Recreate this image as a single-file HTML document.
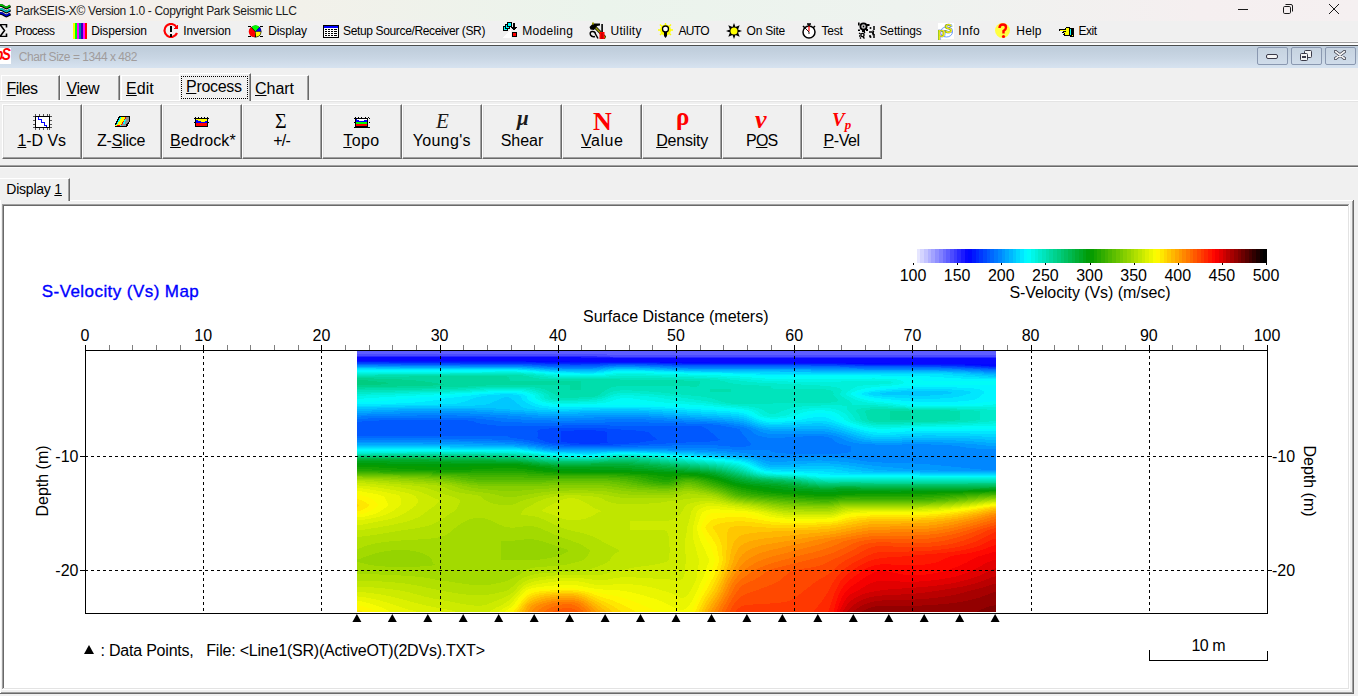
<!DOCTYPE html>
<html><head><meta charset="utf-8"><title>ParkSEIS-X</title>
<style>
html,body{margin:0;padding:0}
body{width:1358px;height:696px;overflow:hidden;position:relative;background:#f0f0f0;font-family:"Liberation Sans",sans-serif;color:#000}
.a{position:absolute;white-space:nowrap}
</style></head>
<body>
<div class="a" style="left:0px;top:0px;width:1358px;height:21px;background:linear-gradient(90deg,#f6efec 0px,#f2f1ea 300px,#ebf4ec 600px,#eef3ef 900px,#f5eff0 1200px,#f5f0f1 1358px);"></div>
<svg class="a" style="left:0;top:0" width="12" height="18" viewBox="0 0 12 18"><path d="M-1 5.5 Q2 5 5 7.5 Q6 8.3 7 7.8 L10.5 6" stroke="#000" stroke-width="2.8" fill="none"/><path d="M-1 5 Q2 4.5 5 7 Q6 7.8 7 7.3 L10 5.5" stroke="#00c000" stroke-width="1.6" fill="none"/><path d="M-1 9.5 Q2 9 5 11.5 Q6 12.3 7 11.8 L10.5 10" stroke="#000" stroke-width="2.8" fill="none"/><path d="M-1 9 Q2 8.5 5 11 Q6 11.8 7 11.3 L10 9.5" stroke="#00c8c8" stroke-width="1.6" fill="none"/><path d="M-1 13.5 Q2 13 5 15.5 Q6 16.3 7 15.8 L10.5 14" stroke="#000" stroke-width="2.8" fill="none"/><path d="M-1 13 Q2 12.5 5 15 Q6 15.8 7 15.3 L10 13.5" stroke="#0000d0" stroke-width="1.6" fill="none"/></svg>
<div class="a" style="left:15.60px;top:5px;font-size:12px;line-height:12px;letter-spacing:-0.307px;color:#1a1a1a;">ParkSEIS-X© Version 1.0 - Copyright Park Seismic LLC</div>
<div class="a" style="left:1238px;top:9px;width:10px;height:1px;background:#1a1a1a;"></div>
<svg class="a" style="left:1282px;top:3px" width="12" height="12" viewBox="0 0 12 12"><rect x="1.5" y="3.5" width="7" height="7" rx="1.2" fill="none" stroke="#1a1a1a" stroke-width="1"/><path d="M3.5 1.5 H9 Q10.5 1.5 10.5 3 V8.5" fill="none" stroke="#1a1a1a" stroke-width="1"/></svg>
<svg class="a" style="left:1328px;top:3px" width="12" height="12" viewBox="0 0 12 12"><path d="M1 1 L11 11 M11 1 L1 11" stroke="#1a1a1a" stroke-width="1"/></svg>
<div class="a" style="left:14.70px;top:25px;font-size:12px;line-height:12px;letter-spacing:-0.508px;">Process</div>
<div class="a" style="left:91.20px;top:25px;font-size:12px;line-height:12px;letter-spacing:-0.099px;">Dispersion</div>
<div class="a" style="left:183.20px;top:25px;font-size:12px;line-height:12px;letter-spacing:-0.111px;">Inversion</div>
<div class="a" style="left:268.20px;top:25px;font-size:12px;line-height:12px;letter-spacing:-0.091px;">Display</div>
<div class="a" style="left:343.10px;top:25px;font-size:12px;line-height:12px;letter-spacing:-0.364px;">Setup Source/Receiver (SR)</div>
<div class="a" style="left:522.20px;top:25px;font-size:12px;line-height:12px;letter-spacing:0.300px;">Modeling</div>
<div class="a" style="left:610.50px;top:25px;font-size:12px;line-height:12px;letter-spacing:0.261px;">Utility</div>
<div class="a" style="left:678.60px;top:25px;font-size:12px;line-height:12px;letter-spacing:-0.739px;">AUTO</div>
<div class="a" style="left:746.60px;top:25px;font-size:12px;line-height:12px;letter-spacing:-0.237px;">On Site</div>
<div class="a" style="left:821.50px;top:25px;font-size:12px;line-height:12px;letter-spacing:-0.203px;">Test</div>
<div class="a" style="left:879.50px;top:25px;font-size:12px;line-height:12px;letter-spacing:-0.151px;">Settings</div>
<div class="a" style="left:958.30px;top:25px;font-size:12px;line-height:12px;letter-spacing:0.495px;">Info</div>
<div class="a" style="left:1016.30px;top:25px;font-size:12px;line-height:12px;letter-spacing:0.173px;">Help</div>
<div class="a" style="left:1078.60px;top:25px;font-size:12px;line-height:12px;letter-spacing:-0.535px;">Exit</div>
<svg class="a" style="left:0px;top:24px" width="9" height="13" viewBox="0 0 9 13" shape-rendering="crispEdges"><path d="M-9 0.5 H6.5 V3.5 M6.5 9.5 V12.5 H-9 M0 0.5 L4.5 6.5 L0 12.5" fill="none" stroke="#000" stroke-width="1.6" shape-rendering="geometricPrecision"/></svg>
<svg class="a" style="left:73px;top:23px" width="14" height="16" viewBox="0 0 14 16" shape-rendering="crispEdges"><rect x="0" y="0" width="2" height="16" fill="#ffff00"/><rect x="2" y="0" width="2" height="16" fill="#00ff00"/><rect x="4" y="0" width="2" height="16" fill="#ff00ff"/><rect x="6" y="0" width="2" height="16" fill="#0080a0"/><rect x="8" y="0" width="2" height="16" fill="#3000c0"/><rect x="10" y="0" width="2" height="16" fill="#ff00ff"/><rect x="12" y="0" width="2" height="16" fill="#ff0000"/></svg>
<svg class="a" style="left:163px;top:23px" width="16" height="15" viewBox="0 0 16 15" shape-rendering="crispEdges"><path d="M13.5 4 A6.5 6.5 0 1 0 14 10" fill="none" stroke="#f00" stroke-width="2.2" shape-rendering="geometricPrecision"/><path d="M10 6 L15 1 L15 6 Z" fill="#f00"/><rect x="6.5" y="3" width="2.5" height="6" fill="#000"/><rect x="6.5" y="11" width="2.5" height="2.5" fill="#000"/></svg>
<svg class="a" style="left:248px;top:25px" width="16" height="13" viewBox="0 0 16 13" shape-rendering="crispEdges"><g shape-rendering="geometricPrecision"><circle cx="7.5" cy="6.5" r="6" fill="#000"/><path d="M7.5 6.5 L3.5 2 A5.3 5.3 0 0 1 11.5 2 Z" fill="#00ff00"/><path d="M7.5 6.5 L11.8 2.3 A5.3 5.3 0 0 1 12.8 6.5 Z" fill="#0000ff"/><path d="M7.5 6.7 H12.8 A5.3 5.3 0 0 1 8 11.8 Z" fill="#ffff00"/><path d="M7 6.7 V11.8 A5.3 5.3 0 0 1 3 2.3 Z" fill="#ff0000"/></g><rect x="0" y="1" width="3" height="1" fill="#000"/><rect x="12" y="1" width="3" height="1" fill="#000"/><rect x="0" y="11" width="3" height="1" fill="#000"/><rect x="12" y="11" width="3" height="1" fill="#000"/></svg>
<svg class="a" style="left:323px;top:25px" width="16" height="13" viewBox="0 0 16 13" shape-rendering="crispEdges"><rect x="0" y="0" width="16" height="13" fill="#000"/><rect x="1" y="1" width="14" height="11" fill="#fff"/><rect x="1" y="1" width="14" height="2" fill="#0000ff"/><rect x="2" y="4" width="2" height="1" fill="#000"/><rect x="5" y="4" width="2" height="1" fill="#000"/><rect x="8" y="4" width="2" height="1" fill="#000"/><rect x="11" y="4" width="3" height="1" fill="#000"/><rect x="2" y="6" width="2" height="1" fill="#000"/><rect x="5" y="6" width="2" height="1" fill="#000"/><rect x="8" y="6" width="2" height="1" fill="#000"/><rect x="11" y="6" width="3" height="1" fill="#000"/><rect x="2" y="8" width="2" height="1" fill="#000"/><rect x="5" y="8" width="2" height="1" fill="#000"/><rect x="8" y="8" width="2" height="1" fill="#000"/><rect x="11" y="8" width="3" height="1" fill="#000"/><rect x="2" y="10" width="2" height="1" fill="#000"/><rect x="5" y="10" width="2" height="1" fill="#000"/><rect x="8" y="10" width="2" height="1" fill="#000"/><rect x="11" y="10" width="3" height="1" fill="#000"/></svg>
<svg class="a" style="left:502px;top:22px" width="16" height="16" viewBox="0 0 16 16" shape-rendering="crispEdges"><rect x="1" y="4" width="5" height="5" fill="#000"/><rect x="2" y="5" width="3" height="3" fill="#0ff"/><rect x="3" y="2" width="5" height="5" fill="#000"/><rect x="4" y="3" width="3" height="3" fill="#0ff"/><rect x="5" y="0" width="5" height="5" fill="#000"/><rect x="6" y="1" width="3" height="3" fill="#0ff"/><path d="M11 1 H13 V5 H15 L12 9 L9 5 H11 Z" fill="#000"/><rect x="10" y="10" width="5" height="5" fill="#000"/><rect x="11" y="11" width="3" height="3" fill="#f00"/><path d="M0 16 L9 7 V16 Z" fill="#fff"/></svg>
<svg class="a" style="left:589px;top:22px" width="17" height="17" viewBox="0 0 17 17" shape-rendering="crispEdges"><g shape-rendering="geometricPrecision"><path d="M6 5 L16.5 16" stroke="#000" stroke-width="3"/><path d="M6 5 L16.5 16" stroke="#9a9a00" stroke-width="1.6"/><path d="M0.5 5 L4 1.5 H11 V3.5 L8 4 L5 8 L1.5 7.5 Z" fill="#000"/><rect x="3" y="0.5" width="2" height="2" fill="#9a9a00"/><rect x="12.3" y="2" width="1.6" height="8" fill="#000"/><rect x="10.5" y="10" width="5" height="7" fill="#f00"/><rect x="12.5" y="11" width="1" height="6" fill="#900"/><path d="M1.5 13 Q0.5 10 3 9.5 Q6 9 6.5 12 L9 16.5 M1.5 13 Q3 15.5 6 14.5" fill="none" stroke="#000" stroke-width="1.5"/></g></svg>
<svg class="a" style="left:658px;top:23px" width="15" height="16" viewBox="0 0 15 16" shape-rendering="crispEdges"><g shape-rendering="geometricPrecision"><circle cx="7.5" cy="7" r="5.5" fill="#ffff00"/><path d="M7.5 0 V3 M0 7 H3 M12 7 H15 M2 1.5 L4 3.5 M13 1.5 L11 3.5 M2 12 L4 10 M13 12 L11 10" stroke="#ff0" stroke-width="1.4"/><circle cx="7.5" cy="6" r="3" fill="#fff" stroke="#000" stroke-width="1.3"/><rect x="6" y="9" width="3" height="4" fill="#000"/><path d="M6 13 L7.5 15 L9 13Z" fill="#000"/></g></svg>
<svg class="a" style="left:726px;top:23px" width="16" height="16" viewBox="0 0 16 16" shape-rendering="crispEdges"><g shape-rendering="geometricPrecision"><path d="M8 0 L9.5 4 L13.7 2.3 L12 6.5 L16 8 L12 9.5 L13.7 13.7 L9.5 12 L8 16 L6.5 12 L2.3 13.7 L4 9.5 L0 8 L4 6.5 L2.3 2.3 L6.5 4 Z" fill="#000"/><circle cx="8" cy="8" r="3.5" fill="#ffff00"/></g></svg>
<svg class="a" style="left:801px;top:23px" width="16" height="16" viewBox="0 0 16 16" shape-rendering="crispEdges"><g shape-rendering="geometricPrecision"><circle cx="8" cy="9" r="6" fill="#fff" stroke="#000" stroke-width="1.5"/><path d="M6 1 H10 M8 1 V3 M2 3 L4 5 M14 3 L12 5" stroke="#000" stroke-width="1.5"/><path d="M8 3 V8.5" stroke="#f00" stroke-width="1.2"/><path d="M8 9 V11 M4 5 L8 9" stroke="#000" stroke-width="0.9"/></g></svg>
<svg class="a" style="left:858px;top:22px" width="17" height="17" viewBox="0 0 17 17" shape-rendering="crispEdges"><g shape-rendering="geometricPrecision"><circle cx="5.5" cy="4.5" r="3" fill="none" stroke="#000" stroke-width="2"/><circle cx="5.5" cy="4.5" r="2" fill="none" stroke="#999" stroke-width="0.7"/><circle cx="5.5" cy="4.5" r="0.9" fill="#000"/><rect x="0" y="0.5" width="1.6" height="3" fill="#000"/><rect x="9" y="2" width="2.5" height="2" fill="#000"/><rect x="4" y="8" width="3" height="2" fill="#000"/><rect x="0" y="7.5" width="2" height="1.5" fill="#000"/><rect x="8" y="7" width="2" height="2" fill="#000"/><path d="M16 4 V8 M16 12 V16" stroke="#000" stroke-width="1.5"/><path d="M15.5 8.5 A4 4.5 0 0 0 15.5 13" fill="none" stroke="#000" stroke-width="1.8"/><path d="M11 10 H14 M11 14 H13" stroke="#000" stroke-width="1.6"/><circle cx="12.5" cy="6" r="1" fill="#000"/><circle cx="12.5" cy="15" r="1" fill="#000"/><circle cx="4.5" cy="13" r="1.6" fill="none" stroke="#000" stroke-width="1.4"/><path d="M1 11 L2.5 12 M1 14 H2.5 M6 11 L7 10 M5 15 L6.5 16.5 M3 15.5 L2 16.5" stroke="#000" stroke-width="1.4"/></g></svg>
<svg class="a" style="left:938px;top:22px" width="16" height="18" viewBox="0 0 16 18" shape-rendering="crispEdges"><rect x="0" y="1" width="16" height="16" fill="#fff"/><g shape-rendering="geometricPrecision"><ellipse cx="8.5" cy="10" rx="6" ry="5" fill="none" stroke="#3c78ff" stroke-width="0.9" opacity="0.8"/><text x="-0.5" y="14.5" font-family="Liberation Sans" font-weight="bold" font-size="13" fill="#e6e600" stroke="#2050b0" stroke-width="0.7" paint-order="stroke">p</text><text x="6.5" y="10.5" font-family="Liberation Sans" font-weight="bold" font-size="12" fill="#e6e600" stroke="#2050b0" stroke-width="0.7" paint-order="stroke">S</text></g></svg>
<svg class="a" style="left:995px;top:22px" width="16" height="17" viewBox="0 0 16 17" shape-rendering="crispEdges"><defs><pattern id="chk" width="2" height="2" patternUnits="userSpaceOnUse"><rect width="2" height="2" fill="#fff"/><rect width="1" height="1" fill="#ff0"/><rect x="1" y="1" width="1" height="1" fill="#ff0"/></pattern></defs><g shape-rendering="geometricPrecision"><circle cx="7.5" cy="8.5" r="7.5" fill="#ffff40"/><path d="M4.5 6 Q4.5 2.5 8 2.5 Q11 2.5 11 5.5 Q11 7.5 8.5 9 V11.5" fill="none" stroke="#f00" stroke-width="2.4"/><circle cx="8.5" cy="14.5" r="1.6" fill="#f00"/></g></svg>
<svg class="a" style="left:1058px;top:26px" width="16" height="12" viewBox="0 0 16 12" shape-rendering="crispEdges"><path d="M0 4 L2 3 H7 L8 1 H11 L12 2 H16 V11 H12 L11 10 H7 L5 9 L6 7.5 L4 7 L5 5.5 L2 5 Z" fill="#000"/><rect x="2" y="4" width="6" height="0.9" fill="#ff0"/><path d="M8 2 H11 V9 H7 L6.5 8 L8 7 L6 6.5 L8 5.5 Z" fill="#ff0"/><rect x="12" y="3" width="1" height="6" fill="#0ff"/><rect x="14" y="9" width="1.2" height="1.2" fill="#ff0"/></svg>
<div class="a" style="left:0px;top:41px;width:1358px;height:1px;background:#f5f5f5;"></div>
<div class="a" style="left:0px;top:42px;width:1358px;height:1px;background:#a0a0a0;"></div>
<div class="a" style="left:0px;top:43px;width:1358px;height:2px;background:#fdfdfd;"></div>
<div class="a" style="left:0px;top:45px;width:1358px;height:1px;background:#4a4d4d;"></div>
<div class="a" style="left:0px;top:46px;width:1358px;height:22px;background:linear-gradient(180deg,#c5d3e2 0px,#bfcddb 2px,#c9d6e4 12px,#d7e3f0 22px);"></div>
<div class="a" style="left:0px;top:48px;width:11px;height:16px;background:#fff;"></div>
<div class="a" style="left:-5px;top:46px;font:bold italic 17px/17px 'Liberation Sans',sans-serif;color:#f00;letter-spacing:-2px;transform:scaleX(0.8);transform-origin:0 0">pS</div>
<div class="a" style="left:18.80px;top:51px;font-size:12px;line-height:12px;letter-spacing:-0.476px;color:#a09c9c;">Chart Size = 1344 x 482</div>
<div class="a" style="left:1257px;top:47px;width:29px;height:16px;border:1px solid #8a98b0;border-radius:2px;background:linear-gradient(180deg,#c6d3e0,#d0dcea)"></div>
<svg class="a" style="left:1266px;top:54px" width="12" height="5"><rect x="0.5" y="0.5" width="11" height="4" rx="1.5" fill="#f4f4f4" stroke="#3a3a48" stroke-width="1"/></svg>
<div class="a" style="left:1291px;top:47px;width:29px;height:16px;border:1px solid #8a98b0;border-radius:2px;background:linear-gradient(180deg,#c6d3e0,#d0dcea)"></div>
<svg class="a" style="left:1300px;top:50px" width="13" height="12"><rect x="4.5" y="0.5" width="7" height="7" rx="1" fill="#f4f4f4" stroke="#3a3a48"/><rect x="0.5" y="3.5" width="7" height="7" rx="1" fill="#f4f4f4" stroke="#3a3a48"/><rect x="2" y="6" width="4" height="2" fill="#3a3a48"/></svg>
<div class="a" style="left:1325px;top:47px;width:29px;height:16px;border:1px solid #8a98b0;border-radius:2px;background:linear-gradient(180deg,#c6d3e0,#d0dcea)"></div>
<svg class="a" style="left:1334px;top:50px" width="12" height="10"><path d="M1.5 1.5 L10.5 8.5 M10.5 1.5 L1.5 8.5" stroke="#3a3a48" stroke-width="3.2" stroke-linecap="round"/><path d="M1.5 1.5 L10.5 8.5 M10.5 1.5 L1.5 8.5" stroke="#f4f4f4" stroke-width="1.6" stroke-linecap="round"/></svg>
<div class="a" style="left:0px;top:100px;width:1358px;height:1px;background:#fff;"></div>
<div class="a" style="left:0px;top:101px;width:1358px;height:1px;background:#e4e4e4;"></div>
<div class="a" style="left:1px;top:75px;width:59px;height:25px;background:#f0f0f0;box-sizing:border-box;border-top:1px solid #fff;border-left:1px solid #fff;border-right:1px solid #696969;box-shadow:inset -1px 0 0 #a0a0a0;"></div>
<div class="a" style="left:6.50px;top:81px;font-size:16px;line-height:16px;letter-spacing:-0.570px;"><span style="text-decoration:underline;text-underline-offset:1px">F</span>iles</div>
<div class="a" style="left:60px;top:75px;width:60px;height:25px;background:#f0f0f0;box-sizing:border-box;border-top:1px solid #fff;border-left:1px solid #fff;border-right:1px solid #696969;box-shadow:inset -1px 0 0 #a0a0a0;"></div>
<div class="a" style="left:66.50px;top:81px;font-size:16px;line-height:16px;letter-spacing:-0.464px;"><span style="text-decoration:underline;text-underline-offset:1px">V</span>iew</div>
<div class="a" style="left:121px;top:75px;width:59px;height:25px;background:#f0f0f0;box-sizing:border-box;border-top:1px solid #fff;border-left:1px solid #fff;"></div>
<div class="a" style="left:126.00px;top:81px;font-size:16px;line-height:16px;letter-spacing:0.077px;"><span style="text-decoration:underline;text-underline-offset:1px">E</span>dit</div>
<div class="a" style="left:179px;top:73px;width:72px;height:28px;background:#f0f0f0;box-sizing:border-box;border-top:1px solid #fff;border-left:1px solid #fff;border-right:1px solid #696969;box-shadow:inset -1px 0 0 #a0a0a0;"></div>
<div class="a" style="left:186.00px;top:79px;font-size:16px;line-height:16px;letter-spacing:-0.300px;"><span style="text-decoration:underline;text-underline-offset:1px">P</span>rocess</div>
<div class="a" style="left:251px;top:75px;width:58px;height:25px;background:#f0f0f0;box-sizing:border-box;border-top:1px solid #fff;border-right:1px solid #696969;box-shadow:inset -1px 0 0 #a0a0a0;"></div>
<div class="a" style="left:255.00px;top:81px;font-size:16px;line-height:16px;letter-spacing:-0.031px;"><span style="text-decoration:underline;text-underline-offset:1px">C</span>hart</div>
<div class="a" style="left:181px;top:76px;width:67px;height:23px;box-sizing:border-box;border:1px dotted #000"></div>
<div class="a" style="left:2px;top:104px;width:80px;height:55px;box-sizing:border-box;background:#f0f0f0;border-top:1px solid #fff;border-left:1px solid #fff;border-right:1px solid #696969;border-bottom:1px solid #696969;box-shadow:inset -1px -1px 0 #a0a0a0,inset 1px 1px 0 #e3e3e3"></div>
<div class="a" style="left:17.50px;top:133px;font-size:16px;line-height:16px;letter-spacing:-0.080px;"><span style="text-decoration:underline;text-underline-offset:1px">1</span>-D Vs</div>
<div class="a" style="left:82px;top:104px;width:80px;height:55px;box-sizing:border-box;background:#f0f0f0;border-top:1px solid #fff;border-left:1px solid #fff;border-right:1px solid #696969;border-bottom:1px solid #696969;box-shadow:inset -1px -1px 0 #a0a0a0,inset 1px 1px 0 #e3e3e3"></div>
<div class="a" style="left:97.00px;top:133px;font-size:16px;line-height:16px;letter-spacing:-0.214px;">Z-<span style="text-decoration:underline;text-underline-offset:1px">S</span>lice</div>
<div class="a" style="left:162px;top:104px;width:80px;height:55px;box-sizing:border-box;background:#f0f0f0;border-top:1px solid #fff;border-left:1px solid #fff;border-right:1px solid #696969;border-bottom:1px solid #696969;box-shadow:inset -1px -1px 0 #a0a0a0,inset 1px 1px 0 #e3e3e3"></div>
<div class="a" style="left:170.10px;top:133px;font-size:16px;line-height:16px;letter-spacing:0.083px;"><span style="text-decoration:underline;text-underline-offset:1px">B</span>edrock*</div>
<div class="a" style="left:242px;top:104px;width:80px;height:55px;box-sizing:border-box;background:#f0f0f0;border-top:1px solid #fff;border-left:1px solid #fff;border-right:1px solid #696969;border-bottom:1px solid #696969;box-shadow:inset -1px -1px 0 #a0a0a0,inset 1px 1px 0 #e3e3e3"></div>
<div class="a" style="left:273.30px;top:133px;font-size:16px;line-height:16px;letter-spacing:-0.809px;">+/-</div>
<div class="a" style="left:322px;top:104px;width:80px;height:55px;box-sizing:border-box;background:#f0f0f0;border-top:1px solid #fff;border-left:1px solid #fff;border-right:1px solid #696969;border-bottom:1px solid #696969;box-shadow:inset -1px -1px 0 #a0a0a0,inset 1px 1px 0 #e3e3e3"></div>
<div class="a" style="left:343.30px;top:133px;font-size:16px;line-height:16px;letter-spacing:0.368px;"><span style="text-decoration:underline;text-underline-offset:1px">T</span>opo</div>
<div class="a" style="left:402px;top:104px;width:80px;height:55px;box-sizing:border-box;background:#f0f0f0;border-top:1px solid #fff;border-left:1px solid #fff;border-right:1px solid #696969;border-bottom:1px solid #696969;box-shadow:inset -1px -1px 0 #a0a0a0,inset 1px 1px 0 #e3e3e3"></div>
<div class="a" style="left:412.80px;top:133px;font-size:16px;line-height:16px;letter-spacing:0.325px;">Young's</div>
<div class="a" style="left:482px;top:104px;width:80px;height:55px;box-sizing:border-box;background:#f0f0f0;border-top:1px solid #fff;border-left:1px solid #fff;border-right:1px solid #696969;border-bottom:1px solid #696969;box-shadow:inset -1px -1px 0 #a0a0a0,inset 1px 1px 0 #e3e3e3"></div>
<div class="a" style="left:500.70px;top:133px;font-size:16px;line-height:16px;letter-spacing:-0.024px;">Shear</div>
<div class="a" style="left:562px;top:104px;width:80px;height:55px;box-sizing:border-box;background:#f0f0f0;border-top:1px solid #fff;border-left:1px solid #fff;border-right:1px solid #696969;border-bottom:1px solid #696969;box-shadow:inset -1px -1px 0 #a0a0a0,inset 1px 1px 0 #e3e3e3"></div>
<div class="a" style="left:581.10px;top:133px;font-size:16px;line-height:16px;letter-spacing:0.516px;"><span style="text-decoration:underline;text-underline-offset:1px">V</span>alue</div>
<div class="a" style="left:642px;top:104px;width:80px;height:55px;box-sizing:border-box;background:#f0f0f0;border-top:1px solid #fff;border-left:1px solid #fff;border-right:1px solid #696969;border-bottom:1px solid #696969;box-shadow:inset -1px -1px 0 #a0a0a0,inset 1px 1px 0 #e3e3e3"></div>
<div class="a" style="left:656.20px;top:133px;font-size:16px;line-height:16px;letter-spacing:-0.209px;"><span style="text-decoration:underline;text-underline-offset:1px">D</span>ensity</div>
<div class="a" style="left:722px;top:104px;width:80px;height:55px;box-sizing:border-box;background:#f0f0f0;border-top:1px solid #fff;border-left:1px solid #fff;border-right:1px solid #696969;border-bottom:1px solid #696969;box-shadow:inset -1px -1px 0 #a0a0a0,inset 1px 1px 0 #e3e3e3"></div>
<div class="a" style="left:746.10px;top:133px;font-size:16px;line-height:16px;letter-spacing:-0.895px;">P<span style="text-decoration:underline;text-underline-offset:1px">O</span>S</div>
<div class="a" style="left:802px;top:104px;width:80px;height:55px;box-sizing:border-box;background:#f0f0f0;border-top:1px solid #fff;border-left:1px solid #fff;border-right:1px solid #696969;border-bottom:1px solid #696969;box-shadow:inset -1px -1px 0 #a0a0a0,inset 1px 1px 0 #e3e3e3"></div>
<div class="a" style="left:823.50px;top:133px;font-size:16px;line-height:16px;letter-spacing:-0.436px;"><span style="text-decoration:underline;text-underline-offset:1px">P</span>-Vel</div>
<svg class="a" style="left:33px;top:114px" width="19" height="16" viewBox="0 0 19 16" shape-rendering="crispEdges"><rect x="2" y="2" width="15" height="12" fill="#000"/><rect x="3" y="3" width="13" height="10" fill="#fff"/><path d="M5 3 V5 H8 V8 H11 V11 H13 V13" fill="none" stroke="#00f" stroke-width="1"/><rect x="2" y="0" width="1" height="2" fill="#555"/><rect x="2" y="14" width="1" height="2" fill="#555"/><rect x="6" y="0" width="1" height="2" fill="#555"/><rect x="6" y="14" width="1" height="2" fill="#555"/><rect x="10" y="0" width="1" height="2" fill="#555"/><rect x="10" y="14" width="1" height="2" fill="#555"/><rect x="14" y="0" width="1" height="2" fill="#555"/><rect x="14" y="14" width="1" height="2" fill="#555"/><rect x="16" y="0" width="1" height="2" fill="#555"/><rect x="16" y="14" width="1" height="2" fill="#555"/><rect x="0" y="2" width="2" height="1" fill="#555"/><rect x="17" y="2" width="2" height="1" fill="#555"/><rect x="0" y="6" width="2" height="1" fill="#555"/><rect x="17" y="6" width="2" height="1" fill="#555"/><rect x="0" y="10" width="2" height="1" fill="#555"/><rect x="17" y="10" width="2" height="1" fill="#555"/><rect x="0" y="13" width="2" height="1" fill="#555"/><rect x="17" y="13" width="2" height="1" fill="#555"/></svg>
<svg class="a" style="left:114px;top:115px" width="16" height="12" viewBox="0 0 16 12" shape-rendering="crispEdges"><path d="M5 0.5 H15.5 V7 L13 11.5 H0.5 V10 Z" fill="#000"/><path d="M6 1.5 H14.5 V6.5 L12.5 9.5 H2 Z" fill="#909090"/><path d="M6 1.5 H12 L7 9.5 H2 Z" fill="#ffff00"/><path d="M6 1.5 H8 L3 9.5 H2 Z" fill="#00ffff"/><path d="M12 1.5 H13 L8 9.5 H7 Z" fill="#ff0000"/><path d="M10 6 L12 3 L11 9 H9Z" fill="#00ffff"/><rect x="1" y="10" width="2" height="1" fill="#ff0"/><rect x="3" y="10" width="3" height="1" fill="#f00"/><rect x="6" y="10" width="1" height="1" fill="#0ff"/><rect x="7" y="10" width="5" height="1" fill="#999"/></svg>
<svg class="a" style="left:194px;top:117px" width="15" height="11" viewBox="0 0 15 11" shape-rendering="crispEdges"><rect x="1" y="1" width="13" height="9" fill="#000"/><rect x="2" y="2" width="11" height="7" fill="#f00"/><rect x="2" y="2" width="11" height="4" fill="#00f"/><path d="M2 2 H13 V4 H11 L10 5 H7 L6 4 H4 L3 3 H2Z" fill="#ff0"/><rect x="1" y="0" width="1" height="1" fill="#000"/><rect x="4" y="0" width="1" height="1" fill="#000"/><rect x="7" y="0" width="1" height="1" fill="#000"/><rect x="10" y="0" width="1" height="1" fill="#000"/><rect x="13" y="0" width="1" height="1" fill="#000"/><rect x="0" y="1" width="1" height="1" fill="#000"/><rect x="14" y="1" width="1" height="1" fill="#000"/><rect x="0" y="5" width="1" height="1" fill="#000"/><rect x="14" y="5" width="1" height="1" fill="#000"/></svg>
<div class="a" style="left:275px;top:111px;font:20px/20px 'Liberation Serif',serif">Σ</div>
<svg class="a" style="left:354px;top:117px" width="16" height="11" viewBox="0 0 16 11" shape-rendering="crispEdges"><rect x="1" y="1" width="13" height="9" fill="#000"/><rect x="2" y="2" width="11" height="7" fill="#f00"/><rect x="2" y="2" width="11" height="5" fill="#0f0"/><rect x="2" y="2" width="11" height="3" fill="#00f"/><path d="M3 2 H13 V3 H10 L9 4 H5 L4 3 H3Z" fill="#fff"/><rect x="1" y="0" width="1" height="1" fill="#000"/><rect x="4" y="0" width="1" height="1" fill="#000"/><rect x="7" y="0" width="1" height="1" fill="#000"/><rect x="11" y="0" width="1" height="1" fill="#000"/><rect x="14" y="0" width="1" height="1" fill="#000"/><rect x="0" y="1" width="1" height="1" fill="#000"/><rect x="15" y="1" width="1" height="1" fill="#000"/><rect x="0" y="5" width="1" height="1" fill="#000"/><rect x="15" y="5" width="1" height="1" fill="#000"/><rect x="0" y="10" width="16" height="1" fill="#000"/></svg>
<div class="a" style="left:436px;top:111px;font:italic 21px/21px 'Liberation Serif',serif;color:#1a1a1a">E</div>
<div class="a" style="left:517px;top:108px;font:bold italic 21px/21px 'Liberation Serif',serif;color:#1a1a1a">μ</div>
<div class="a" style="left:593px;top:109px;font:bold 26px/26px 'Liberation Serif',serif;color:#f00">N</div>
<div class="a" style="left:676px;top:104px;font:bold 25px/25px 'Liberation Serif',serif;color:#f00">ρ</div>
<div class="a" style="left:755px;top:107px;font:bold italic 26px/26px 'Liberation Serif',serif;color:#f00">ν</div>
<div class="a" style="left:832px;top:110px;font:bold italic 19px/19px 'Liberation Serif',serif;color:#f00">V<span style="font-size:13px;position:relative;top:3px">p</span></div>
<div class="a" style="left:0px;top:165px;width:1358px;height:1px;background:#a0a0a0;"></div>
<div class="a" style="left:0px;top:166px;width:1358px;height:1px;background:#696969;"></div>
<div class="a" style="left:0px;top:167px;width:1358px;height:1px;background:#fbfbfb;"></div>
<div class="a" style="left:0px;top:200px;width:1354px;height:1px;background:#fff;"></div>
<div class="a" style="left:0px;top:178px;width:70px;height:23px;background:#f0f0f0;box-sizing:border-box;border-top:1px solid #fff;border-right:1px solid #696969;box-shadow:inset -1px 0 0 #a0a0a0"></div>
<div class="a" style="left:6.30px;top:182px;font-size:14px;line-height:14px;letter-spacing:-0.222px;">Display <span style="text-decoration:underline;text-underline-offset:1px">1</span></div>
<div class="a" style="left:0px;top:200px;width:1px;height:493px;background:#fff;"></div>
<div class="a" style="left:1353px;top:200px;width:1px;height:494px;background:#696969;"></div>
<div class="a" style="left:1352px;top:201px;width:1px;height:492px;background:#a0a0a0;"></div>
<div class="a" style="left:0px;top:693px;width:1354px;height:1px;background:#696969;"></div>
<div class="a" style="left:1px;top:692px;width:1352px;height:1px;background:#a0a0a0;"></div>
<div class="a" style="left:2px;top:204px;width:1348px;height:1px;background:#a0a0a0;"></div>
<div class="a" style="left:2px;top:204px;width:1px;height:486px;background:#a0a0a0;"></div>
<div class="a" style="left:3px;top:205px;width:1346px;height:1px;background:#696969;"></div>
<div class="a" style="left:3px;top:205px;width:1px;height:484px;background:#696969;"></div>
<div class="a" style="left:2px;top:689px;width:1348px;height:1px;background:#fff;"></div>
<div class="a" style="left:1349px;top:204px;width:1px;height:486px;background:#fff;"></div>
<div class="a" style="left:3px;top:688px;width:1346px;height:1px;background:#e3e3e3;"></div>
<div class="a" style="left:1348px;top:205px;width:1px;height:484px;background:#e3e3e3;"></div>
<div class="a" style="left:4px;top:206px;width:1344px;height:482px;background:#fff;"></div>
<svg class="a" style="left:0;top:0" width="1358" height="696" viewBox="0 0 1358 696"><path fill="#5e5eff" d="M357 351h639v3h-639zM607 354h389v1h-389z"/><path fill="#4c4cff" d="M357 354h250v1h-250zM357 355h639v1h-639zM610 356h386v1h-386z"/><path fill="#3c3cff" d="M597 356h13v1h-13z"/><path fill="#2a2aff" d="M357 356h240v1h-240zM613 357h383v1h-383z"/><path fill="#1a1aff" d="M581 357h32v1h-32z"/><path fill="#0808ff" d="M357 357h224v1h-224zM357 358h639v3h-639zM570 361h426v1h-426zM710 362h286v1h-286zM890 363h106v1h-106z"/><path fill="#0008ff" d="M526 361h44v1h-44zM660 362h50v1h-50zM846 363h44v1h-44zM965 364h31v1h-31zM981 365h15v1h-15z"/><path fill="#0018ff" d="M357 361h169v1h-169zM536 362h124v1h-124zM682 363h164v1h-164zM864 364h101v1h-101zM965 365h16v1h-16zM989 366h7v1h-7z"/><path fill="#0028ff" d="M389 362h147v1h-147zM545 363h55v1h-55zM657 363h25v1h-25zM837 364h27v1h-27zM941 365h24v1h-24zM975 366h14v1h-14z"/><path fill="#0038ff" d="M357 362h32v1h-32zM460 363h85v1h-85zM600 363h57v1h-57zM570 364h11v1h-11zM672 364h165v1h-165zM855 365h86v1h-86zM957 366h18v1h-18zM981 367h15v1h-15zM574 430h22v1h-22zM561 431h44v1h-44zM561 432h46v1h-46zM561 433h46v1h-46zM561 434h46v1h-46zM561 435h46v1h-46zM561 436h46v1h-46zM561 437h46v1h-46zM561 438h46v1h-46zM561 439h46v1h-46zM561 440h46v1h-46zM561 441h46v1h-46zM567 442h41v1h-41zM579 443h21v1h-21z"/><path fill="#0048ff" d="M357 363h103v1h-103zM532 364h38v1h-38zM581 364h27v1h-27zM647 364h25v1h-25zM811 365h44v1h-44zM911 366h46v1h-46zM965 367h16v1h-16zM988 368h8v1h-8zM549 428h58v1h-58zM540 429h81v1h-81zM538 430h36v1h-36zM596 430h40v1h-40zM537 431h24v1h-24zM605 431h40v1h-40zM538 432h23v1h-23zM607 432h42v1h-42zM538 433h23v1h-23zM607 433h43v1h-43zM538 434h23v1h-23zM607 434h44v1h-44zM538 435h23v1h-23zM607 435h45v1h-45zM538 436h23v1h-23zM607 436h46v1h-46zM537 437h24v1h-24zM607 437h48v1h-48zM538 438h23v1h-23zM607 438h49v1h-49zM540 439h21v1h-21zM607 439h50v1h-50zM543 440h18v1h-18zM607 440h46v1h-46zM545 441h16v1h-16zM607 441h39v1h-39zM549 442h18v1h-18zM608 442h32v1h-32zM556 443h23v1h-23zM600 443h29v1h-29zM570 444h43v1h-43z"/><path fill="#0058ff" d="M401 364h131v1h-131zM608 364h39v1h-39zM541 365h62v1h-62zM663 365h148v1h-148zM840 366h71v1h-71zM941 367h24v1h-24zM973 368h15v1h-15zM379 420h89v1h-89zM362 421h112v1h-112zM357 422h119v1h-119zM357 423h123v1h-123zM357 424h130v1h-130zM357 425h139v1h-139zM562 425h48v1h-48zM357 426h345v1h-345zM357 427h347v1h-347zM357 428h192v1h-192zM607 428h99v1h-99zM357 429h183v1h-183zM621 429h87v1h-87zM357 430h181v1h-181zM636 430h73v1h-73zM357 431h180v1h-180zM645 431h65v1h-65zM357 432h181v1h-181zM649 432h62v1h-62zM357 433h181v1h-181zM650 433h63v1h-63zM357 434h181v1h-181zM651 434h63v1h-63zM357 435h181v1h-181zM652 435h63v1h-63zM508 436h30v1h-30zM653 436h63v1h-63zM510 437h27v1h-27zM655 437h62v1h-62zM517 438h21v1h-21zM656 438h62v1h-62zM524 439h16v1h-16zM657 439h63v1h-63zM530 440h13v1h-13zM653 440h65v1h-65zM534 441h11v1h-11zM646 441h64v1h-64zM539 442h10v1h-10zM640 442h46v1h-46zM544 443h12v1h-12zM629 443h37v1h-37zM552 444h18v1h-18zM613 444h36v1h-36zM564 445h57v1h-57z"/><path fill="#0068ff" d="M357 364h44v1h-44zM523 365h18v1h-18zM603 365h13v1h-13zM635 365h28v1h-28zM547 366h53v1h-53zM672 366h168v1h-168zM849 367h92v1h-92zM952 368h21v1h-21zM980 369h16v1h-16zM368 418h108v1h-108zM357 419h129v1h-129zM357 420h22v1h-22zM468 420h26v1h-26zM357 421h5v1h-5zM474 421h27v1h-27zM476 422h46v1h-46zM605 422h44v1h-44zM480 423h206v1h-206zM487 424h226v1h-226zM496 425h66v1h-66zM610 425h111v1h-111zM702 426h24v1h-24zM704 427h28v1h-28zM706 428h31v1h-31zM708 429h32v1h-32zM709 430h31v1h-31zM710 431h31v1h-31zM711 432h31v1h-31zM713 433h29v1h-29zM714 434h29v1h-29zM715 435h29v1h-29zM357 436h151v1h-151zM716 436h29v1h-29zM357 437h153v1h-153zM717 437h29v1h-29zM441 438h76v1h-76zM718 438h29v1h-29zM492 439h32v1h-32zM720 439h27v1h-27zM514 440h16v1h-16zM718 440h30v1h-30zM523 441h11v1h-11zM710 441h39v1h-39zM529 442h10v1h-10zM686 442h64v1h-64zM534 443h10v1h-10zM666 443h85v1h-85zM541 444h11v1h-11zM649 444h102v1h-102zM548 445h16v1h-16zM621 445h51v1h-51zM718 445h32v1h-32zM558 446h80v1h-80zM730 446h16v1h-16z"/><path fill="#0078ff" d="M378 365h145v1h-145zM616 365h19v1h-19zM532 366h15v1h-15zM600 366h9v1h-9zM650 366h22v1h-22zM554 367h43v1h-43zM680 367h169v1h-169zM857 368h95v1h-95zM961 369h19v1h-19zM981 370h15v1h-15zM417 415h40v1h-40zM361 416h122v1h-122zM357 417h139v1h-139zM357 418h11v1h-11zM476 418h31v1h-31zM486 419h35v1h-35zM605 419h41v1h-41zM494 420h57v1h-57zM575 420h89v1h-89zM501 421h183v1h-183zM522 422h83v1h-83zM649 422h58v1h-58zM686 423h34v1h-34zM713 424h16v1h-16zM721 425h13v1h-13zM726 426h14v1h-14zM732 427h12v1h-12zM737 428h10v1h-10zM740 429h9v1h-9zM740 430h11v1h-11zM741 431h11v1h-11zM742 432h11v1h-11zM742 433h12v1h-12zM743 434h13v1h-13zM744 435h14v1h-14zM745 436h17v1h-17zM803 436h21v1h-21zM746 437h21v1h-21zM785 437h44v1h-44zM357 438h84v1h-84zM747 438h85v1h-85zM357 439h135v1h-135zM747 439h86v1h-86zM459 440h55v1h-55zM748 440h86v1h-86zM498 441h25v1h-25zM749 441h86v1h-86zM516 442h13v1h-13zM750 442h87v1h-87zM524 443h10v1h-10zM751 443h88v1h-88zM531 444h10v1h-10zM751 444h92v1h-92zM538 445h10v1h-10zM672 445h46v1h-46zM750 445h97v1h-97zM545 446h13v1h-13zM638 446h92v1h-92zM746 446h105v1h-105zM553 447h298v1h-298zM717 448h134v1h-134zM732 449h119v1h-119zM770 450h81v1h-81zM771 451h80v1h-80zM775 452h73v1h-73zM786 453h55v1h-55z"/><path fill="#0087ff" d="M357 365h21v1h-21zM460 366h72v1h-72zM609 366h41v1h-41zM539 367h15v1h-15zM597 367h8v1h-8zM660 367h20v1h-20zM562 368h31v1h-31zM688 368h169v1h-169zM864 369h97v1h-97zM965 370h16v1h-16zM983 371h13v1h-13zM400 413h70v1h-70zM367 414h123v1h-123zM357 415h60v1h-60zM457 415h51v1h-51zM357 416h4v1h-4zM483 416h38v1h-38zM496 417h36v1h-36zM594 417h57v1h-57zM507 418h160v1h-160zM521 419h84v1h-84zM646 419h36v1h-36zM551 420h24v1h-24zM664 420h36v1h-36zM684 421h33v1h-33zM707 422h20v1h-20zM720 423h14v1h-14zM729 424h11v1h-11zM734 425h10v1h-10zM740 426h7v1h-7zM744 427h7v1h-7zM747 428h6v1h-6zM749 429h7v1h-7zM751 430h7v1h-7zM752 431h8v1h-8zM753 432h10v1h-10zM754 433h13v1h-13zM756 434h72v1h-72zM758 435h75v1h-75zM762 436h41v1h-41zM824 436h13v1h-13zM767 437h18v1h-18zM829 437h11v1h-11zM832 438h10v1h-10zM833 439h11v1h-11zM357 440h102v1h-102zM834 440h12v1h-12zM357 441h141v1h-141zM835 441h14v1h-14zM473 442h43v1h-43zM837 442h16v1h-16zM505 443h19v1h-19zM839 443h20v1h-20zM519 444h12v1h-12zM843 444h32v1h-32zM902 444h29v1h-29zM528 445h10v1h-10zM847 445h105v1h-105zM536 446h9v1h-9zM851 446h109v1h-109zM543 447h10v1h-10zM851 447h115v1h-115zM550 448h167v1h-167zM851 448h125v1h-125zM668 449h64v1h-64zM851 449h145v1h-145zM708 450h62v1h-62zM851 450h145v1h-145zM727 451h44v1h-44zM851 451h145v1h-145zM739 452h36v1h-36zM848 452h148v1h-148zM747 453h39v1h-39zM841 453h155v1h-155zM752 454h244v1h-244zM758 455h238v1h-238zM762 456h234v1h-234zM767 457h37v1h-37zM832 457h164v1h-164zM848 458h148v1h-148zM854 459h142v1h-142zM860 460h136v1h-136zM867 461h129v1h-129zM882 462h114v1h-114zM914 463h82v1h-82zM930 464h66v1h-66zM941 465h55v1h-55zM951 466h45v1h-45zM961 467h35v1h-35zM970 468h26v1h-26zM981 469h15v1h-15z"/><path fill="#0097ff" d="M357 366h103v1h-103zM527 367h12v1h-12zM605 367h9v1h-9zM639 367h21v1h-21zM544 368h18v1h-18zM593 368h10v1h-10zM667 368h21v1h-21zM811 369h53v1h-53zM939 370h26v1h-26zM968 371h15v1h-15zM984 372h12v1h-12zM394 411h83v1h-83zM371 412h122v1h-122zM357 413h43v1h-43zM470 413h40v1h-40zM357 414h10v1h-10zM490 414h36v1h-36zM508 415h30v1h-30zM584 415h65v1h-65zM521 416h143v1h-143zM532 417h62v1h-62zM651 417h28v1h-28zM667 418h28v1h-28zM682 419h30v1h-30zM700 420h25v1h-25zM717 421h17v1h-17zM727 422h13v1h-13zM734 423h10v1h-10zM740 424h7v1h-7zM744 425h6v1h-6zM747 426h6v1h-6zM751 427h5v1h-5zM753 428h6v1h-6zM756 429h7v1h-7zM758 430h12v1h-12zM760 431h65v1h-65zM763 432h68v1h-68zM767 433h69v1h-69zM828 434h11v1h-11zM833 435h9v1h-9zM837 436h9v1h-9zM840 437h8v1h-8zM842 438h9v1h-9zM844 439h9v1h-9zM846 440h11v1h-11zM849 441h13v1h-13zM357 442h116v1h-116zM853 442h19v1h-19zM902 442h41v1h-41zM423 443h82v1h-82zM859 443h106v1h-106zM483 444h36v1h-36zM875 444h27v1h-27zM931 444h46v1h-46zM515 445h13v1h-13zM952 445h34v1h-34zM527 446h9v1h-9zM960 446h36v1h-36zM536 447h7v1h-7zM966 447h30v1h-30zM542 448h8v1h-8zM976 448h20v1h-20zM550 449h118v1h-118zM667 450h41v1h-41zM697 451h30v1h-30zM716 452h23v1h-23zM727 453h20v1h-20zM735 454h17v1h-17zM743 455h15v1h-15zM750 456h12v1h-12zM755 457h12v1h-12zM804 457h28v1h-28zM759 458h89v1h-89zM762 459h92v1h-92zM765 460h51v1h-51zM822 460h38v1h-38zM770 461h17v1h-17zM839 461h28v1h-28zM849 462h33v1h-33zM857 463h57v1h-57zM864 464h66v1h-66zM872 465h69v1h-69zM881 466h70v1h-70zM893 467h68v1h-68zM903 468h67v1h-67zM912 469h69v1h-69zM938 470h58v1h-58z"/><path fill="#00a7ff" d="M400 367h127v1h-127zM614 367h25v1h-25zM534 368h10v1h-10zM603 368h7v1h-7zM650 368h17v1h-17zM550 369h51v1h-51zM672 369h139v1h-139zM811 370h128v1h-128zM947 371h21v1h-21zM971 372h13v1h-13zM984 373h12v1h-12zM398 409h77v1h-77zM372 410h122v1h-122zM357 411h37v1h-37zM477 411h33v1h-33zM357 412h14v1h-14zM493 412h32v1h-32zM510 413h28v1h-28zM578 413h71v1h-71zM526 414h137v1h-137zM538 415h46v1h-46zM649 415h27v1h-27zM664 416h26v1h-26zM679 417h28v1h-28zM695 418h28v1h-28zM712 419h21v1h-21zM725 420h14v1h-14zM734 421h10v1h-10zM740 422h7v1h-7zM744 423h6v1h-6zM747 424h5v1h-5zM750 425h5v1h-5zM753 426h5v1h-5zM756 427h6v1h-6zM759 428h9v1h-9zM763 429h66v1h-66zM770 430h63v1h-63zM825 431h12v1h-12zM831 432h10v1h-10zM836 433h8v1h-8zM839 434h8v1h-8zM842 435h8v1h-8zM846 436h7v1h-7zM848 437h8v1h-8zM851 438h8v1h-8zM853 439h11v1h-11zM857 440h14v1h-14zM902 440h54v1h-54zM862 441h112v1h-112zM872 442h30v1h-30zM943 442h43v1h-43zM357 443h66v1h-66zM965 443h31v1h-31zM357 444h126v1h-126zM977 444h19v1h-19zM464 445h51v1h-51zM986 445h10v1h-10zM514 446h13v1h-13zM528 447h8v1h-8zM535 448h7v1h-7zM542 449h8v1h-8zM552 450h115v1h-115zM672 451h25v1h-25zM695 452h21v1h-21zM711 453h16v1h-16zM721 454h14v1h-14zM729 455h14v1h-14zM739 456h11v1h-11zM747 457h8v1h-8zM752 458h7v1h-7zM755 459h7v1h-7zM758 460h7v1h-7zM816 460h6v1h-6zM761 461h9v1h-9zM787 461h52v1h-52zM763 462h86v1h-86zM766 463h41v1h-41zM830 463h27v1h-27zM769 464h22v1h-22zM841 464h23v1h-23zM849 465h23v1h-23zM856 466h25v1h-25zM862 467h31v1h-31zM868 468h35v1h-35zM874 469h38v1h-38zM887 470h51v1h-51zM920 471h76v1h-76z"/><path fill="#00b7ff" d="M357 367h43v1h-43zM522 368h12v1h-12zM610 368h40v1h-40zM540 369h10v1h-10zM601 369h7v1h-7zM655 369h17v1h-17zM557 370h42v1h-42zM684 370h127v1h-127zM780 371h167v1h-167zM953 372h18v1h-18zM970 373h14v1h-14zM982 374h14v1h-14zM994 375h2v1h-2zM377 408h119v1h-119zM357 409h41v1h-41zM475 409h35v1h-35zM357 410h15v1h-15zM494 410h30v1h-30zM510 411h27v1h-27zM580 411h69v1h-69zM525 412h138v1h-138zM538 413h40v1h-40zM649 413h26v1h-26zM663 414h24v1h-24zM676 415h26v1h-26zM690 416h29v1h-29zM707 417h25v1h-25zM723 418h16v1h-16zM733 419h11v1h-11zM739 420h8v1h-8zM744 421h6v1h-6zM747 422h5v1h-5zM750 423h5v1h-5zM752 424h6v1h-6zM755 425h6v1h-6zM758 426h8v1h-8zM800 426h26v1h-26zM762 427h69v1h-69zM768 428h67v1h-67zM829 429h10v1h-10zM833 430h9v1h-9zM837 431h8v1h-8zM841 432h7v1h-7zM844 433h7v1h-7zM847 434h7v1h-7zM850 435h7v1h-7zM853 436h8v1h-8zM856 437h9v1h-9zM859 438h11v1h-11zM902 438h68v1h-68zM864 439h121v1h-121zM871 440h31v1h-31zM956 440h40v1h-40zM974 441h22v1h-22zM986 442h10v1h-10zM357 445h107v1h-107zM450 446h64v1h-64zM517 447h11v1h-11zM528 448h7v1h-7zM536 449h6v1h-6zM544 450h8v1h-8zM558 451h49v1h-49zM647 451h25v1h-25zM677 452h18v1h-18zM694 453h17v1h-17zM707 454h14v1h-14zM717 455h12v1h-12zM727 456h12v1h-12zM737 457h10v1h-10zM745 458h7v1h-7zM750 459h5v1h-5zM753 460h5v1h-5zM756 461h5v1h-5zM758 462h5v1h-5zM760 463h6v1h-6zM807 463h23v1h-23zM762 464h7v1h-7zM791 464h50v1h-50zM764 465h85v1h-85zM768 466h32v1h-32zM834 466h22v1h-22zM843 467h19v1h-19zM849 468h19v1h-19zM855 469h19v1h-19zM861 470h26v1h-26zM873 471h47v1h-47zM920 472h76v1h-76z"/><path fill="#00c7ff" d="M376 368h146v1h-146zM530 369h10v1h-10zM608 369h8v1h-8zM636 369h19v1h-19zM545 370h12v1h-12zM599 370h7v1h-7zM664 370h20v1h-20zM566 371h31v1h-31zM701 371h79v1h-79zM811 372h142v1h-142zM952 373h18v1h-18zM966 374h16v1h-16zM975 375h19v1h-19zM988 376h8v1h-8zM901 391h47v1h-47zM886 392h66v1h-66zM880 393h71v1h-71zM882 394h61v1h-61zM909 395h21v1h-21zM504 397h5v1h-5zM501 398h10v1h-10zM499 399h13v1h-13zM497 400h17v1h-17zM494 401h21v1h-21zM492 402h24v1h-24zM490 403h27v1h-27zM486 404h33v1h-33zM475 405h45v1h-45zM405 406h116v1h-116zM357 407h166v1h-166zM357 408h20v1h-20zM496 408h31v1h-31zM510 409h25v1h-25zM600 409h39v1h-39zM524 410h27v1h-27zM569 410h93v1h-93zM537 411h43v1h-43zM649 411h26v1h-26zM663 412h24v1h-24zM675 413h26v1h-26zM687 414h30v1h-30zM702 415h29v1h-29zM719 416h20v1h-20zM732 417h12v1h-12zM739 418h8v1h-8zM744 419h5v1h-5zM747 420h5v1h-5zM750 421h4v1h-4zM752 422h5v1h-5zM755 423h5v1h-5zM812 423h11v1h-11zM758 424h6v1h-6zM797 424h32v1h-32zM761 425h72v1h-72zM766 426h34v1h-34zM826 426h11v1h-11zM831 427h9v1h-9zM835 428h8v1h-8zM839 429h7v1h-7zM842 430h7v1h-7zM845 431h7v1h-7zM848 432h8v1h-8zM851 433h8v1h-8zM854 434h8v1h-8zM857 435h9v1h-9zM922 435h14v1h-14zM861 436h10v1h-10zM900 436h82v1h-82zM865 437h131v1h-131zM870 438h32v1h-32zM970 438h26v1h-26zM985 439h11v1h-11zM357 446h93v1h-93zM450 447h67v1h-67zM520 448h8v1h-8zM529 449h7v1h-7zM537 450h7v1h-7zM547 451h11v1h-11zM607 451h40v1h-40zM566 452h35v1h-35zM659 452h18v1h-18zM680 453h14v1h-14zM694 454h13v1h-13zM705 455h12v1h-12zM715 456h12v1h-12zM726 457h11v1h-11zM736 458h9v1h-9zM743 459h7v1h-7zM748 460h5v1h-5zM751 461h5v1h-5zM754 462h4v1h-4zM756 463h4v1h-4zM757 464h5v1h-5zM759 465h5v1h-5zM762 466h6v1h-6zM800 466h34v1h-34zM765 467h78v1h-78zM770 468h79v1h-79zM836 469h19v1h-19zM842 470h19v1h-19zM848 471h25v1h-25zM862 472h58v1h-58zM920 473h76v1h-76z"/><path fill="#00d7ff" d="M357 368h19v1h-19zM518 369h12v1h-12zM616 369h20v1h-20zM536 370h9v1h-9zM606 370h7v1h-7zM645 370h19v1h-19zM549 371h17v1h-17zM597 371h7v1h-7zM674 371h27v1h-27zM574 372h22v1h-22zM722 372h89v1h-89zM760 373h192v1h-192zM943 374h23v1h-23zM953 375h22v1h-22zM963 376h25v1h-25zM979 377h17v1h-17zM907 389h45v1h-45zM892 390h72v1h-72zM880 391h21v1h-21zM948 391h22v1h-22zM871 392h15v1h-15zM952 392h19v1h-19zM868 393h12v1h-12zM951 393h19v1h-19zM500 394h13v1h-13zM869 394h13v1h-13zM943 394h23v1h-23zM487 395h32v1h-32zM873 395h36v1h-36zM930 395h33v1h-33zM481 396h40v1h-40zM882 396h77v1h-77zM476 397h28v1h-28zM509 397h12v1h-12zM895 397h58v1h-58zM473 398h28v1h-28zM511 398h11v1h-11zM910 398h30v1h-30zM470 399h29v1h-29zM512 399h10v1h-10zM468 400h29v1h-29zM514 400h9v1h-9zM465 401h29v1h-29zM515 401h10v1h-10zM461 402h31v1h-31zM516 402h10v1h-10zM457 403h33v1h-33zM517 403h11v1h-11zM438 404h48v1h-48zM519 404h11v1h-11zM381 405h94v1h-94zM520 405h12v1h-12zM357 406h48v1h-48zM521 406h14v1h-14zM523 407h16v1h-16zM527 408h21v1h-21zM582 408h69v1h-69zM535 409h65v1h-65zM639 409h34v1h-34zM551 410h18v1h-18zM662 410h25v1h-25zM675 411h26v1h-26zM687 412h30v1h-30zM701 413h30v1h-30zM717 414h22v1h-22zM731 415h13v1h-13zM739 416h8v1h-8zM744 417h5v1h-5zM747 418h5v1h-5zM749 419h5v1h-5zM752 420h5v1h-5zM754 421h5v1h-5zM806 421h21v1h-21zM757 422h6v1h-6zM796 422h36v1h-36zM760 423h9v1h-9zM782 423h30v1h-30zM823 423h12v1h-12zM764 424h33v1h-33zM829 424h9v1h-9zM833 425h8v1h-8zM837 426h7v1h-7zM840 427h7v1h-7zM843 428h7v1h-7zM846 429h7v1h-7zM849 430h7v1h-7zM852 431h8v1h-8zM856 432h8v1h-8zM859 433h9v1h-9zM911 433h59v1h-59zM862 434h11v1h-11zM896 434h100v1h-100zM866 435h56v1h-56zM936 435h60v1h-60zM871 436h29v1h-29zM982 436h14v1h-14zM357 447h93v1h-93zM450 448h70v1h-70zM522 449h7v1h-7zM531 450h6v1h-6zM540 451h7v1h-7zM551 452h15v1h-15zM601 452h13v1h-13zM636 452h23v1h-23zM575 453h22v1h-22zM666 453h14v1h-14zM681 454h13v1h-13zM693 455h12v1h-12zM703 456h12v1h-12zM714 457h12v1h-12zM725 458h11v1h-11zM735 459h8v1h-8zM742 460h6v1h-6zM746 461h5v1h-5zM750 462h4v1h-4zM752 463h4v1h-4zM754 464h3v1h-3zM756 465h3v1h-3zM758 466h4v1h-4zM760 467h5v1h-5zM763 468h7v1h-7zM766 469h70v1h-70zM781 470h61v1h-61zM824 471h24v1h-24zM834 472h28v1h-28zM849 473h71v1h-71zM920 474h76v1h-76z"/><path fill="#00e7ff" d="M357 369h161v1h-161zM527 370h9v1h-9zM613 370h32v1h-32zM539 371h10v1h-10zM604 371h7v1h-7zM654 371h20v1h-20zM554 372h20v1h-20zM596 372h8v1h-8zM684 372h38v1h-38zM580 373h14v1h-14zM733 373h27v1h-27zM756 374h187v1h-187zM881 375h72v1h-72zM930 376h33v1h-33zM944 377h35v1h-35zM961 378h35v1h-35zM912 387h45v1h-45zM898 388h76v1h-76zM886 389h21v1h-21zM952 389h28v1h-28zM875 390h17v1h-17zM964 390h18v1h-18zM869 391h11v1h-11zM970 391h14v1h-14zM864 392h7v1h-7zM971 392h13v1h-13zM494 393h23v1h-23zM862 393h6v1h-6zM970 393h14v1h-14zM479 394h21v1h-21zM513 394h10v1h-10zM862 394h7v1h-7zM966 394h16v1h-16zM471 395h16v1h-16zM519 395h6v1h-6zM865 395h8v1h-8zM963 395h18v1h-18zM462 396h19v1h-19zM521 396h6v1h-6zM869 396h13v1h-13zM959 396h21v1h-21zM454 397h22v1h-22zM521 397h6v1h-6zM874 397h21v1h-21zM953 397h26v1h-26zM445 398h28v1h-28zM522 398h5v1h-5zM881 398h29v1h-29zM940 398h37v1h-37zM440 399h30v1h-30zM522 399h6v1h-6zM891 399h84v1h-84zM433 400h35v1h-35zM523 400h6v1h-6zM901 400h68v1h-68zM425 401h40v1h-40zM525 401h6v1h-6zM911 401h47v1h-47zM415 402h46v1h-46zM526 402h7v1h-7zM396 403h61v1h-61zM528 403h7v1h-7zM357 404h81v1h-81zM530 404h8v1h-8zM357 405h24v1h-24zM532 405h10v1h-10zM535 406h14v1h-14zM539 407h126v1h-126zM548 408h34v1h-34zM651 408h34v1h-34zM673 409h28v1h-28zM687 410h29v1h-29zM701 411h29v1h-29zM717 412h22v1h-22zM731 413h13v1h-13zM739 414h8v1h-8zM744 415h5v1h-5zM747 416h5v1h-5zM749 417h5v1h-5zM813 417h13v1h-13zM752 418h4v1h-4zM807 418h22v1h-22zM754 419h5v1h-5zM802 419h29v1h-29zM757 420h5v1h-5zM795 420h39v1h-39zM759 421h7v1h-7zM785 421h21v1h-21zM827 421h9v1h-9zM763 422h33v1h-33zM832 422h7v1h-7zM769 423h13v1h-13zM835 423h7v1h-7zM838 424h6v1h-6zM841 425h6v1h-6zM844 426h6v1h-6zM847 427h6v1h-6zM850 428h7v1h-7zM853 429h7v1h-7zM856 430h8v1h-8zM860 431h9v1h-9zM905 431h91v1h-91zM864 432h13v1h-13zM890 432h106v1h-106zM868 433h43v1h-43zM970 433h26v1h-26zM873 434h23v1h-23zM357 448h93v1h-93zM441 449h81v1h-81zM524 450h7v1h-7zM533 451h7v1h-7zM543 452h8v1h-8zM614 452h22v1h-22zM555 453h20v1h-20zM597 453h10v1h-10zM650 453h16v1h-16zM582 454h11v1h-11zM669 454h12v1h-12zM682 455h11v1h-11zM692 456h11v1h-11zM702 457h12v1h-12zM713 458h12v1h-12zM725 459h10v1h-10zM734 460h8v1h-8zM741 461h5v1h-5zM745 462h5v1h-5zM748 463h4v1h-4zM750 464h4v1h-4zM752 465h4v1h-4zM754 466h4v1h-4zM757 467h3v1h-3zM759 468h4v1h-4zM761 469h5v1h-5zM764 470h17v1h-17zM772 471h52v1h-52zM804 472h30v1h-30zM818 473h31v1h-31zM830 474h90v1h-90zM919 475h77v1h-77z"/><path fill="#00f7ff" d="M357 370h170v1h-170zM530 371h9v1h-9zM611 371h43v1h-43zM543 372h11v1h-11zM604 372h8v1h-8zM657 372h27v1h-27zM558 373h22v1h-22zM594 373h10v1h-10zM690 373h43v1h-43zM586 374h3v1h-3zM732 374h24v1h-24zM751 375h130v1h-130zM765 376h22v1h-22zM862 376h68v1h-68zM906 377h38v1h-38zM916 378h45v1h-45zM921 379h75v1h-75zM923 380h73v1h-73zM912 385h84v1h-84zM901 386h95v1h-95zM890 387h22v1h-22zM957 387h39v1h-39zM879 388h19v1h-19zM974 388h22v1h-22zM871 389h15v1h-15zM980 389h16v1h-16zM865 390h10v1h-10zM982 390h14v1h-14zM861 391h8v1h-8zM984 391h12v1h-12zM490 392h29v1h-29zM858 392h6v1h-6zM984 392h12v1h-12zM475 393h19v1h-19zM517 393h8v1h-8zM856 393h6v1h-6zM984 393h12v1h-12zM462 394h17v1h-17zM523 394h5v1h-5zM856 394h6v1h-6zM982 394h14v1h-14zM450 395h21v1h-21zM525 395h5v1h-5zM859 395h6v1h-6zM981 395h15v1h-15zM434 396h28v1h-28zM527 396h4v1h-4zM861 396h8v1h-8zM980 396h16v1h-16zM420 397h34v1h-34zM527 397h4v1h-4zM864 397h10v1h-10zM979 397h17v1h-17zM408 398h37v1h-37zM527 398h5v1h-5zM868 398h13v1h-13zM977 398h19v1h-19zM399 399h41v1h-41zM528 399h5v1h-5zM874 399h17v1h-17zM975 399h21v1h-21zM388 400h45v1h-45zM529 400h6v1h-6zM881 400h20v1h-20zM969 400h27v1h-27zM375 401h50v1h-50zM531 401h6v1h-6zM891 401h20v1h-20zM958 401h32v1h-32zM357 402h58v1h-58zM533 402h6v1h-6zM899 402h84v1h-84zM357 403h39v1h-39zM535 403h8v1h-8zM906 403h69v1h-69zM538 404h10v1h-10zM913 404h51v1h-51zM542 405h18v1h-18zM580 405h74v1h-74zM549 406h133v1h-133zM665 407h36v1h-36zM685 408h29v1h-29zM701 409h27v1h-27zM716 410h23v1h-23zM730 411h15v1h-15zM739 412h9v1h-9zM744 413h6v1h-6zM813 413h13v1h-13zM747 414h5v1h-5zM809 414h21v1h-21zM749 415h5v1h-5zM806 415h26v1h-26zM752 416h4v1h-4zM803 416h31v1h-31zM754 417h4v1h-4zM799 417h14v1h-14zM826 417h10v1h-10zM756 418h5v1h-5zM794 418h13v1h-13zM829 418h8v1h-8zM759 419h6v1h-6zM787 419h15v1h-15zM831 419h8v1h-8zM762 420h33v1h-33zM834 420h6v1h-6zM766 421h19v1h-19zM836 421h6v1h-6zM839 422h6v1h-6zM842 423h5v1h-5zM844 424h6v1h-6zM847 425h6v1h-6zM850 426h6v1h-6zM853 427h7v1h-7zM857 428h7v1h-7zM860 429h9v1h-9zM903 429h93v1h-93zM864 430h17v1h-17zM884 430h112v1h-112zM869 431h36v1h-36zM877 432h13v1h-13zM357 449h84v1h-84zM510 450h14v1h-14zM526 451h7v1h-7zM536 452h7v1h-7zM546 453h9v1h-9zM607 453h43v1h-43zM560 454h22v1h-22zM593 454h11v1h-11zM657 454h12v1h-12zM672 455h10v1h-10zM683 456h9v1h-9zM692 457h10v1h-10zM702 458h11v1h-11zM713 459h12v1h-12zM725 460h9v1h-9zM734 461h7v1h-7zM740 462h5v1h-5zM744 463h4v1h-4zM747 464h3v1h-3zM749 465h3v1h-3zM751 466h3v1h-3zM753 467h4v1h-4zM755 468h4v1h-4zM758 469h3v1h-3zM760 470h4v1h-4zM764 471h8v1h-8zM771 472h33v1h-33zM797 473h21v1h-21zM810 474h20v1h-20zM819 475h100v1h-100zM967 476h29v1h-29z"/><path fill="#00fcf8" d="M357 371h138v1h-138zM517 371h13v1h-13zM533 372h10v1h-10zM612 372h45v1h-45zM545 373h13v1h-13zM604 373h9v1h-9zM654 373h36v1h-36zM558 374h28v1h-28zM589 374h16v1h-16zM688 374h44v1h-44zM721 375h30v1h-30zM740 376h25v1h-25zM787 376h75v1h-75zM752 377h154v1h-154zM765 378h107v1h-107zM875 378h41v1h-41zM897 379h24v1h-24zM901 380h22v1h-22zM903 381h93v1h-93zM904 382h92v1h-92zM903 383h93v1h-93zM899 384h97v1h-97zM892 385h20v1h-20zM880 386h21v1h-21zM871 387h19v1h-19zM865 388h14v1h-14zM861 389h10v1h-10zM857 390h8v1h-8zM488 391h34v1h-34zM855 391h6v1h-6zM472 392h18v1h-18zM519 392h8v1h-8zM852 392h6v1h-6zM455 393h20v1h-20zM525 393h5v1h-5zM851 393h5v1h-5zM434 394h28v1h-28zM528 394h5v1h-5zM851 394h5v1h-5zM416 395h34v1h-34zM530 395h5v1h-5zM853 395h6v1h-6zM396 396h38v1h-38zM531 396h4v1h-4zM855 396h6v1h-6zM379 397h41v1h-41zM531 397h4v1h-4zM857 397h7v1h-7zM364 398h44v1h-44zM532 398h4v1h-4zM620 398h13v1h-13zM860 398h8v1h-8zM357 399h42v1h-42zM533 399h5v1h-5zM616 399h24v1h-24zM864 399h10v1h-10zM357 400h31v1h-31zM535 400h5v1h-5zM613 400h34v1h-34zM868 400h13v1h-13zM357 401h18v1h-18zM537 401h5v1h-5zM610 401h45v1h-45zM874 401h17v1h-17zM990 401h6v1h-6zM539 402h7v1h-7zM606 402h58v1h-58zM884 402h15v1h-15zM983 402h13v1h-13zM543 403h9v1h-9zM597 403h78v1h-78zM893 403h13v1h-13zM975 403h21v1h-21zM548 404h141v1h-141zM900 404h13v1h-13zM964 404h29v1h-29zM560 405h20v1h-20zM654 405h50v1h-50zM907 405h76v1h-76zM682 406h32v1h-32zM701 407h23v1h-23zM714 408h22v1h-22zM728 409h16v1h-16zM739 410h10v1h-10zM815 410h10v1h-10zM745 411h7v1h-7zM807 411h25v1h-25zM748 412h6v1h-6zM803 412h32v1h-32zM750 413h5v1h-5zM800 413h13v1h-13zM826 413h11v1h-11zM752 414h5v1h-5zM798 414h11v1h-11zM830 414h9v1h-9zM754 415h4v1h-4zM796 415h10v1h-10zM832 415h8v1h-8zM756 416h4v1h-4zM792 416h11v1h-11zM834 416h7v1h-7zM758 417h6v1h-6zM787 417h12v1h-12zM836 417h7v1h-7zM761 418h9v1h-9zM778 418h16v1h-16zM837 418h7v1h-7zM765 419h22v1h-22zM839 419h5v1h-5zM840 420h6v1h-6zM842 421h6v1h-6zM845 422h5v1h-5zM847 423h6v1h-6zM850 424h6v1h-6zM853 425h6v1h-6zM856 426h7v1h-7zM962 426h34v1h-34zM860 427h8v1h-8zM910 427h86v1h-86zM864 428h12v1h-12zM891 428h105v1h-105zM869 429h34v1h-34zM881 430h3v1h-3zM357 450h153v1h-153zM517 451h9v1h-9zM529 452h7v1h-7zM539 453h7v1h-7zM549 454h11v1h-11zM604 454h8v1h-8zM641 454h16v1h-16zM566 455h35v1h-35zM661 455h11v1h-11zM673 456h10v1h-10zM683 457h9v1h-9zM692 458h10v1h-10zM702 459h11v1h-11zM714 460h11v1h-11zM725 461h9v1h-9zM733 462h7v1h-7zM739 463h5v1h-5zM742 464h5v1h-5zM745 465h4v1h-4zM748 466h3v1h-3zM750 467h3v1h-3zM752 468h3v1h-3zM754 469h4v1h-4zM757 470h3v1h-3zM760 471h4v1h-4zM764 472h7v1h-7zM773 473h24v1h-24zM795 474h15v1h-15zM807 475h12v1h-12zM816 476h151v1h-151z"/><path fill="#00f6e8" d="M495 371h22v1h-22zM357 372h125v1h-125zM521 372h12v1h-12zM535 373h10v1h-10zM613 373h41v1h-41zM546 374h12v1h-12zM605 374h11v1h-11zM646 374h42v1h-42zM556 375h50v1h-50zM676 375h45v1h-45zM707 376h33v1h-33zM727 377h25v1h-25zM740 378h25v1h-25zM872 378h3v1h-3zM751 379h146v1h-146zM762 380h139v1h-139zM788 381h53v1h-53zM891 381h12v1h-12zM893 382h11v1h-11zM891 383h12v1h-12zM879 384h20v1h-20zM863 385h29v1h-29zM857 386h23v1h-23zM855 387h16v1h-16zM853 388h12v1h-12zM851 389h10v1h-10zM486 390h38v1h-38zM850 390h7v1h-7zM472 391h16v1h-16zM522 391h7v1h-7zM848 391h7v1h-7zM450 392h22v1h-22zM527 392h6v1h-6zM847 392h5v1h-5zM420 393h35v1h-35zM530 393h6v1h-6zM846 393h5v1h-5zM395 394h39v1h-39zM533 394h5v1h-5zM846 394h5v1h-5zM366 395h50v1h-50zM535 395h4v1h-4zM620 395h14v1h-14zM847 395h6v1h-6zM357 396h39v1h-39zM535 396h5v1h-5zM614 396h35v1h-35zM849 396h6v1h-6zM357 397h22v1h-22zM535 397h5v1h-5zM611 397h47v1h-47zM851 397h6v1h-6zM357 398h7v1h-7zM536 398h5v1h-5zM608 398h12v1h-12zM633 398h31v1h-31zM853 398h7v1h-7zM538 399h4v1h-4zM606 399h10v1h-10zM640 399h30v1h-30zM855 399h9v1h-9zM540 400h5v1h-5zM603 400h10v1h-10zM647 400h30v1h-30zM858 400h10v1h-10zM542 401h7v1h-7zM597 401h13v1h-13zM655 401h30v1h-30zM862 401h12v1h-12zM546 402h12v1h-12zM578 402h28v1h-28zM664 402h32v1h-32zM867 402h17v1h-17zM552 403h45v1h-45zM675 403h31v1h-31zM876 403h17v1h-17zM689 404h24v1h-24zM888 404h12v1h-12zM993 404h3v1h-3zM704 405h17v1h-17zM896 405h11v1h-11zM983 405h13v1h-13zM714 406h17v1h-17zM905 406h91v1h-91zM724 407h18v1h-18zM736 408h13v1h-13zM809 408h22v1h-22zM744 409h9v1h-9zM802 409h34v1h-34zM749 410h7v1h-7zM798 410h17v1h-17zM825 410h14v1h-14zM752 411h6v1h-6zM795 411h12v1h-12zM832 411h9v1h-9zM754 412h5v1h-5zM792 412h11v1h-11zM835 412h8v1h-8zM755 413h5v1h-5zM790 413h10v1h-10zM837 413h8v1h-8zM757 414h5v1h-5zM789 414h9v1h-9zM839 414h7v1h-7zM758 415h5v1h-5zM786 415h10v1h-10zM840 415h7v1h-7zM760 416h7v1h-7zM780 416h12v1h-12zM841 416h7v1h-7zM764 417h23v1h-23zM843 417h5v1h-5zM770 418h8v1h-8zM844 418h5v1h-5zM844 419h6v1h-6zM846 420h5v1h-5zM848 421h5v1h-5zM850 422h6v1h-6zM853 423h6v1h-6zM993 423h3v1h-3zM856 424h6v1h-6zM973 424h23v1h-23zM859 425h8v1h-8zM936 425h60v1h-60zM863 426h10v1h-10zM901 426h61v1h-61zM868 427h42v1h-42zM876 428h15v1h-15zM357 451h160v1h-160zM520 452h9v1h-9zM531 453h8v1h-8zM541 454h8v1h-8zM612 454h29v1h-29zM552 455h14v1h-14zM601 455h7v1h-7zM649 455h12v1h-12zM573 456h23v1h-23zM664 456h9v1h-9zM674 457h9v1h-9zM683 458h9v1h-9zM692 459h10v1h-10zM704 460h10v1h-10zM715 461h10v1h-10zM725 462h8v1h-8zM732 463h7v1h-7zM737 464h5v1h-5zM741 465h4v1h-4zM744 466h4v1h-4zM747 467h3v1h-3zM749 468h3v1h-3zM751 469h3v1h-3zM754 470h3v1h-3zM756 471h4v1h-4zM760 472h4v1h-4zM764 473h9v1h-9zM776 474h19v1h-19zM796 475h11v1h-11zM807 476h9v1h-9zM817 477h179v1h-179z"/><path fill="#00f0da" d="M482 372h39v1h-39zM357 373h93v1h-93zM524 373h11v1h-11zM536 374h10v1h-10zM616 374h30v1h-30zM544 375h12v1h-12zM606 375h70v1h-70zM553 376h56v1h-56zM662 376h45v1h-45zM694 377h33v1h-33zM718 378h22v1h-22zM730 379h21v1h-21zM739 380h23v1h-23zM747 381h41v1h-41zM841 381h50v1h-50zM757 382h136v1h-136zM777 383h114v1h-114zM801 384h78v1h-78zM820 385h43v1h-43zM831 386h26v1h-26zM837 387h18v1h-18zM840 388h13v1h-13zM484 389h42v1h-42zM841 389h10v1h-10zM470 390h16v1h-16zM524 390h8v1h-8zM842 390h8v1h-8zM450 391h22v1h-22zM529 391h7v1h-7zM841 391h7v1h-7zM409 392h41v1h-41zM533 392h5v1h-5zM841 392h6v1h-6zM371 393h49v1h-49zM536 393h5v1h-5zM617 393h23v1h-23zM840 393h6v1h-6zM357 394h38v1h-38zM538 394h5v1h-5zM613 394h41v1h-41zM840 394h6v1h-6zM357 395h9v1h-9zM539 395h5v1h-5zM610 395h10v1h-10zM634 395h31v1h-31zM841 395h6v1h-6zM540 396h4v1h-4zM608 396h6v1h-6zM649 396h25v1h-25zM842 396h7v1h-7zM540 397h4v1h-4zM605 397h6v1h-6zM658 397h23v1h-23zM844 397h7v1h-7zM541 398h4v1h-4zM602 398h6v1h-6zM664 398h24v1h-24zM845 398h8v1h-8zM542 399h6v1h-6zM597 399h9v1h-9zM670 399h24v1h-24zM847 399h8v1h-8zM545 400h8v1h-8zM589 400h14v1h-14zM677 400h24v1h-24zM849 400h9v1h-9zM549 401h48v1h-48zM685 401h23v1h-23zM850 401h12v1h-12zM558 402h20v1h-20zM696 402h17v1h-17zM851 402h16v1h-16zM706 403h13v1h-13zM852 403h24v1h-24zM713 404h13v1h-13zM852 404h36v1h-36zM721 405h17v1h-17zM821 405h21v1h-21zM878 405h18v1h-18zM731 406h18v1h-18zM802 406h45v1h-45zM893 406h12v1h-12zM742 407h13v1h-13zM795 407h52v1h-52zM906 407h90v1h-90zM749 408h10v1h-10zM790 408h19v1h-19zM831 408h16v1h-16zM957 408h39v1h-39zM753 409h9v1h-9zM787 409h15v1h-15zM836 409h11v1h-11zM987 409h9v1h-9zM756 410h8v1h-8zM784 410h14v1h-14zM839 410h9v1h-9zM758 411h7v1h-7zM781 411h14v1h-14zM841 411h8v1h-8zM759 412h8v1h-8zM779 412h13v1h-13zM843 412h7v1h-7zM760 413h9v1h-9zM776 413h14v1h-14zM845 413h6v1h-6zM762 414h27v1h-27zM846 414h6v1h-6zM763 415h23v1h-23zM847 415h6v1h-6zM767 416h13v1h-13zM848 416h5v1h-5zM848 417h6v1h-6zM849 418h6v1h-6zM850 419h5v1h-5zM851 420h5v1h-5zM853 421h6v1h-6zM989 421h7v1h-7zM856 422h6v1h-6zM978 422h18v1h-18zM859 423h7v1h-7zM958 423h35v1h-35zM862 424h9v1h-9zM921 424h52v1h-52zM867 425h69v1h-69zM873 426h28v1h-28zM357 452h50v1h-50zM486 452h34v1h-34zM523 453h8v1h-8zM534 454h7v1h-7zM544 455h8v1h-8zM608 455h10v1h-10zM631 455h18v1h-18zM555 456h18v1h-18zM596 456h8v1h-8zM654 456h10v1h-10zM666 457h8v1h-8zM675 458h8v1h-8zM684 459h8v1h-8zM694 460h10v1h-10zM705 461h10v1h-10zM716 462h9v1h-9zM725 463h7v1h-7zM731 464h6v1h-6zM736 465h5v1h-5zM740 466h4v1h-4zM743 467h4v1h-4zM746 468h3v1h-3zM748 469h3v1h-3zM751 470h3v1h-3zM753 471h3v1h-3zM756 472h4v1h-4zM760 473h4v1h-4zM766 474h10v1h-10zM782 475h14v1h-14zM798 476h9v1h-9zM809 477h8v1h-8zM819 478h177v1h-177z"/><path fill="#00eaca" d="M450 373h74v1h-74zM357 374h21v1h-21zM526 374h10v1h-10zM534 375h10v1h-10zM540 376h13v1h-13zM609 376h53v1h-53zM548 377h146v1h-146zM676 378h42v1h-42zM710 379h20v1h-20zM720 380h19v1h-19zM725 381h22v1h-22zM728 382h29v1h-29zM733 383h44v1h-44zM741 384h60v1h-60zM759 385h61v1h-61zM771 386h60v1h-60zM771 387h66v1h-66zM480 388h50v1h-50zM773 388h67v1h-67zM466 389h18v1h-18zM526 389h9v1h-9zM826 389h15v1h-15zM443 390h27v1h-27zM532 390h7v1h-7zM620 390h12v1h-12zM831 390h11v1h-11zM395 391h55v1h-55zM536 391h6v1h-6zM613 391h36v1h-36zM833 391h8v1h-8zM357 392h52v1h-52zM538 392h6v1h-6zM610 392h51v1h-51zM833 392h8v1h-8zM357 393h14v1h-14zM541 393h5v1h-5zM608 393h9v1h-9zM640 393h30v1h-30zM834 393h6v1h-6zM543 394h5v1h-5zM606 394h7v1h-7zM654 394h27v1h-27zM833 394h7v1h-7zM544 395h5v1h-5zM605 395h5v1h-5zM665 395h26v1h-26zM834 395h7v1h-7zM544 396h5v1h-5zM602 396h6v1h-6zM674 396h27v1h-27zM835 396h7v1h-7zM544 397h6v1h-6zM598 397h7v1h-7zM681 397h26v1h-26zM836 397h8v1h-8zM545 398h6v1h-6zM592 398h10v1h-10zM688 398h24v1h-24zM837 398h8v1h-8zM548 399h8v1h-8zM578 399h19v1h-19zM694 399h21v1h-21zM838 399h9v1h-9zM553 400h36v1h-36zM701 400h17v1h-17zM838 400h11v1h-11zM708 401h13v1h-13zM837 401h13v1h-13zM713 402h12v1h-12zM831 402h20v1h-20zM719 403h12v1h-12zM773 403h79v1h-79zM726 404h126v1h-126zM738 405h83v1h-83zM842 405h36v1h-36zM749 406h53v1h-53zM847 406h46v1h-46zM755 407h40v1h-40zM847 407h23v1h-23zM888 407h18v1h-18zM759 408h31v1h-31zM847 408h14v1h-14zM908 408h49v1h-49zM762 409h25v1h-25zM847 409h10v1h-10zM957 409h30v1h-30zM764 410h20v1h-20zM848 410h8v1h-8zM974 410h22v1h-22zM765 411h16v1h-16zM849 411h7v1h-7zM980 411h16v1h-16zM767 412h12v1h-12zM850 412h7v1h-7zM980 412h16v1h-16zM769 413h7v1h-7zM851 413h7v1h-7zM980 413h16v1h-16zM852 414h7v1h-7zM980 414h16v1h-16zM853 415h6v1h-6zM980 415h16v1h-16zM853 416h7v1h-7zM980 416h16v1h-16zM854 417h6v1h-6zM980 417h16v1h-16zM855 418h5v1h-5zM980 418h16v1h-16zM855 419h6v1h-6zM980 419h16v1h-16zM856 420h6v1h-6zM976 420h20v1h-20zM859 421h6v1h-6zM968 421h21v1h-21zM862 422h7v1h-7zM947 422h31v1h-31zM866 423h10v1h-10zM904 423h54v1h-54zM871 424h50v1h-50zM407 452h79v1h-79zM357 453h14v1h-14zM509 453h14v1h-14zM526 454h8v1h-8zM536 455h8v1h-8zM618 455h13v1h-13zM546 456h9v1h-9zM604 456h7v1h-7zM641 456h13v1h-13zM559 457h41v1h-41zM657 457h9v1h-9zM667 458h8v1h-8zM676 459h8v1h-8zM685 460h9v1h-9zM695 461h10v1h-10zM706 462h10v1h-10zM716 463h9v1h-9zM724 464h7v1h-7zM730 465h6v1h-6zM735 466h5v1h-5zM739 467h4v1h-4zM742 468h4v1h-4zM745 469h3v1h-3zM747 470h4v1h-4zM750 471h3v1h-3zM753 472h3v1h-3zM756 473h4v1h-4zM761 474h5v1h-5zM768 475h14v1h-14zM788 476h10v1h-10zM801 477h8v1h-8zM811 478h8v1h-8zM821 479h175v1h-175z"/><path fill="#00e4bc" d="M378 374h148v1h-148zM357 375h18v1h-18zM523 375h11v1h-11zM529 376h11v1h-11zM533 377h15v1h-15zM539 378h137v1h-137zM620 379h90v1h-90zM684 380h36v1h-36zM700 381h25v1h-25zM700 382h28v1h-28zM700 383h33v1h-33zM699 384h42v1h-42zM699 385h60v1h-60zM616 386h74v1h-74zM697 386h74v1h-74zM476 387h59v1h-59zM611 387h160v1h-160zM458 388h22v1h-22zM530 388h11v1h-11zM609 388h164v1h-164zM422 389h44v1h-44zM535 389h10v1h-10zM607 389h103v1h-103zM731 389h95v1h-95zM357 390h86v1h-86zM539 390h8v1h-8zM605 390h15v1h-15zM632 390h78v1h-78zM731 390h100v1h-100zM357 391h38v1h-38zM542 391h7v1h-7zM604 391h9v1h-9zM649 391h61v1h-61zM731 391h102v1h-102zM544 392h7v1h-7zM602 392h8v1h-8zM661 392h172v1h-172zM546 393h7v1h-7zM601 393h7v1h-7zM670 393h164v1h-164zM548 394h7v1h-7zM600 394h6v1h-6zM681 394h152v1h-152zM549 395h7v1h-7zM598 395h7v1h-7zM691 395h143v1h-143zM549 396h9v1h-9zM595 396h7v1h-7zM701 396h134v1h-134zM550 397h10v1h-10zM579 397h19v1h-19zM707 397h129v1h-129zM551 398h41v1h-41zM712 398h125v1h-125zM556 399h22v1h-22zM715 399h123v1h-123zM718 400h120v1h-120zM721 401h116v1h-116zM725 402h106v1h-106zM731 403h42v1h-42zM870 407h18v1h-18zM861 408h47v1h-47zM857 409h13v1h-13zM909 409h48v1h-48zM856 410h10v1h-10zM950 410h24v1h-24zM856 411h9v1h-9zM960 411h20v1h-20zM857 412h8v1h-8zM960 412h20v1h-20zM858 413h8v1h-8zM960 413h20v1h-20zM859 414h7v1h-7zM960 414h20v1h-20zM859 415h7v1h-7zM960 415h20v1h-20zM860 416h7v1h-7zM960 416h20v1h-20zM860 417h7v1h-7zM960 417h20v1h-20zM860 418h7v1h-7zM960 418h20v1h-20zM861 419h7v1h-7zM960 419h20v1h-20zM862 420h7v1h-7zM955 420h21v1h-21zM865 421h8v1h-8zM938 421h30v1h-30zM869 422h78v1h-78zM876 423h28v1h-28zM371 453h138v1h-138zM516 454h10v1h-10zM529 455h7v1h-7zM538 456h8v1h-8zM611 456h30v1h-30zM547 457h12v1h-12zM600 457h7v1h-7zM647 457h10v1h-10zM567 458h28v1h-28zM659 458h8v1h-8zM668 459h8v1h-8zM677 460h8v1h-8zM686 461h9v1h-9zM696 462h10v1h-10zM707 463h9v1h-9zM717 464h7v1h-7zM724 465h6v1h-6zM729 466h6v1h-6zM734 467h5v1h-5zM738 468h4v1h-4zM741 469h4v1h-4zM744 470h3v1h-3zM747 471h3v1h-3zM750 472h3v1h-3zM753 473h3v1h-3zM757 474h4v1h-4zM762 475h6v1h-6zM774 476h14v1h-14zM793 477h8v1h-8zM804 478h7v1h-7zM813 479h8v1h-8zM823 480h173v1h-173z"/><path fill="#00deac" d="M375 375h148v1h-148zM357 376h52v1h-52zM507 376h22v1h-22zM509 377h24v1h-24zM509 378h30v1h-30zM510 379h110v1h-110zM510 380h174v1h-174zM581 381h119v1h-119zM581 382h119v1h-119zM581 383h119v1h-119zM581 384h118v1h-118zM486 385h84v1h-84zM581 385h118v1h-118zM468 386h102v1h-102zM581 386h35v1h-35zM690 386h7v1h-7zM436 387h40v1h-40zM535 387h35v1h-35zM581 387h30v1h-30zM365 388h93v1h-93zM541 388h29v1h-29zM581 388h28v1h-28zM357 389h65v1h-65zM545 389h25v1h-25zM581 389h26v1h-26zM710 389h21v1h-21zM547 390h58v1h-58zM710 390h21v1h-21zM549 391h55v1h-55zM710 391h21v1h-21zM551 392h51v1h-51zM553 393h48v1h-48zM555 394h45v1h-45zM556 395h42v1h-42zM558 396h37v1h-37zM560 397h19v1h-19zM870 409h39v1h-39zM866 410h84v1h-84zM865 411h25v1h-25zM911 411h49v1h-49zM865 412h25v1h-25zM911 412h49v1h-49zM866 413h24v1h-24zM911 413h49v1h-49zM866 414h24v1h-24zM911 414h49v1h-49zM866 415h24v1h-24zM911 415h49v1h-49zM867 416h23v1h-23zM911 416h49v1h-49zM867 417h23v1h-23zM911 417h49v1h-49zM867 418h23v1h-23zM911 418h49v1h-49zM868 419h22v1h-22zM911 419h49v1h-49zM869 420h86v1h-86zM873 421h65v1h-65zM357 454h31v1h-31zM485 454h31v1h-31zM520 455h9v1h-9zM531 456h7v1h-7zM539 457h8v1h-8zM607 457h8v1h-8zM634 457h13v1h-13zM549 458h18v1h-18zM595 458h9v1h-9zM650 458h9v1h-9zM660 459h8v1h-8zM669 460h8v1h-8zM678 461h8v1h-8zM687 462h9v1h-9zM698 463h9v1h-9zM708 464h9v1h-9zM717 465h7v1h-7zM723 466h6v1h-6zM728 467h6v1h-6zM733 468h5v1h-5zM737 469h4v1h-4zM740 470h4v1h-4zM744 471h3v1h-3zM747 472h3v1h-3zM750 473h3v1h-3zM753 474h4v1h-4zM758 475h4v1h-4zM765 476h9v1h-9zM782 477h11v1h-11zM797 478h7v1h-7zM806 479h7v1h-7zM814 480h9v1h-9zM825 481h171v1h-171z"/><path fill="#00d89e" d="M409 376h98v1h-98zM357 377h152v1h-152zM374 378h135v1h-135zM402 379h108v1h-108zM416 380h94v1h-94zM425 381h156v1h-156zM432 382h149v1h-149zM438 383h143v1h-143zM444 384h137v1h-137zM433 385h53v1h-53zM570 385h11v1h-11zM397 386h71v1h-71zM570 386h11v1h-11zM357 387h79v1h-79zM570 387h11v1h-11zM357 388h8v1h-8zM570 388h11v1h-11zM570 389h11v1h-11zM890 411h21v1h-21zM890 412h21v1h-21zM890 413h21v1h-21zM890 414h21v1h-21zM890 415h21v1h-21zM890 416h21v1h-21zM890 417h21v1h-21zM890 418h21v1h-21zM890 419h21v1h-21zM388 454h97v1h-97zM500 455h20v1h-20zM522 456h9v1h-9zM532 457h7v1h-7zM615 457h19v1h-19zM540 458h9v1h-9zM604 458h7v1h-7zM639 458h11v1h-11zM551 459h49v1h-49zM651 459h9v1h-9zM660 460h9v1h-9zM669 461h9v1h-9zM678 462h9v1h-9zM688 463h10v1h-10zM699 464h9v1h-9zM709 465h8v1h-8zM717 466h6v1h-6zM723 467h5v1h-5zM728 468h5v1h-5zM732 469h5v1h-5zM736 470h4v1h-4zM740 471h4v1h-4zM743 472h4v1h-4zM746 473h4v1h-4zM750 474h3v1h-3zM754 475h4v1h-4zM759 476h6v1h-6zM770 477h12v1h-12zM788 478h9v1h-9zM800 479h6v1h-6zM808 480h6v1h-6zM815 481h10v1h-10zM828 482h11v1h-11zM861 482h135v1h-135z"/><path fill="#00d28e" d="M357 378h17v1h-17zM357 379h45v1h-45zM368 380h48v1h-48zM377 381h48v1h-48zM386 382h46v1h-46zM388 383h50v1h-50zM381 384h63v1h-63zM357 385h76v1h-76zM357 386h40v1h-40zM357 455h143v1h-143zM508 456h14v1h-14zM524 457h8v1h-8zM533 458h7v1h-7zM611 458h28v1h-28zM541 459h10v1h-10zM600 459h9v1h-9zM640 459h11v1h-11zM554 460h39v1h-39zM651 460h9v1h-9zM660 461h9v1h-9zM670 462h8v1h-8zM679 463h9v1h-9zM690 464h9v1h-9zM700 465h9v1h-9zM709 466h8v1h-8zM716 467h7v1h-7zM722 468h6v1h-6zM727 469h5v1h-5zM731 470h5v1h-5zM735 471h5v1h-5zM739 472h4v1h-4zM743 473h3v1h-3zM746 474h4v1h-4zM750 475h4v1h-4zM755 476h4v1h-4zM762 477h8v1h-8zM776 478h12v1h-12zM792 479h8v1h-8zM801 480h7v1h-7zM808 481h7v1h-7zM816 482h12v1h-12zM839 482h22v1h-22zM874 483h94v1h-94z"/><path fill="#00cc80" d="M357 380h11v1h-11zM357 381h20v1h-20zM357 382h29v1h-29zM357 383h31v1h-31zM357 384h24v1h-24zM470 456h38v1h-38zM512 457h12v1h-12zM525 458h8v1h-8zM534 459h7v1h-7zM609 459h31v1h-31zM543 460h11v1h-11zM593 460h15v1h-15zM639 460h12v1h-12zM650 461h10v1h-10zM660 462h10v1h-10zM670 463h9v1h-9zM680 464h10v1h-10zM690 465h10v1h-10zM700 466h9v1h-9zM709 467h7v1h-7zM716 468h6v1h-6zM722 469h5v1h-5zM727 470h4v1h-4zM731 471h4v1h-4zM735 472h4v1h-4zM739 473h4v1h-4zM742 474h4v1h-4zM746 475h4v1h-4zM751 476h4v1h-4zM757 477h5v1h-5zM766 478h10v1h-10zM783 479h9v1h-9zM794 480h7v1h-7zM802 481h6v1h-6zM808 482h8v1h-8zM816 483h58v1h-58zM968 483h28v1h-28z"/><path fill="#00c670" d="M357 456h113v1h-113zM479 457h33v1h-33zM515 458h10v1h-10zM526 459h8v1h-8zM535 460h8v1h-8zM608 460h31v1h-31zM545 461h59v1h-59zM637 461h13v1h-13zM650 462h10v1h-10zM660 463h10v1h-10zM671 464h9v1h-9zM680 465h10v1h-10zM690 466h10v1h-10zM700 467h9v1h-9zM709 468h7v1h-7zM716 469h6v1h-6zM722 470h5v1h-5zM726 471h5v1h-5zM730 472h5v1h-5zM734 473h5v1h-5zM738 474h4v1h-4zM742 475h4v1h-4zM746 476h5v1h-5zM752 477h5v1h-5zM758 478h8v1h-8zM771 479h12v1h-12zM785 480h9v1h-9zM795 481h7v1h-7zM802 482h6v1h-6zM809 483h7v1h-7zM817 484h179v1h-179z"/><path fill="#00c062" d="M357 457h122v1h-122zM486 458h29v1h-29zM516 459h10v1h-10zM528 460h7v1h-7zM537 461h8v1h-8zM604 461h33v1h-33zM548 462h51v1h-51zM635 462h15v1h-15zM649 463h11v1h-11zM661 464h10v1h-10zM670 465h10v1h-10zM679 466h11v1h-11zM689 467h11v1h-11zM700 468h9v1h-9zM709 469h7v1h-7zM716 470h6v1h-6zM722 471h4v1h-4zM726 472h4v1h-4zM730 473h4v1h-4zM733 474h5v1h-5zM737 475h5v1h-5zM742 476h4v1h-4zM747 477h5v1h-5zM752 478h6v1h-6zM760 479h11v1h-11zM773 480h12v1h-12zM786 481h9v1h-9zM794 482h8v1h-8zM801 483h8v1h-8zM809 484h8v1h-8zM818 485h178v1h-178z"/><path fill="#00ba52" d="M421 458h65v1h-65zM493 459h23v1h-23zM518 460h10v1h-10zM529 461h8v1h-8zM539 462h9v1h-9zM599 462h36v1h-36zM549 463h42v1h-42zM633 463h16v1h-16zM649 464h12v1h-12zM658 465h12v1h-12zM667 466h12v1h-12zM677 467h12v1h-12zM688 468h12v1h-12zM700 469h9v1h-9zM710 470h6v1h-6zM716 471h6v1h-6zM721 472h5v1h-5zM725 473h5v1h-5zM728 474h5v1h-5zM732 475h5v1h-5zM736 476h6v1h-6zM741 477h6v1h-6zM746 478h6v1h-6zM752 479h8v1h-8zM761 480h12v1h-12zM773 481h13v1h-13zM784 482h10v1h-10zM793 483h8v1h-8zM801 484h8v1h-8zM808 485h10v1h-10zM819 486h21v1h-21zM856 486h140v1h-140z"/><path fill="#00b444" d="M357 458h64v1h-64zM436 459h57v1h-57zM496 460h22v1h-22zM521 461h8v1h-8zM532 462h7v1h-7zM540 463h9v1h-9zM591 463h42v1h-42zM551 464h40v1h-40zM629 464h20v1h-20zM644 465h14v1h-14zM653 466h14v1h-14zM662 467h15v1h-15zM674 468h14v1h-14zM687 469h13v1h-13zM700 470h10v1h-10zM710 471h6v1h-6zM716 472h5v1h-5zM720 473h5v1h-5zM724 474h4v1h-4zM727 475h5v1h-5zM731 476h5v1h-5zM735 477h6v1h-6zM740 478h6v1h-6zM745 479h7v1h-7zM751 480h10v1h-10zM759 481h14v1h-14zM769 482h15v1h-15zM781 483h12v1h-12zM792 484h9v1h-9zM799 485h9v1h-9zM807 486h12v1h-12zM840 486h16v1h-16zM819 487h16v1h-16zM860 487h129v1h-129z"/><path fill="#00ae34" d="M357 459h79v1h-79zM429 460h67v1h-67zM496 461h25v1h-25zM523 462h9v1h-9zM532 463h8v1h-8zM540 464h11v1h-11zM591 464h38v1h-38zM554 465h90v1h-90zM635 466h18v1h-18zM644 467h18v1h-18zM657 468h17v1h-17zM670 469h17v1h-17zM685 470h15v1h-15zM701 471h9v1h-9zM710 472h6v1h-6zM715 473h5v1h-5zM718 474h6v1h-6zM722 475h5v1h-5zM726 476h5v1h-5zM730 477h5v1h-5zM734 478h6v1h-6zM738 479h7v1h-7zM742 480h9v1h-9zM748 481h11v1h-11zM755 482h14v1h-14zM765 483h16v1h-16zM778 484h14v1h-14zM788 485h11v1h-11zM796 486h11v1h-11zM803 487h16v1h-16zM835 487h25v1h-25zM989 487h7v1h-7zM820 488h13v1h-13zM861 488h119v1h-119z"/><path fill="#00a826" d="M357 460h72v1h-72zM390 461h106v1h-106zM451 462h72v1h-72zM523 463h9v1h-9zM531 464h9v1h-9zM539 465h15v1h-15zM551 466h84v1h-84zM614 467h30v1h-30zM632 468h25v1h-25zM648 469h22v1h-22zM664 470h21v1h-21zM684 471h17v1h-17zM700 472h10v1h-10zM708 473h7v1h-7zM712 474h6v1h-6zM717 475h5v1h-5zM720 476h6v1h-6zM724 477h6v1h-6zM728 478h6v1h-6zM731 479h7v1h-7zM735 480h7v1h-7zM739 481h9v1h-9zM744 482h11v1h-11zM750 483h15v1h-15zM760 484h18v1h-18zM771 485h17v1h-17zM781 486h15v1h-15zM788 487h15v1h-15zM797 488h23v1h-23zM833 488h28v1h-28zM980 488h16v1h-16zM813 489h23v1h-23zM857 489h116v1h-116z"/><path fill="#00a216" d="M357 461h33v1h-33zM357 462h94v1h-94zM387 463h136v1h-136zM520 464h11v1h-11zM528 465h11v1h-11zM536 466h15v1h-15zM545 467h69v1h-69zM553 468h79v1h-79zM590 469h58v1h-58zM632 470h32v1h-32zM654 471h30v1h-30zM676 472h24v1h-24zM698 473h10v1h-10zM705 474h7v1h-7zM710 475h7v1h-7zM714 476h6v1h-6zM719 477h5v1h-5zM722 478h6v1h-6zM726 479h5v1h-5zM729 480h6v1h-6zM732 481h7v1h-7zM735 482h9v1h-9zM740 483h10v1h-10zM746 484h14v1h-14zM753 485h18v1h-18zM762 486h19v1h-19zM769 487h19v1h-19zM775 488h22v1h-22zM783 489h30v1h-30zM836 489h21v1h-21zM973 489h23v1h-23zM796 490h172v1h-172zM813 491h25v1h-25zM890 491h11v1h-11z"/><path fill="#009c08" d="M357 463h30v1h-30zM357 464h163v1h-163zM385 465h143v1h-143zM426 466h43v1h-43zM520 466h16v1h-16zM529 467h16v1h-16zM536 468h17v1h-17zM542 469h48v1h-48zM550 470h82v1h-82zM572 471h82v1h-82zM641 472h35v1h-35zM658 473h40v1h-40zM694 474h11v1h-11zM702 475h8v1h-8zM707 476h7v1h-7zM712 477h7v1h-7zM716 478h6v1h-6zM720 479h6v1h-6zM723 480h6v1h-6zM726 481h6v1h-6zM729 482h6v1h-6zM732 483h8v1h-8zM736 484h10v1h-10zM741 485h12v1h-12zM747 486h15v1h-15zM753 487h16v1h-16zM759 488h16v1h-16zM765 489h18v1h-18zM771 490h25v1h-25zM968 490h28v1h-28zM780 491h33v1h-33zM838 491h52v1h-52zM901 491h63v1h-63zM793 492h134v1h-134zM809 493h33v1h-33z"/><path fill="#079c00" d="M357 465h28v1h-28zM357 466h69v1h-69zM469 466h51v1h-51zM379 467h150v1h-150zM397 468h96v1h-96zM517 468h19v1h-19zM415 469h57v1h-57zM527 469h15v1h-15zM534 470h16v1h-16zM543 471h29v1h-29zM559 472h82v1h-82zM630 473h28v1h-28zM648 474h46v1h-46zM657 475h24v1h-24zM689 475h13v1h-13zM664 476h8v1h-8zM699 476h8v1h-8zM705 477h7v1h-7zM710 478h6v1h-6zM714 479h6v1h-6zM718 480h5v1h-5zM721 481h5v1h-5zM724 482h5v1h-5zM727 483h5v1h-5zM730 484h6v1h-6zM733 485h8v1h-8zM737 486h10v1h-10zM741 487h12v1h-12zM746 488h13v1h-13zM751 489h14v1h-14zM757 490h14v1h-14zM763 491h17v1h-17zM964 491h25v1h-25zM771 492h22v1h-22zM927 492h36v1h-36zM782 493h27v1h-27zM842 493h95v1h-95zM798 494h57v1h-57zM814 495h22v1h-22z"/><path fill="#15a200" d="M357 467h22v1h-22zM357 468h40v1h-40zM493 468h24v1h-24zM372 469h43v1h-43zM472 469h55v1h-55zM391 470h143v1h-143zM436 471h35v1h-35zM525 471h18v1h-18zM536 472h23v1h-23zM553 473h77v1h-77zM624 474h24v1h-24zM641 475h16v1h-16zM681 475h8v1h-8zM648 476h16v1h-16zM672 476h27v1h-27zM653 477h25v1h-25zM697 477h8v1h-8zM658 478h16v1h-16zM703 478h7v1h-7zM662 479h8v1h-8zM708 479h6v1h-6zM712 480h6v1h-6zM715 481h6v1h-6zM718 482h6v1h-6zM721 483h6v1h-6zM724 484h6v1h-6zM727 485h6v1h-6zM730 486h7v1h-7zM734 487h7v1h-7zM737 488h9v1h-9zM741 489h10v1h-10zM746 490h11v1h-11zM751 491h12v1h-12zM989 491h7v1h-7zM757 492h14v1h-14zM963 492h22v1h-22zM764 493h18v1h-18zM937 493h26v1h-26zM776 494h22v1h-22zM855 494h90v1h-90zM790 495h24v1h-24zM836 495h86v1h-86zM805 496h34v1h-34z"/><path fill="#23a700" d="M357 469h15v1h-15zM357 470h34v1h-34zM380 471h56v1h-56zM471 471h54v1h-54zM433 472h103v1h-103zM527 473h26v1h-26zM544 474h80v1h-80zM617 475h24v1h-24zM635 476h13v1h-13zM641 477h12v1h-12zM678 477h19v1h-19zM646 478h12v1h-12zM674 478h7v1h-7zM695 478h8v1h-8zM649 479h13v1h-13zM670 479h7v1h-7zM701 479h7v1h-7zM653 480h21v1h-21zM706 480h6v1h-6zM659 481h12v1h-12zM709 481h6v1h-6zM712 482h6v1h-6zM716 483h5v1h-5zM719 484h5v1h-5zM722 485h5v1h-5zM725 486h5v1h-5zM728 487h6v1h-6zM731 488h6v1h-6zM734 489h7v1h-7zM738 490h8v1h-8zM741 491h10v1h-10zM746 492h11v1h-11zM985 492h11v1h-11zM751 493h13v1h-13zM963 493h19v1h-19zM758 494h18v1h-18zM945 494h20v1h-20zM769 495h21v1h-21zM922 495h28v1h-28zM783 496h22v1h-22zM839 496h95v1h-95zM798 497h44v1h-44zM814 498h20v1h-20z"/><path fill="#32ad00" d="M357 471h23v1h-23zM378 472h55v1h-55zM432 473h95v1h-95zM468 474h76v1h-76zM528 475h89v1h-89zM609 476h26v1h-26zM628 477h13v1h-13zM635 478h11v1h-11zM681 478h14v1h-14zM639 479h10v1h-10zM677 479h6v1h-6zM694 479h7v1h-7zM643 480h10v1h-10zM674 480h5v1h-5zM700 480h6v1h-6zM647 481h12v1h-12zM671 481h5v1h-5zM704 481h5v1h-5zM653 482h21v1h-21zM707 482h5v1h-5zM662 483h7v1h-7zM710 483h6v1h-6zM713 484h6v1h-6zM716 485h6v1h-6zM720 486h5v1h-5zM723 487h5v1h-5zM726 488h5v1h-5zM729 489h5v1h-5zM732 490h6v1h-6zM735 491h6v1h-6zM738 492h8v1h-8zM741 493h10v1h-10zM982 493h14v1h-14zM746 494h12v1h-12zM965 494h15v1h-15zM754 495h15v1h-15zM950 495h16v1h-16zM764 496h19v1h-19zM934 496h19v1h-19zM777 497h21v1h-21zM842 497h99v1h-99zM791 498h23v1h-23zM834 498h11v1h-11zM860 498h65v1h-65zM806 499h30v1h-30z"/><path fill="#40b200" d="M357 472h21v1h-21zM383 473h49v1h-49zM432 474h36v1h-36zM457 475h71v1h-71zM470 476h139v1h-139zM524 477h104v1h-104zM620 478h15v1h-15zM628 479h11v1h-11zM683 479h11v1h-11zM633 480h10v1h-10zM679 480h6v1h-6zM692 480h8v1h-8zM638 481h9v1h-9zM676 481h4v1h-4zM698 481h6v1h-6zM642 482h11v1h-11zM674 482h4v1h-4zM701 482h6v1h-6zM648 483h14v1h-14zM669 483h6v1h-6zM704 483h6v1h-6zM656 484h16v1h-16zM707 484h6v1h-6zM711 485h5v1h-5zM714 486h6v1h-6zM718 487h5v1h-5zM722 488h4v1h-4zM725 489h4v1h-4zM727 490h5v1h-5zM730 491h5v1h-5zM733 492h5v1h-5zM735 493h6v1h-6zM738 494h8v1h-8zM980 494h16v1h-16zM743 495h11v1h-11zM966 495h13v1h-13zM750 496h14v1h-14zM953 496h14v1h-14zM761 497h16v1h-16zM941 497h15v1h-15zM773 498h18v1h-18zM845 498h15v1h-15zM925 498h20v1h-20zM785 499h21v1h-21zM836 499h97v1h-97zM799 500h39v1h-39zM820 501h9v1h-9z"/><path fill="#4eb800" d="M357 473h26v1h-26zM393 474h39v1h-39zM431 475h26v1h-26zM451 476h19v1h-19zM461 477h63v1h-63zM468 478h152v1h-152zM476 479h77v1h-77zM608 479h20v1h-20zM620 480h13v1h-13zM685 480h7v1h-7zM627 481h11v1h-11zM680 481h18v1h-18zM632 482h10v1h-10zM678 482h4v1h-4zM695 482h6v1h-6zM637 483h11v1h-11zM675 483h5v1h-5zM699 483h5v1h-5zM643 484h13v1h-13zM672 484h5v1h-5zM702 484h5v1h-5zM651 485h23v1h-23zM705 485h6v1h-6zM709 486h5v1h-5zM713 487h5v1h-5zM717 488h5v1h-5zM720 489h5v1h-5zM723 490h4v1h-4zM726 491h4v1h-4zM728 492h5v1h-5zM731 493h4v1h-4zM733 494h5v1h-5zM736 495h7v1h-7zM979 495h12v1h-12zM741 496h9v1h-9zM967 496h11v1h-11zM749 497h12v1h-12zM956 497h11v1h-11zM759 498h14v1h-14zM945 498h12v1h-12zM769 499h16v1h-16zM933 499h15v1h-15zM780 500h19v1h-19zM838 500h98v1h-98zM794 501h26v1h-26zM829 501h9v1h-9zM813 502h18v1h-18z"/><path fill="#5cbe00" d="M357 474h36v1h-36zM400 475h31v1h-31zM429 476h22v1h-22zM446 477h15v1h-15zM454 478h14v1h-14zM460 479h16v1h-16zM553 479h55v1h-55zM466 480h154v1h-154zM474 481h72v1h-72zM612 481h15v1h-15zM620 482h12v1h-12zM682 482h13v1h-13zM626 483h11v1h-11zM680 483h5v1h-5zM691 483h8v1h-8zM631 484h12v1h-12zM677 484h4v1h-4zM696 484h6v1h-6zM637 485h14v1h-14zM674 485h5v1h-5zM699 485h6v1h-6zM645 486h30v1h-30zM703 486h6v1h-6zM658 487h12v1h-12zM707 487h6v1h-6zM711 488h6v1h-6zM715 489h5v1h-5zM718 490h5v1h-5zM721 491h5v1h-5zM724 492h4v1h-4zM727 493h4v1h-4zM729 494h4v1h-4zM732 495h4v1h-4zM991 495h5v1h-5zM735 496h6v1h-6zM978 496h11v1h-11zM740 497h9v1h-9zM967 497h11v1h-11zM747 498h12v1h-12zM957 498h11v1h-11zM757 499h12v1h-12zM948 499h11v1h-11zM767 500h13v1h-13zM936 500h13v1h-13zM777 501h17v1h-17zM838 501h98v1h-98zM788 502h25v1h-25zM831 502h8v1h-8zM807 503h26v1h-26z"/><path fill="#6ac400" d="M357 475h43v1h-43zM401 476h28v1h-28zM425 477h21v1h-21zM440 478h14v1h-14zM449 479h11v1h-11zM455 480h11v1h-11zM461 481h13v1h-13zM546 481h66v1h-66zM467 482h153v1h-153zM477 483h65v1h-65zM610 483h16v1h-16zM685 483h6v1h-6zM617 484h14v1h-14zM681 484h15v1h-15zM623 485h14v1h-14zM679 485h5v1h-5zM692 485h7v1h-7zM629 486h16v1h-16zM675 486h6v1h-6zM696 486h7v1h-7zM637 487h21v1h-21zM670 487h7v1h-7zM700 487h7v1h-7zM649 488h24v1h-24zM705 488h6v1h-6zM709 489h6v1h-6zM713 490h5v1h-5zM717 491h4v1h-4zM720 492h4v1h-4zM723 493h4v1h-4zM726 494h3v1h-3zM728 495h4v1h-4zM731 496h4v1h-4zM989 496h7v1h-7zM734 497h6v1h-6zM978 497h9v1h-9zM739 498h8v1h-8zM968 498h9v1h-9zM746 499h11v1h-11zM959 499h9v1h-9zM755 500h12v1h-12zM949 500h10v1h-10zM765 501h12v1h-12zM936 501h12v1h-12zM773 502h15v1h-15zM839 502h94v1h-94zM783 503h24v1h-24zM833 503h6v1h-6zM799 504h35v1h-35z"/><path fill="#78c900" d="M362 476h39v1h-39zM398 477h27v1h-27zM418 478h22v1h-22zM433 479h16v1h-16zM443 480h12v1h-12zM450 481h11v1h-11zM456 482h11v1h-11zM462 483h15v1h-15zM542 483h68v1h-68zM469 484h148v1h-148zM478 485h71v1h-71zM604 485h19v1h-19zM684 485h8v1h-8zM612 486h17v1h-17zM681 486h15v1h-15zM619 487h18v1h-18zM677 487h7v1h-7zM692 487h8v1h-8zM626 488h23v1h-23zM673 488h7v1h-7zM698 488h7v1h-7zM637 489h38v1h-38zM702 489h7v1h-7zM657 490h12v1h-12zM707 490h6v1h-6zM711 491h6v1h-6zM715 492h5v1h-5zM719 493h4v1h-4zM722 494h4v1h-4zM725 495h3v1h-3zM727 496h4v1h-4zM730 497h4v1h-4zM987 497h9v1h-9zM734 498h5v1h-5zM977 498h8v1h-8zM738 499h8v1h-8zM968 499h8v1h-8zM745 500h10v1h-10zM959 500h8v1h-8zM754 501h11v1h-11zM948 501h10v1h-10zM763 502h10v1h-10zM933 502h13v1h-13zM771 503h12v1h-12zM839 503h92v1h-92zM779 504h20v1h-20zM834 504h6v1h-6zM791 505h43v1h-43z"/><path fill="#87cf00" d="M357 476h5v1h-5zM363 477h35v1h-35zM391 478h27v1h-27zM409 479h24v1h-24zM424 480h19v1h-19zM436 481h14v1h-14zM445 482h11v1h-11zM452 483h10v1h-10zM457 484h12v1h-12zM462 485h16v1h-16zM549 485h55v1h-55zM467 486h145v1h-145zM471 487h148v1h-148zM684 487h8v1h-8zM478 488h71v1h-71zM607 488h19v1h-19zM680 488h18v1h-18zM488 489h46v1h-46zM614 489h23v1h-23zM675 489h8v1h-8zM693 489h9v1h-9zM498 490h24v1h-24zM621 490h36v1h-36zM669 490h9v1h-9zM699 490h8v1h-8zM631 491h44v1h-44zM704 491h7v1h-7zM647 492h23v1h-23zM709 492h6v1h-6zM714 493h5v1h-5zM718 494h4v1h-4zM721 495h4v1h-4zM723 496h4v1h-4zM726 497h4v1h-4zM729 498h5v1h-5zM985 498h10v1h-10zM733 499h5v1h-5zM976 499h8v1h-8zM737 500h8v1h-8zM967 500h8v1h-8zM744 501h10v1h-10zM958 501h8v1h-8zM753 502h10v1h-10zM946 502h10v1h-10zM761 503h10v1h-10zM931 503h14v1h-14zM769 504h10v1h-10zM840 504h89v1h-89zM776 505h15v1h-15zM834 505h6v1h-6zM784 506h51v1h-51zM813 507h15v1h-15z"/><path fill="#95d400" d="M357 477h6v1h-6zM357 478h34v1h-34zM383 479h26v1h-26zM399 480h25v1h-25zM413 481h23v1h-23zM426 482h19v1h-19zM438 483h14v1h-14zM447 484h10v1h-10zM452 485h10v1h-10zM455 486h12v1h-12zM458 487h13v1h-13zM460 488h18v1h-18zM549 488h58v1h-58zM464 489h24v1h-24zM534 489h80v1h-80zM683 489h10v1h-10zM469 490h29v1h-29zM522 490h47v1h-47zM588 490h33v1h-33zM678 490h21v1h-21zM475 491h75v1h-75zM607 491h24v1h-24zM675 491h7v1h-7zM695 491h9v1h-9zM483 492h58v1h-58zM612 492h35v1h-35zM670 492h9v1h-9zM700 492h9v1h-9zM490 493h44v1h-44zM618 493h59v1h-59zM706 493h8v1h-8zM495 494h33v1h-33zM628 494h46v1h-46zM712 494h6v1h-6zM499 495h23v1h-23zM716 495h5v1h-5zM503 496h14v1h-14zM719 496h4v1h-4zM722 497h4v1h-4zM725 498h4v1h-4zM995 498h1v1h-1zM728 499h5v1h-5zM984 499h7v1h-7zM731 500h6v1h-6zM975 500h7v1h-7zM736 501h8v1h-8zM966 501h8v1h-8zM743 502h10v1h-10zM956 502h9v1h-9zM752 503h9v1h-9zM945 503h10v1h-10zM760 504h9v1h-9zM929 504h14v1h-14zM767 505h9v1h-9zM840 505h86v1h-86zM772 506h12v1h-12zM835 506h6v1h-6zM779 507h34v1h-34zM828 507h9v1h-9zM789 508h43v1h-43zM524 539h10v1h-10zM515 540h24v1h-24zM501 541h42v1h-42zM501 542h45v1h-45zM501 543h48v1h-48zM501 544h51v1h-51zM501 545h54v1h-54zM501 546h57v1h-57zM501 547h60v1h-60zM501 548h63v1h-63zM501 549h66v1h-66zM391 550h19v1h-19zM501 550h67v1h-67zM384 551h32v1h-32zM501 551h67v1h-67zM379 552h41v1h-41zM501 552h65v1h-65zM375 553h48v1h-48zM501 553h63v1h-63zM372 554h53v1h-53zM501 554h61v1h-61zM369 555h58v1h-58zM501 555h58v1h-58zM366 556h63v1h-63zM501 556h55v1h-55zM363 557h67v1h-67zM501 557h51v1h-51zM361 558h70v1h-70zM501 558h46v1h-46zM357 559h75v1h-75zM501 559h39v1h-39zM357 560h75v1h-75zM357 561h75v1h-75zM360 562h73v1h-73zM364 563h69v1h-69zM368 564h67v1h-67zM374 565h58v1h-58zM385 566h35v1h-35z"/><path fill="#a3da00" d="M357 479h26v1h-26zM374 480h25v1h-25zM389 481h24v1h-24zM401 482h25v1h-25zM414 483h24v1h-24zM428 484h19v1h-19zM437 485h15v1h-15zM442 486h13v1h-13zM445 487h13v1h-13zM447 488h13v1h-13zM449 489h15v1h-15zM452 490h17v1h-17zM569 490h19v1h-19zM455 491h20v1h-20zM550 491h57v1h-57zM682 491h13v1h-13zM459 492h24v1h-24zM541 492h71v1h-71zM679 492h21v1h-21zM465 493h25v1h-25zM534 493h23v1h-23zM594 493h24v1h-24zM677 493h10v1h-10zM690 493h16v1h-16zM472 494h23v1h-23zM528 494h21v1h-21zM603 494h25v1h-25zM674 494h9v1h-9zM698 494h14v1h-14zM478 495h21v1h-21zM522 495h21v1h-21zM609 495h72v1h-72zM707 495h9v1h-9zM481 496h22v1h-22zM517 496h21v1h-21zM614 496h64v1h-64zM713 496h6v1h-6zM482 497h52v1h-52zM620 497h53v1h-53zM717 497h5v1h-5zM483 498h47v1h-47zM720 498h5v1h-5zM484 499h42v1h-42zM723 499h5v1h-5zM991 499h5v1h-5zM486 500h37v1h-37zM726 500h5v1h-5zM982 500h7v1h-7zM488 501h32v1h-32zM730 501h6v1h-6zM974 501h7v1h-7zM490 502h28v1h-28zM735 502h8v1h-8zM965 502h7v1h-7zM493 503h23v1h-23zM743 503h9v1h-9zM955 503h8v1h-8zM498 504h15v1h-15zM751 504h9v1h-9zM943 504h11v1h-11zM758 505h9v1h-9zM926 505h16v1h-16zM764 506h8v1h-8zM841 506h82v1h-82zM769 507h10v1h-10zM837 507h6v1h-6zM775 508h14v1h-14zM832 508h7v1h-7zM783 509h52v1h-52zM804 510h26v1h-26zM473 518h12v1h-12zM469 519h19v1h-19zM467 520h24v1h-24zM465 521h28v1h-28zM463 522h32v1h-32zM461 523h36v1h-36zM460 524h39v1h-39zM458 525h44v1h-44zM457 526h47v1h-47zM523 526h11v1h-11zM456 527h54v1h-54zM515 527h23v1h-23zM454 528h87v1h-87zM453 529h90v1h-90zM452 530h93v1h-93zM451 531h97v1h-97zM450 532h100v1h-100zM448 533h104v1h-104zM447 534h107v1h-107zM445 535h112v1h-112zM442 536h117v1h-117zM438 537h124v1h-124zM431 538h134v1h-134zM418 539h106v1h-106zM534 539h34v1h-34zM401 540h114v1h-114zM539 540h32v1h-32zM389 541h112v1h-112zM543 541h30v1h-30zM381 542h120v1h-120zM546 542h30v1h-30zM375 543h126v1h-126zM549 543h30v1h-30zM371 544h130v1h-130zM552 544h29v1h-29zM367 545h134v1h-134zM555 545h28v1h-28zM364 546h137v1h-137zM558 546h26v1h-26zM362 547h139v1h-139zM561 547h25v1h-25zM359 548h142v1h-142zM564 548h23v1h-23zM357 549h144v1h-144zM567 549h22v1h-22zM357 550h34v1h-34zM410 550h91v1h-91zM568 550h22v1h-22zM357 551h27v1h-27zM416 551h85v1h-85zM568 551h22v1h-22zM357 552h22v1h-22zM420 552h81v1h-81zM566 552h23v1h-23zM357 553h18v1h-18zM423 553h78v1h-78zM564 553h25v1h-25zM357 554h15v1h-15zM425 554h76v1h-76zM562 554h26v1h-26zM357 555h12v1h-12zM427 555h74v1h-74zM559 555h29v1h-29zM357 556h9v1h-9zM429 556h72v1h-72zM556 556h31v1h-31zM357 557h6v1h-6zM430 557h71v1h-71zM552 557h34v1h-34zM357 558h4v1h-4zM431 558h70v1h-70zM547 558h38v1h-38zM432 559h69v1h-69zM540 559h44v1h-44zM432 560h150v1h-150zM432 561h147v1h-147zM357 562h3v1h-3zM433 562h142v1h-142zM357 563h7v1h-7zM433 563h138v1h-138zM357 564h11v1h-11zM435 564h132v1h-132zM357 565h17v1h-17zM432 565h128v1h-128zM357 566h28v1h-28zM420 566h127v1h-127zM357 567h178v1h-178zM357 568h173v1h-173zM357 569h170v1h-170zM357 570h168v1h-168zM357 571h167v1h-167zM357 572h165v1h-165zM357 573h164v1h-164zM379 574h141v1h-141zM401 575h117v1h-117zM415 576h101v1h-101zM424 577h90v1h-90zM430 578h82v1h-82zM435 579h75v1h-75zM442 580h66v1h-66zM449 581h56v1h-56zM455 582h46v1h-46zM462 583h34v1h-34zM469 584h22v1h-22z"/><path fill="#b1e000" d="M357 480h17v1h-17zM365 481h24v1h-24zM378 482h23v1h-23zM389 483h25v1h-25zM401 484h27v1h-27zM412 485h25v1h-25zM420 486h22v1h-22zM425 487h20v1h-20zM428 488h19v1h-19zM431 489h18v1h-18zM434 490h18v1h-18zM437 491h18v1h-18zM439 492h20v1h-20zM442 493h23v1h-23zM557 493h37v1h-37zM687 493h3v1h-3zM445 494h27v1h-27zM549 494h54v1h-54zM683 494h15v1h-15zM449 495h29v1h-29zM543 495h21v1h-21zM581 495h28v1h-28zM681 495h26v1h-26zM452 496h29v1h-29zM538 496h16v1h-16zM593 496h21v1h-21zM678 496h35v1h-35zM455 497h27v1h-27zM534 497h16v1h-16zM599 497h21v1h-21zM673 497h44v1h-44zM457 498h26v1h-26zM530 498h16v1h-16zM602 498h89v1h-89zM712 498h8v1h-8zM459 499h25v1h-25zM526 499h17v1h-17zM604 499h79v1h-79zM717 499h6v1h-6zM460 500h26v1h-26zM523 500h18v1h-18zM605 500h71v1h-71zM720 500h6v1h-6zM989 500h7v1h-7zM460 501h28v1h-28zM520 501h18v1h-18zM608 501h59v1h-59zM724 501h6v1h-6zM981 501h6v1h-6zM460 502h30v1h-30zM518 502h18v1h-18zM611 502h50v1h-50zM728 502h7v1h-7zM972 502h7v1h-7zM459 503h34v1h-34zM516 503h18v1h-18zM616 503h33v1h-33zM734 503h9v1h-9zM963 503h8v1h-8zM459 504h39v1h-39zM513 504h20v1h-20zM742 504h9v1h-9zM954 504h8v1h-8zM458 505h73v1h-73zM750 505h8v1h-8zM942 505h11v1h-11zM458 506h71v1h-71zM756 506h8v1h-8zM923 506h18v1h-18zM457 507h70v1h-70zM761 507h8v1h-8zM843 507h76v1h-76zM457 508h68v1h-68zM766 508h9v1h-9zM839 508h6v1h-6zM456 509h68v1h-68zM772 509h11v1h-11zM835 509h6v1h-6zM455 510h68v1h-68zM778 510h26v1h-26zM830 510h7v1h-7zM454 511h68v1h-68zM788 511h45v1h-45zM452 512h70v1h-70zM450 513h71v1h-71zM449 514h72v1h-72zM447 515h81v1h-81zM446 516h89v1h-89zM445 517h94v1h-94zM443 518h30v1h-30zM485 518h56v1h-56zM442 519h27v1h-27zM488 519h56v1h-56zM440 520h27v1h-27zM491 520h55v1h-55zM438 521h27v1h-27zM493 521h55v1h-55zM436 522h27v1h-27zM495 522h55v1h-55zM434 523h27v1h-27zM497 523h55v1h-55zM432 524h28v1h-28zM499 524h55v1h-55zM429 525h29v1h-29zM502 525h54v1h-54zM425 526h32v1h-32zM504 526h19v1h-19zM534 526h24v1h-24zM420 527h36v1h-36zM510 527h5v1h-5zM538 527h23v1h-23zM415 528h39v1h-39zM541 528h23v1h-23zM408 529h45v1h-45zM543 529h24v1h-24zM401 530h51v1h-51zM545 530h26v1h-26zM395 531h56v1h-56zM548 531h27v1h-27zM389 532h61v1h-61zM550 532h30v1h-30zM383 533h65v1h-65zM552 533h32v1h-32zM377 534h70v1h-70zM554 534h33v1h-33zM370 535h75v1h-75zM557 535h33v1h-33zM362 536h80v1h-80zM559 536h34v1h-34zM357 537h81v1h-81zM562 537h33v1h-33zM357 538h74v1h-74zM565 538h32v1h-32zM357 539h61v1h-61zM568 539h31v1h-31zM357 540h44v1h-44zM571 540h30v1h-30zM357 541h32v1h-32zM573 541h29v1h-29zM357 542h24v1h-24zM576 542h28v1h-28zM357 543h18v1h-18zM579 543h27v1h-27zM357 544h14v1h-14zM581 544h27v1h-27zM357 545h10v1h-10zM583 545h27v1h-27zM357 546h7v1h-7zM584 546h28v1h-28zM357 547h5v1h-5zM586 547h28v1h-28zM357 548h2v1h-2zM587 548h29v1h-29zM589 549h29v1h-29zM590 550h29v1h-29zM590 551h29v1h-29zM589 552h28v1h-28zM589 553h26v1h-26zM588 554h26v1h-26zM588 555h25v1h-25zM587 556h25v1h-25zM586 557h25v1h-25zM585 558h26v1h-26zM584 559h26v1h-26zM582 560h28v1h-28zM579 561h29v1h-29zM575 562h32v1h-32zM571 563h34v1h-34zM567 564h36v1h-36zM560 565h40v1h-40zM547 566h51v1h-51zM535 567h60v1h-60zM530 568h62v1h-62zM527 569h63v1h-63zM525 570h61v1h-61zM524 571h54v1h-54zM522 572h32v1h-32zM521 573h18v1h-18zM357 574h22v1h-22zM520 574h14v1h-14zM357 575h44v1h-44zM518 575h12v1h-12zM357 576h58v1h-58zM516 576h11v1h-11zM357 577h67v1h-67zM514 577h10v1h-10zM357 578h73v1h-73zM512 578h10v1h-10zM357 579h78v1h-78zM510 579h11v1h-11zM357 580h85v1h-85zM508 580h11v1h-11zM382 581h67v1h-67zM505 581h13v1h-13zM395 582h60v1h-60zM501 582h16v1h-16zM405 583h57v1h-57zM496 583h20v1h-20zM411 584h58v1h-58zM491 584h24v1h-24zM417 585h97v1h-97zM422 586h91v1h-91zM426 587h85v1h-85zM431 588h79v1h-79zM436 589h73v1h-73zM441 590h66v1h-66zM446 591h58v1h-58zM452 592h47v1h-47zM458 593h37v1h-37zM466 594h23v1h-23z"/><path fill="#bfe600" d="M357 481h8v1h-8zM357 482h21v1h-21zM366 483h23v1h-23zM376 484h25v1h-25zM386 485h26v1h-26zM394 486h26v1h-26zM401 487h24v1h-24zM406 488h22v1h-22zM411 489h20v1h-20zM415 490h19v1h-19zM419 491h18v1h-18zM422 492h17v1h-17zM424 493h18v1h-18zM427 494h18v1h-18zM429 495h20v1h-20zM564 495h17v1h-17zM431 496h21v1h-21zM554 496h39v1h-39zM433 497h22v1h-22zM550 497h49v1h-49zM435 498h22v1h-22zM546 498h21v1h-21zM575 498h27v1h-27zM691 498h21v1h-21zM438 499h21v1h-21zM543 499h20v1h-20zM579 499h25v1h-25zM683 499h34v1h-34zM439 500h21v1h-21zM541 500h19v1h-19zM581 500h24v1h-24zM676 500h44v1h-44zM439 501h21v1h-21zM538 501h20v1h-20zM583 501h25v1h-25zM667 501h32v1h-32zM716 501h8v1h-8zM987 501h9v1h-9zM438 502h22v1h-22zM536 502h20v1h-20zM585 502h26v1h-26zM661 502h33v1h-33zM721 502h7v1h-7zM979 502h6v1h-6zM437 503h22v1h-22zM534 503h20v1h-20zM587 503h29v1h-29zM649 503h41v1h-41zM726 503h8v1h-8zM971 503h7v1h-7zM436 504h23v1h-23zM533 504h19v1h-19zM589 504h98v1h-98zM732 504h10v1h-10zM962 504h8v1h-8zM435 505h23v1h-23zM531 505h19v1h-19zM590 505h96v1h-96zM739 505h11v1h-11zM953 505h9v1h-9zM434 506h24v1h-24zM529 506h19v1h-19zM592 506h93v1h-93zM747 506h9v1h-9zM941 506h11v1h-11zM432 507h25v1h-25zM527 507h19v1h-19zM593 507h91v1h-91zM753 507h8v1h-8zM919 507h20v1h-20zM431 508h26v1h-26zM525 508h20v1h-20zM595 508h89v1h-89zM758 508h8v1h-8zM845 508h73v1h-73zM429 509h27v1h-27zM524 509h19v1h-19zM598 509h85v1h-85zM764 509h8v1h-8zM841 509h7v1h-7zM428 510h27v1h-27zM523 510h19v1h-19zM600 510h83v1h-83zM769 510h9v1h-9zM837 510h5v1h-5zM427 511h27v1h-27zM522 511h21v1h-21zM601 511h81v1h-81zM775 511h13v1h-13zM833 511h6v1h-6zM425 512h27v1h-27zM522 512h24v1h-24zM598 512h83v1h-83zM782 512h54v1h-54zM424 513h26v1h-26zM521 513h28v1h-28zM596 513h85v1h-85zM795 513h36v1h-36zM423 514h26v1h-26zM521 514h31v1h-31zM595 514h85v1h-85zM421 515h26v1h-26zM528 515h27v1h-27zM593 515h86v1h-86zM420 516h26v1h-26zM535 516h22v1h-22zM591 516h87v1h-87zM418 517h27v1h-27zM539 517h21v1h-21zM588 517h89v1h-89zM415 518h28v1h-28zM541 518h21v1h-21zM586 518h89v1h-89zM413 519h29v1h-29zM544 519h22v1h-22zM581 519h92v1h-92zM410 520h30v1h-30zM546 520h123v1h-123zM407 521h31v1h-31zM548 521h82v1h-82zM403 522h33v1h-33zM550 522h80v1h-80zM398 523h36v1h-36zM552 523h78v1h-78zM394 524h38v1h-38zM554 524h76v1h-76zM389 525h40v1h-40zM556 525h74v1h-74zM383 526h42v1h-42zM558 526h72v1h-72zM378 527h42v1h-42zM561 527h69v1h-69zM371 528h44v1h-44zM564 528h66v1h-66zM365 529h43v1h-43zM567 529h63v1h-63zM357 530h44v1h-44zM571 530h94v1h-94zM357 531h38v1h-38zM575 531h92v1h-92zM357 532h32v1h-32zM580 532h87v1h-87zM357 533h26v1h-26zM584 533h84v1h-84zM357 534h20v1h-20zM587 534h81v1h-81zM357 535h13v1h-13zM590 535h78v1h-78zM357 536h5v1h-5zM593 536h76v1h-76zM595 537h74v1h-74zM597 538h72v1h-72zM599 539h70v1h-70zM601 540h68v1h-68zM602 541h67v1h-67zM604 542h65v1h-65zM606 543h63v1h-63zM608 544h61v1h-61zM610 545h59v1h-59zM612 546h57v1h-57zM614 547h56v1h-56zM616 548h54v1h-54zM618 549h52v1h-52zM619 550h51v1h-51zM619 551h51v1h-51zM617 552h53v1h-53zM615 553h54v1h-54zM614 554h55v1h-55zM613 555h56v1h-56zM612 556h57v1h-57zM611 557h58v1h-58zM611 558h58v1h-58zM610 559h59v1h-59zM610 560h58v1h-58zM608 561h59v1h-59zM607 562h57v1h-57zM605 563h55v1h-55zM603 564h52v1h-52zM600 565h49v1h-49zM598 566h43v1h-43zM595 567h39v1h-39zM592 568h37v1h-37zM590 569h35v1h-35zM586 570h33v1h-33zM578 571h36v1h-36zM554 572h56v1h-56zM539 573h68v1h-68zM534 574h69v1h-69zM530 575h25v1h-25zM527 576h19v1h-19zM524 577h14v1h-14zM522 578h11v1h-11zM521 579h8v1h-8zM519 580h8v1h-8zM357 581h25v1h-25zM518 581h7v1h-7zM357 582h38v1h-38zM517 582h6v1h-6zM357 583h48v1h-48zM516 583h6v1h-6zM357 584h54v1h-54zM515 584h6v1h-6zM357 585h60v1h-60zM514 585h5v1h-5zM357 586h65v1h-65zM513 586h5v1h-5zM374 587h52v1h-52zM511 587h6v1h-6zM385 588h46v1h-46zM510 588h7v1h-7zM393 589h43v1h-43zM509 589h7v1h-7zM400 590h41v1h-41zM507 590h8v1h-8zM405 591h41v1h-41zM504 591h10v1h-10zM410 592h42v1h-42zM499 592h14v1h-14zM413 593h45v1h-45zM495 593h16v1h-16zM417 594h49v1h-49zM489 594h21v1h-21zM421 595h87v1h-87zM424 596h82v1h-82zM429 597h75v1h-75zM433 598h69v1h-69zM439 599h60v1h-60zM444 600h53v1h-53zM450 601h44v1h-44zM455 602h37v1h-37zM460 603h29v1h-29zM466 604h21v1h-21zM474 605h8v1h-8z"/><path fill="#cdeb00" d="M357 483h9v1h-9zM357 484h19v1h-19zM359 485h27v1h-27zM370 486h24v1h-24zM378 487h23v1h-23zM384 488h22v1h-22zM390 489h21v1h-21zM396 490h19v1h-19zM400 491h19v1h-19zM405 492h17v1h-17zM409 493h15v1h-15zM412 494h15v1h-15zM414 495h15v1h-15zM416 496h15v1h-15zM416 497h17v1h-17zM417 498h18v1h-18zM567 498h8v1h-8zM418 499h20v1h-20zM563 499h16v1h-16zM418 500h21v1h-21zM560 500h21v1h-21zM418 501h21v1h-21zM558 501h25v1h-25zM699 501h17v1h-17zM418 502h20v1h-20zM556 502h29v1h-29zM694 502h27v1h-27zM985 502h7v1h-7zM417 503h20v1h-20zM554 503h33v1h-33zM690 503h15v1h-15zM714 503h12v1h-12zM978 503h6v1h-6zM416 504h20v1h-20zM552 504h37v1h-37zM687 504h13v1h-13zM722 504h10v1h-10zM970 504h7v1h-7zM416 505h19v1h-19zM550 505h40v1h-40zM686 505h11v1h-11zM728 505h11v1h-11zM962 505h8v1h-8zM414 506h20v1h-20zM548 506h44v1h-44zM685 506h10v1h-10zM735 506h12v1h-12zM952 506h9v1h-9zM413 507h19v1h-19zM546 507h47v1h-47zM684 507h10v1h-10zM742 507h11v1h-11zM939 507h12v1h-12zM412 508h19v1h-19zM545 508h50v1h-50zM684 508h9v1h-9zM749 508h9v1h-9zM918 508h21v1h-21zM410 509h19v1h-19zM543 509h55v1h-55zM683 509h10v1h-10zM755 509h9v1h-9zM848 509h74v1h-74zM409 510h19v1h-19zM542 510h58v1h-58zM683 510h9v1h-9zM761 510h8v1h-8zM842 510h11v1h-11zM407 511h20v1h-20zM543 511h58v1h-58zM682 511h9v1h-9zM767 511h8v1h-8zM839 511h6v1h-6zM406 512h19v1h-19zM546 512h52v1h-52zM681 512h10v1h-10zM772 512h10v1h-10zM836 512h5v1h-5zM404 513h20v1h-20zM549 513h47v1h-47zM681 513h10v1h-10zM777 513h18v1h-18zM831 513h7v1h-7zM402 514h21v1h-21zM552 514h43v1h-43zM680 514h11v1h-11zM783 514h51v1h-51zM400 515h21v1h-21zM555 515h38v1h-38zM679 515h11v1h-11zM398 516h22v1h-22zM557 516h34v1h-34zM678 516h12v1h-12zM395 517h23v1h-23zM560 517h28v1h-28zM677 517h13v1h-13zM392 518h23v1h-23zM562 518h24v1h-24zM675 518h15v1h-15zM388 519h25v1h-25zM566 519h15v1h-15zM673 519h16v1h-16zM383 520h27v1h-27zM669 520h20v1h-20zM378 521h29v1h-29zM630 521h59v1h-59zM373 522h30v1h-30zM630 522h59v1h-59zM368 523h30v1h-30zM630 523h58v1h-58zM363 524h31v1h-31zM630 524h58v1h-58zM357 525h32v1h-32zM630 525h58v1h-58zM357 526h26v1h-26zM630 526h57v1h-57zM357 527h21v1h-21zM630 527h57v1h-57zM357 528h14v1h-14zM630 528h57v1h-57zM357 529h8v1h-8zM630 529h57v1h-57zM665 530h22v1h-22zM667 531h20v1h-20zM667 532h20v1h-20zM668 533h18v1h-18zM668 534h18v1h-18zM668 535h18v1h-18zM669 536h17v1h-17zM669 537h17v1h-17zM669 538h16v1h-16zM669 539h16v1h-16zM669 540h16v1h-16zM669 541h16v1h-16zM669 542h16v1h-16zM669 543h16v1h-16zM669 544h16v1h-16zM669 545h16v1h-16zM669 546h16v1h-16zM670 547h15v1h-15zM670 548h15v1h-15zM670 549h15v1h-15zM670 550h15v1h-15zM670 551h15v1h-15zM670 552h15v1h-15zM669 553h16v1h-16zM669 554h17v1h-17zM669 555h17v1h-17zM669 556h17v1h-17zM669 557h17v1h-17zM669 558h17v1h-17zM669 559h17v1h-17zM668 560h18v1h-18zM667 561h19v1h-19zM664 562h22v1h-22zM660 563h26v1h-26zM655 564h30v1h-30zM649 565h36v1h-36zM641 566h44v1h-44zM634 567h51v1h-51zM629 568h56v1h-56zM625 569h60v1h-60zM619 570h66v1h-66zM614 571h71v1h-71zM610 572h75v1h-75zM607 573h78v1h-78zM603 574h81v1h-81zM555 575h129v1h-129zM546 576h138v1h-138zM538 577h82v1h-82zM636 577h47v1h-47zM533 578h21v1h-21zM584 578h29v1h-29zM653 578h30v1h-30zM529 579h17v1h-17zM592 579h16v1h-16zM670 579h11v1h-11zM527 580h12v1h-12zM525 581h9v1h-9zM523 582h8v1h-8zM522 583h6v1h-6zM521 584h5v1h-5zM519 585h5v1h-5zM518 586h5v1h-5zM357 587h17v1h-17zM517 587h5v1h-5zM357 588h28v1h-28zM517 588h4v1h-4zM357 589h36v1h-36zM516 589h4v1h-4zM357 590h43v1h-43zM515 590h4v1h-4zM357 591h48v1h-48zM514 591h4v1h-4zM366 592h44v1h-44zM513 592h4v1h-4zM374 593h39v1h-39zM511 593h5v1h-5zM381 594h36v1h-36zM510 594h5v1h-5zM386 595h35v1h-35zM508 595h6v1h-6zM391 596h33v1h-33zM506 596h7v1h-7zM395 597h34v1h-34zM504 597h8v1h-8zM399 598h34v1h-34zM502 598h9v1h-9zM403 599h36v1h-36zM499 599h11v1h-11zM407 600h37v1h-37zM497 600h12v1h-12zM410 601h40v1h-40zM494 601h13v1h-13zM414 602h41v1h-41zM492 602h14v1h-14zM418 603h42v1h-42zM489 603h15v1h-15zM422 604h44v1h-44zM487 604h16v1h-16zM426 605h48v1h-48zM482 605h19v1h-19zM431 606h68v1h-68zM436 607h60v1h-60zM441 608h54v1h-54zM447 609h46v1h-46zM452 610h39v1h-39zM455 611h35v1h-35z"/><path fill="#dcf100" d="M357 485h2v1h-2zM357 486h13v1h-13zM357 487h21v1h-21zM363 488h21v1h-21zM370 489h20v1h-20zM376 490h20v1h-20zM382 491h18v1h-18zM387 492h18v1h-18zM391 493h18v1h-18zM396 494h16v1h-16zM399 495h15v1h-15zM400 496h16v1h-16zM400 497h16v1h-16zM401 498h16v1h-16zM401 499h17v1h-17zM401 500h17v1h-17zM401 501h17v1h-17zM401 502h17v1h-17zM992 502h4v1h-4zM401 503h16v1h-16zM705 503h9v1h-9zM984 503h7v1h-7zM401 504h15v1h-15zM700 504h22v1h-22zM977 504h6v1h-6zM400 505h16v1h-16zM697 505h31v1h-31zM970 505h7v1h-7zM399 506h15v1h-15zM695 506h11v1h-11zM720 506h15v1h-15zM961 506h8v1h-8zM398 507h15v1h-15zM694 507h9v1h-9zM727 507h15v1h-15zM951 507h9v1h-9zM396 508h16v1h-16zM693 508h8v1h-8zM735 508h14v1h-14zM939 508h12v1h-12zM395 509h15v1h-15zM693 509h6v1h-6zM745 509h10v1h-10zM922 509h19v1h-19zM394 510h15v1h-15zM692 510h6v1h-6zM752 510h9v1h-9zM853 510h75v1h-75zM392 511h15v1h-15zM691 511h6v1h-6zM759 511h8v1h-8zM845 511h15v1h-15zM390 512h16v1h-16zM691 512h6v1h-6zM764 512h8v1h-8zM841 512h6v1h-6zM388 513h16v1h-16zM691 513h5v1h-5zM768 513h9v1h-9zM838 513h5v1h-5zM386 514h16v1h-16zM691 514h5v1h-5zM771 514h12v1h-12zM834 514h5v1h-5zM383 515h17v1h-17zM690 515h6v1h-6zM776 515h60v1h-60zM380 516h18v1h-18zM690 516h6v1h-6zM783 516h49v1h-49zM376 517h19v1h-19zM690 517h5v1h-5zM371 518h21v1h-21zM690 518h5v1h-5zM365 519h23v1h-23zM689 519h6v1h-6zM357 520h26v1h-26zM689 520h6v1h-6zM357 521h21v1h-21zM689 521h5v1h-5zM357 522h16v1h-16zM689 522h5v1h-5zM357 523h11v1h-11zM688 523h6v1h-6zM357 524h6v1h-6zM688 524h6v1h-6zM688 525h5v1h-5zM687 526h6v1h-6zM687 527h6v1h-6zM687 528h6v1h-6zM687 529h6v1h-6zM687 530h6v1h-6zM687 531h6v1h-6zM687 532h6v1h-6zM686 533h7v1h-7zM686 534h7v1h-7zM686 535h7v1h-7zM686 536h7v1h-7zM686 537h7v1h-7zM685 538h8v1h-8zM685 539h8v1h-8zM685 540h9v1h-9zM685 541h9v1h-9zM685 542h9v1h-9zM685 543h9v1h-9zM685 544h10v1h-10zM685 545h10v1h-10zM685 546h10v1h-10zM685 547h11v1h-11zM685 548h11v1h-11zM685 549h11v1h-11zM685 550h11v1h-11zM685 551h12v1h-12zM685 552h12v1h-12zM685 553h12v1h-12zM686 554h11v1h-11zM686 555h12v1h-12zM686 556h12v1h-12zM686 557h12v1h-12zM686 558h13v1h-13zM686 559h13v1h-13zM686 560h13v1h-13zM686 561h13v1h-13zM686 562h13v1h-13zM686 563h13v1h-13zM685 564h14v1h-14zM685 565h13v1h-13zM685 566h13v1h-13zM685 567h13v1h-13zM685 568h13v1h-13zM685 569h13v1h-13zM685 570h12v1h-12zM685 571h12v1h-12zM685 572h12v1h-12zM685 573h12v1h-12zM684 574h13v1h-13zM684 575h13v1h-13zM684 576h13v1h-13zM620 577h16v1h-16zM683 577h14v1h-14zM554 578h30v1h-30zM613 578h40v1h-40zM683 578h13v1h-13zM546 579h46v1h-46zM608 579h62v1h-62zM681 579h15v1h-15zM539 580h157v1h-157zM534 581h22v1h-22zM579 581h116v1h-116zM531 582h17v1h-17zM585 582h110v1h-110zM528 583h14v1h-14zM589 583h105v1h-105zM526 584h10v1h-10zM594 584h19v1h-19zM633 584h61v1h-61zM524 585h8v1h-8zM642 585h51v1h-51zM523 586h6v1h-6zM647 586h46v1h-46zM522 587h4v1h-4zM652 587h40v1h-40zM521 588h4v1h-4zM656 588h36v1h-36zM520 589h3v1h-3zM659 589h32v1h-32zM519 590h3v1h-3zM662 590h29v1h-29zM518 591h3v1h-3zM666 591h24v1h-24zM357 592h9v1h-9zM517 592h3v1h-3zM669 592h20v1h-20zM357 593h17v1h-17zM516 593h4v1h-4zM672 593h17v1h-17zM357 594h24v1h-24zM515 594h4v1h-4zM674 594h14v1h-14zM357 595h29v1h-29zM514 595h4v1h-4zM676 595h11v1h-11zM358 596h33v1h-33zM513 596h4v1h-4zM678 596h8v1h-8zM366 597h29v1h-29zM512 597h4v1h-4zM680 597h4v1h-4zM371 598h28v1h-28zM511 598h4v1h-4zM376 599h27v1h-27zM510 599h4v1h-4zM380 600h27v1h-27zM509 600h5v1h-5zM383 601h27v1h-27zM507 601h6v1h-6zM387 602h27v1h-27zM506 602h6v1h-6zM390 603h28v1h-28zM504 603h7v1h-7zM393 604h29v1h-29zM503 604h7v1h-7zM396 605h30v1h-30zM501 605h8v1h-8zM399 606h32v1h-32zM499 606h8v1h-8zM402 607h34v1h-34zM496 607h9v1h-9zM405 608h36v1h-36zM495 608h8v1h-8zM408 609h39v1h-39zM493 609h9v1h-9zM413 610h39v1h-39zM491 610h9v1h-9zM416 611h39v1h-39zM490 611h9v1h-9z"/><path fill="#eaf600" d="M357 488h6v1h-6zM357 489h13v1h-13zM357 490h19v1h-19zM362 491h20v1h-20zM367 492h20v1h-20zM373 493h18v1h-18zM378 494h18v1h-18zM381 495h18v1h-18zM384 496h16v1h-16zM385 497h15v1h-15zM385 498h16v1h-16zM386 499h15v1h-15zM386 500h15v1h-15zM387 501h14v1h-14zM387 502h14v1h-14zM388 503h13v1h-13zM991 503h5v1h-5zM388 504h13v1h-13zM983 504h7v1h-7zM388 505h12v1h-12zM977 505h6v1h-6zM387 506h12v1h-12zM706 506h14v1h-14zM969 506h7v1h-7zM386 507h12v1h-12zM703 507h24v1h-24zM960 507h9v1h-9zM384 508h12v1h-12zM701 508h34v1h-34zM951 508h10v1h-10zM383 509h12v1h-12zM699 509h11v1h-11zM720 509h25v1h-25zM941 509h12v1h-12zM381 510h13v1h-13zM698 510h8v1h-8zM735 510h17v1h-17zM928 510h16v1h-16zM380 511h12v1h-12zM697 511h7v1h-7zM748 511h11v1h-11zM860 511h72v1h-72zM378 512h12v1h-12zM697 512h5v1h-5zM755 512h9v1h-9zM847 512h20v1h-20zM376 513h12v1h-12zM696 513h6v1h-6zM759 513h9v1h-9zM843 513h8v1h-8zM373 514h13v1h-13zM696 514h5v1h-5zM762 514h9v1h-9zM839 514h6v1h-6zM369 515h14v1h-14zM696 515h5v1h-5zM765 515h11v1h-11zM836 515h5v1h-5zM365 516h15v1h-15zM696 516h4v1h-4zM769 516h14v1h-14zM832 516h6v1h-6zM357 517h19v1h-19zM695 517h5v1h-5zM775 517h60v1h-60zM357 518h14v1h-14zM695 518h5v1h-5zM785 518h42v1h-42zM357 519h8v1h-8zM695 519h4v1h-4zM695 520h4v1h-4zM694 521h5v1h-5zM694 522h4v1h-4zM694 523h4v1h-4zM694 524h4v1h-4zM693 525h4v1h-4zM693 526h4v1h-4zM693 527h4v1h-4zM693 528h4v1h-4zM693 529h4v1h-4zM693 530h4v1h-4zM693 531h5v1h-5zM693 532h5v1h-5zM693 533h5v1h-5zM693 534h5v1h-5zM693 535h6v1h-6zM693 536h6v1h-6zM693 537h6v1h-6zM693 538h7v1h-7zM693 539h7v1h-7zM694 540h6v1h-6zM694 541h7v1h-7zM694 542h7v1h-7zM694 543h8v1h-8zM695 544h7v1h-7zM695 545h8v1h-8zM695 546h8v1h-8zM696 547h8v1h-8zM696 548h8v1h-8zM696 549h9v1h-9zM696 550h9v1h-9zM697 551h9v1h-9zM697 552h9v1h-9zM697 553h9v1h-9zM697 554h10v1h-10zM698 555h9v1h-9zM698 556h10v1h-10zM698 557h10v1h-10zM699 558h10v1h-10zM699 559h10v1h-10zM699 560h10v1h-10zM699 561h10v1h-10zM699 562h10v1h-10zM699 563h9v1h-9zM699 564h9v1h-9zM698 565h9v1h-9zM698 566h9v1h-9zM698 567h9v1h-9zM698 568h8v1h-8zM698 569h8v1h-8zM697 570h9v1h-9zM697 571h8v1h-8zM697 572h8v1h-8zM697 573h8v1h-8zM697 574h7v1h-7zM697 575h7v1h-7zM697 576h7v1h-7zM697 577h6v1h-6zM696 578h7v1h-7zM696 579h6v1h-6zM696 580h6v1h-6zM556 581h23v1h-23zM695 581h6v1h-6zM548 582h37v1h-37zM695 582h6v1h-6zM542 583h47v1h-47zM694 583h6v1h-6zM536 584h58v1h-58zM613 584h20v1h-20zM694 584h6v1h-6zM532 585h22v1h-22zM578 585h64v1h-64zM693 585h6v1h-6zM529 586h15v1h-15zM583 586h64v1h-64zM693 586h6v1h-6zM526 587h10v1h-10zM588 587h64v1h-64zM692 587h7v1h-7zM525 588h6v1h-6zM594 588h62v1h-62zM692 588h6v1h-6zM523 589h5v1h-5zM603 589h56v1h-56zM691 589h7v1h-7zM522 590h4v1h-4zM620 590h42v1h-42zM691 590h6v1h-6zM521 591h4v1h-4zM627 591h39v1h-39zM690 591h7v1h-7zM520 592h4v1h-4zM632 592h37v1h-37zM689 592h7v1h-7zM520 593h3v1h-3zM636 593h36v1h-36zM689 593h7v1h-7zM519 594h3v1h-3zM640 594h34v1h-34zM688 594h7v1h-7zM518 595h3v1h-3zM644 595h32v1h-32zM687 595h8v1h-8zM357 596h1v1h-1zM517 596h3v1h-3zM647 596h31v1h-31zM686 596h8v1h-8zM357 597h9v1h-9zM516 597h3v1h-3zM650 597h30v1h-30zM684 597h10v1h-10zM357 598h14v1h-14zM515 598h3v1h-3zM654 598h39v1h-39zM357 599h19v1h-19zM514 599h4v1h-4zM657 599h36v1h-36zM357 600h23v1h-23zM514 600h3v1h-3zM659 600h33v1h-33zM362 601h21v1h-21zM513 601h3v1h-3zM662 601h30v1h-30zM366 602h21v1h-21zM512 602h3v1h-3zM664 602h27v1h-27zM370 603h20v1h-20zM511 603h4v1h-4zM666 603h24v1h-24zM373 604h20v1h-20zM510 604h4v1h-4zM668 604h22v1h-22zM376 605h20v1h-20zM509 605h4v1h-4zM670 605h19v1h-19zM379 606h20v1h-20zM507 606h5v1h-5zM672 606h16v1h-16zM382 607h20v1h-20zM505 607h6v1h-6zM674 607h13v1h-13zM384 608h21v1h-21zM503 608h6v1h-6zM676 608h10v1h-10zM386 609h22v1h-22zM502 609h6v1h-6zM679 609h5v1h-5zM388 610h25v1h-25zM500 610h6v1h-6zM389 611h27v1h-27zM499 611h6v1h-6z"/><path fill="#f8fc00" d="M357 491h5v1h-5zM357 492h10v1h-10zM357 493h16v1h-16zM357 494h21v1h-21zM362 495h19v1h-19zM366 496h18v1h-18zM369 497h16v1h-16zM371 498h14v1h-14zM373 499h13v1h-13zM374 500h12v1h-12zM375 501h12v1h-12zM376 502h11v1h-11zM377 503h11v1h-11zM378 504h10v1h-10zM990 504h6v1h-6zM378 505h10v1h-10zM983 505h7v1h-7zM377 506h10v1h-10zM976 506h7v1h-7zM376 507h10v1h-10zM969 507h7v1h-7zM374 508h10v1h-10zM961 508h8v1h-8zM373 509h10v1h-10zM710 509h10v1h-10zM953 509h9v1h-9zM371 510h10v1h-10zM706 510h29v1h-29zM944 510h12v1h-12zM369 511h11v1h-11zM704 511h44v1h-44zM932 511h15v1h-15zM367 512h11v1h-11zM702 512h53v1h-53zM867 512h69v1h-69zM364 513h12v1h-12zM702 513h9v1h-9zM747 513h12v1h-12zM851 513h66v1h-66zM359 514h14v1h-14zM701 514h8v1h-8zM751 514h11v1h-11zM845 514h13v1h-13zM357 515h12v1h-12zM701 515h6v1h-6zM755 515h10v1h-10zM841 515h7v1h-7zM357 516h8v1h-8zM700 516h6v1h-6zM758 516h11v1h-11zM838 516h6v1h-6zM700 517h6v1h-6zM762 517h13v1h-13zM835 517h6v1h-6zM700 518h5v1h-5zM767 518h18v1h-18zM827 518h11v1h-11zM699 519h5v1h-5zM774 519h60v1h-60zM699 520h5v1h-5zM787 520h25v1h-25zM699 521h4v1h-4zM698 522h5v1h-5zM698 523h4v1h-4zM698 524h4v1h-4zM697 525h5v1h-5zM697 526h4v1h-4zM697 527h4v1h-4zM697 528h4v1h-4zM697 529h4v1h-4zM697 530h5v1h-5zM698 531h4v1h-4zM698 532h5v1h-5zM698 533h5v1h-5zM698 534h6v1h-6zM699 535h5v1h-5zM699 536h6v1h-6zM699 537h6v1h-6zM700 538h6v1h-6zM700 539h6v1h-6zM700 540h7v1h-7zM701 541h6v1h-6zM701 542h7v1h-7zM702 543h7v1h-7zM702 544h8v1h-8zM703 545h7v1h-7zM703 546h8v1h-8zM704 547h7v1h-7zM704 548h7v1h-7zM705 549h7v1h-7zM705 550h7v1h-7zM706 551h6v1h-6zM706 552h7v1h-7zM706 553h7v1h-7zM707 554h6v1h-6zM707 555h7v1h-7zM708 556h6v1h-6zM708 557h6v1h-6zM709 558h6v1h-6zM709 559h6v1h-6zM709 560h6v1h-6zM709 561h6v1h-6zM709 562h5v1h-5zM708 563h6v1h-6zM708 564h6v1h-6zM707 565h6v1h-6zM707 566h6v1h-6zM707 567h6v1h-6zM706 568h6v1h-6zM706 569h6v1h-6zM706 570h6v1h-6zM705 571h6v1h-6zM705 572h6v1h-6zM705 573h6v1h-6zM704 574h6v1h-6zM704 575h6v1h-6zM704 576h5v1h-5zM703 577h6v1h-6zM703 578h5v1h-5zM702 579h6v1h-6zM702 580h5v1h-5zM701 581h5v1h-5zM701 582h5v1h-5zM700 583h5v1h-5zM700 584h5v1h-5zM554 585h24v1h-24zM699 585h5v1h-5zM544 586h39v1h-39zM699 586h5v1h-5zM536 587h52v1h-52zM699 587h4v1h-4zM531 588h24v1h-24zM575 588h19v1h-19zM698 588h5v1h-5zM528 589h11v1h-11zM584 589h19v1h-19zM698 589h4v1h-4zM526 590h6v1h-6zM590 590h30v1h-30zM697 590h5v1h-5zM525 591h4v1h-4zM594 591h33v1h-33zM697 591h4v1h-4zM524 592h4v1h-4zM598 592h34v1h-34zM696 592h5v1h-5zM523 593h3v1h-3zM602 593h34v1h-34zM696 593h4v1h-4zM522 594h3v1h-3zM607 594h33v1h-33zM695 594h5v1h-5zM521 595h3v1h-3zM613 595h31v1h-31zM695 595h4v1h-4zM520 596h3v1h-3zM618 596h29v1h-29zM694 596h5v1h-5zM519 597h3v1h-3zM622 597h28v1h-28zM694 597h4v1h-4zM518 598h3v1h-3zM625 598h29v1h-29zM693 598h5v1h-5zM518 599h2v1h-2zM628 599h29v1h-29zM693 599h4v1h-4zM517 600h3v1h-3zM631 600h28v1h-28zM692 600h5v1h-5zM357 601h5v1h-5zM516 601h3v1h-3zM634 601h28v1h-28zM692 601h4v1h-4zM357 602h9v1h-9zM515 602h3v1h-3zM636 602h28v1h-28zM691 602h5v1h-5zM357 603h13v1h-13zM515 603h2v1h-2zM639 603h27v1h-27zM690 603h5v1h-5zM357 604h16v1h-16zM514 604h3v1h-3zM641 604h27v1h-27zM690 604h5v1h-5zM360 605h16v1h-16zM513 605h3v1h-3zM643 605h27v1h-27zM689 605h5v1h-5zM364 606h15v1h-15zM512 606h3v1h-3zM646 606h26v1h-26zM688 606h6v1h-6zM367 607h15v1h-15zM511 607h3v1h-3zM648 607h26v1h-26zM687 607h6v1h-6zM370 608h14v1h-14zM509 608h4v1h-4zM651 608h25v1h-25zM686 608h7v1h-7zM372 609h14v1h-14zM508 609h4v1h-4zM653 609h26v1h-26zM684 609h8v1h-8zM373 610h15v1h-15zM506 610h5v1h-5zM655 610h37v1h-37zM375 611h14v1h-14zM505 611h5v1h-5zM657 611h35v1h-35z"/><path fill="#fff700" d="M357 495h5v1h-5zM357 496h9v1h-9zM357 497h12v1h-12zM357 498h14v1h-14zM359 499h14v1h-14zM362 500h12v1h-12zM364 501h11v1h-11zM366 502h10v1h-10zM367 503h10v1h-10zM369 504h9v1h-9zM369 505h9v1h-9zM990 505h6v1h-6zM368 506h9v1h-9zM983 506h7v1h-7zM367 507h9v1h-9zM976 507h7v1h-7zM365 508h9v1h-9zM969 508h8v1h-8zM363 509h10v1h-10zM962 509h9v1h-9zM361 510h10v1h-10zM956 510h9v1h-9zM357 511h12v1h-12zM947 511h11v1h-11zM357 512h10v1h-10zM936 512h14v1h-14zM357 513h7v1h-7zM711 513h36v1h-36zM917 513h24v1h-24zM357 514h2v1h-2zM709 514h42v1h-42zM858 514h71v1h-71zM707 515h48v1h-48zM848 515h22v1h-22zM706 516h52v1h-52zM844 516h12v1h-12zM706 517h19v1h-19zM746 517h16v1h-16zM841 517h8v1h-8zM705 518h12v1h-12zM752 518h15v1h-15zM838 518h7v1h-7zM704 519h9v1h-9zM758 519h16v1h-16zM834 519h8v1h-8zM704 520h7v1h-7zM764 520h23v1h-23zM812 520h26v1h-26zM703 521h7v1h-7zM770 521h63v1h-63zM703 522h6v1h-6zM780 522h36v1h-36zM702 523h6v1h-6zM702 524h5v1h-5zM702 525h4v1h-4zM701 526h5v1h-5zM701 527h4v1h-4zM701 528h5v1h-5zM701 529h5v1h-5zM702 530h5v1h-5zM702 531h5v1h-5zM703 532h5v1h-5zM703 533h6v1h-6zM704 534h5v1h-5zM704 535h6v1h-6zM705 536h6v1h-6zM705 537h7v1h-7zM706 538h6v1h-6zM706 539h7v1h-7zM707 540h6v1h-6zM707 541h7v1h-7zM708 542h7v1h-7zM709 543h6v1h-6zM710 544h6v1h-6zM710 545h6v1h-6zM711 546h6v1h-6zM711 547h6v1h-6zM711 548h6v1h-6zM712 549h5v1h-5zM712 550h5v1h-5zM712 551h6v1h-6zM713 552h5v1h-5zM713 553h5v1h-5zM713 554h5v1h-5zM714 555h4v1h-4zM714 556h5v1h-5zM714 557h5v1h-5zM715 558h4v1h-4zM715 559h4v1h-4zM715 560h4v1h-4zM715 561h4v1h-4zM714 562h5v1h-5zM714 563h4v1h-4zM714 564h4v1h-4zM713 565h5v1h-5zM713 566h4v1h-4zM713 567h4v1h-4zM712 568h5v1h-5zM712 569h4v1h-4zM712 570h4v1h-4zM711 571h5v1h-5zM711 572h4v1h-4zM711 573h4v1h-4zM710 574h5v1h-5zM710 575h4v1h-4zM709 576h5v1h-5zM709 577h4v1h-4zM708 578h5v1h-5zM708 579h4v1h-4zM707 580h4v1h-4zM706 581h5v1h-5zM706 582h4v1h-4zM705 583h5v1h-5zM705 584h4v1h-4zM704 585h5v1h-5zM704 586h4v1h-4zM703 587h5v1h-5zM555 588h20v1h-20zM703 588h4v1h-4zM539 589h45v1h-45zM702 589h5v1h-5zM532 590h18v1h-18zM579 590h11v1h-11zM702 590h4v1h-4zM529 591h10v1h-10zM585 591h9v1h-9zM701 591h4v1h-4zM528 592h6v1h-6zM589 592h9v1h-9zM701 592h4v1h-4zM526 593h5v1h-5zM592 593h10v1h-10zM700 593h4v1h-4zM525 594h4v1h-4zM594 594h13v1h-13zM700 594h4v1h-4zM524 595h3v1h-3zM597 595h16v1h-16zM699 595h4v1h-4zM523 596h3v1h-3zM600 596h18v1h-18zM699 596h3v1h-3zM522 597h3v1h-3zM603 597h19v1h-19zM698 597h4v1h-4zM521 598h3v1h-3zM606 598h19v1h-19zM698 598h3v1h-3zM520 599h3v1h-3zM610 599h18v1h-18zM697 599h4v1h-4zM520 600h2v1h-2zM613 600h18v1h-18zM697 600h3v1h-3zM519 601h2v1h-2zM615 601h19v1h-19zM696 601h4v1h-4zM518 602h3v1h-3zM617 602h19v1h-19zM696 602h3v1h-3zM517 603h3v1h-3zM620 603h19v1h-19zM695 603h4v1h-4zM517 604h2v1h-2zM622 604h19v1h-19zM695 604h3v1h-3zM357 605h3v1h-3zM516 605h2v1h-2zM624 605h19v1h-19zM694 605h4v1h-4zM357 606h7v1h-7zM515 606h3v1h-3zM626 606h20v1h-20zM694 606h3v1h-3zM357 607h10v1h-10zM514 607h3v1h-3zM628 607h20v1h-20zM693 607h4v1h-4zM357 608h13v1h-13zM513 608h3v1h-3zM630 608h21v1h-21zM693 608h4v1h-4zM357 609h15v1h-15zM512 609h3v1h-3zM632 609h21v1h-21zM692 609h4v1h-4zM360 610h13v1h-13zM511 610h3v1h-3zM634 610h21v1h-21zM692 610h4v1h-4zM362 611h13v1h-13zM510 611h4v1h-4zM635 611h22v1h-22zM692 611h3v1h-3z"/><path fill="#ffe700" d="M357 499h2v1h-2zM357 500h5v1h-5zM357 501h7v1h-7zM357 502h9v1h-9zM357 503h10v1h-10zM358 504h11v1h-11zM359 505h10v1h-10zM358 506h10v1h-10zM990 506h6v1h-6zM357 507h10v1h-10zM983 507h6v1h-6zM357 508h8v1h-8zM977 508h7v1h-7zM357 509h6v1h-6zM971 509h7v1h-7zM357 510h4v1h-4zM965 510h8v1h-8zM958 511h10v1h-10zM950 512h11v1h-11zM941 513h13v1h-13zM929 514h17v1h-17zM870 515h68v1h-68zM856 516h70v1h-70zM725 517h21v1h-21zM849 517h18v1h-18zM717 518h35v1h-35zM845 518h12v1h-12zM713 519h45v1h-45zM842 519h9v1h-9zM711 520h53v1h-53zM838 520h8v1h-8zM710 521h24v1h-24zM745 521h25v1h-25zM833 521h9v1h-9zM709 522h16v1h-16zM755 522h25v1h-25zM816 522h22v1h-22zM708 523h12v1h-12zM762 523h70v1h-70zM707 524h10v1h-10zM771 524h46v1h-46zM706 525h9v1h-9zM706 526h7v1h-7zM705 527h8v1h-8zM706 528h7v1h-7zM706 529h8v1h-8zM707 530h8v1h-8zM707 531h8v1h-8zM708 532h8v1h-8zM709 533h8v1h-8zM709 534h8v1h-8zM710 535h8v1h-8zM711 536h7v1h-7zM712 537h7v1h-7zM712 538h7v1h-7zM713 539h7v1h-7zM713 540h7v1h-7zM714 541h6v1h-6zM715 542h6v1h-6zM715 543h6v1h-6zM716 544h5v1h-5zM716 545h6v1h-6zM717 546h5v1h-5zM717 547h5v1h-5zM717 548h5v1h-5zM717 549h5v1h-5zM717 550h5v1h-5zM718 551h4v1h-4zM718 552h4v1h-4zM718 553h4v1h-4zM718 554h4v1h-4zM718 555h4v1h-4zM719 556h4v1h-4zM719 557h4v1h-4zM719 558h4v1h-4zM719 559h4v1h-4zM719 560h4v1h-4zM719 561h3v1h-3zM719 562h3v1h-3zM718 563h4v1h-4zM718 564h4v1h-4zM718 565h3v1h-3zM717 566h4v1h-4zM717 567h4v1h-4zM717 568h3v1h-3zM716 569h4v1h-4zM716 570h4v1h-4zM716 571h3v1h-3zM715 572h4v1h-4zM715 573h4v1h-4zM715 574h3v1h-3zM714 575h4v1h-4zM714 576h3v1h-3zM713 577h4v1h-4zM713 578h3v1h-3zM712 579h4v1h-4zM711 580h4v1h-4zM711 581h4v1h-4zM710 582h4v1h-4zM710 583h4v1h-4zM709 584h4v1h-4zM709 585h4v1h-4zM708 586h4v1h-4zM708 587h4v1h-4zM707 588h4v1h-4zM707 589h4v1h-4zM550 590h29v1h-29zM706 590h4v1h-4zM539 591h22v1h-22zM573 591h12v1h-12zM705 591h4v1h-4zM534 592h12v1h-12zM581 592h8v1h-8zM705 592h4v1h-4zM531 593h8v1h-8zM585 593h7v1h-7zM704 593h4v1h-4zM529 594h6v1h-6zM588 594h6v1h-6zM704 594h3v1h-3zM527 595h5v1h-5zM590 595h7v1h-7zM703 595h4v1h-4zM526 596h4v1h-4zM593 596h7v1h-7zM702 596h4v1h-4zM525 597h3v1h-3zM595 597h8v1h-8zM702 597h3v1h-3zM524 598h3v1h-3zM597 598h9v1h-9zM701 598h4v1h-4zM523 599h3v1h-3zM599 599h11v1h-11zM701 599h3v1h-3zM522 600h3v1h-3zM601 600h12v1h-12zM700 600h4v1h-4zM521 601h3v1h-3zM604 601h11v1h-11zM700 601h3v1h-3zM521 602h2v1h-2zM606 602h11v1h-11zM699 602h4v1h-4zM520 603h2v1h-2zM608 603h12v1h-12zM699 603h3v1h-3zM519 604h2v1h-2zM610 604h12v1h-12zM698 604h4v1h-4zM518 605h3v1h-3zM612 605h12v1h-12zM698 605h3v1h-3zM518 606h2v1h-2zM614 606h12v1h-12zM697 606h4v1h-4zM517 607h2v1h-2zM615 607h13v1h-13zM697 607h3v1h-3zM516 608h3v1h-3zM617 608h13v1h-13zM697 608h3v1h-3zM515 609h3v1h-3zM618 609h14v1h-14zM696 609h3v1h-3zM357 610h3v1h-3zM514 610h3v1h-3zM620 610h14v1h-14zM696 610h3v1h-3zM357 611h5v1h-5zM514 611h3v1h-3zM621 611h14v1h-14zM695 611h4v1h-4z"/><path fill="#ffd700" d="M357 504h1v1h-1zM357 505h2v1h-2zM357 506h1v1h-1zM989 507h7v1h-7zM984 508h6v1h-6zM978 509h7v1h-7zM973 510h8v1h-8zM968 511h8v1h-8zM961 512h9v1h-9zM954 513h10v1h-10zM946 514h12v1h-12zM938 515h14v1h-14zM926 516h19v1h-19zM867 517h69v1h-69zM857 518h64v1h-64zM851 519h15v1h-15zM846 520h13v1h-13zM734 521h11v1h-11zM842 521h11v1h-11zM725 522h30v1h-30zM838 522h10v1h-10zM720 523h42v1h-42zM832 523h12v1h-12zM717 524h54v1h-54zM817 524h21v1h-21zM715 525h116v1h-116zM713 526h21v1h-21zM752 526h69v1h-69zM713 527h17v1h-17zM766 527h42v1h-42zM713 528h16v1h-16zM714 529h14v1h-14zM715 530h13v1h-13zM715 531h13v1h-13zM716 532h11v1h-11zM717 533h10v1h-10zM717 534h10v1h-10zM718 535h9v1h-9zM718 536h9v1h-9zM719 537h8v1h-8zM719 538h8v1h-8zM720 539h7v1h-7zM720 540h7v1h-7zM720 541h7v1h-7zM721 542h6v1h-6zM721 543h6v1h-6zM721 544h6v1h-6zM722 545h5v1h-5zM722 546h5v1h-5zM722 547h5v1h-5zM722 548h5v1h-5zM722 549h5v1h-5zM722 550h4v1h-4zM722 551h4v1h-4zM722 552h4v1h-4zM722 553h4v1h-4zM722 554h4v1h-4zM722 555h4v1h-4zM723 556h3v1h-3zM723 557h3v1h-3zM723 558h3v1h-3zM723 559h3v1h-3zM723 560h3v1h-3zM722 561h4v1h-4zM722 562h4v1h-4zM722 563h3v1h-3zM722 564h3v1h-3zM721 565h4v1h-4zM721 566h3v1h-3zM721 567h3v1h-3zM720 568h4v1h-4zM720 569h3v1h-3zM720 570h3v1h-3zM719 571h3v1h-3zM719 572h3v1h-3zM719 573h3v1h-3zM718 574h3v1h-3zM718 575h3v1h-3zM717 576h4v1h-4zM717 577h3v1h-3zM716 578h4v1h-4zM716 579h3v1h-3zM715 580h4v1h-4zM715 581h3v1h-3zM714 582h4v1h-4zM714 583h3v1h-3zM713 584h4v1h-4zM713 585h3v1h-3zM712 586h4v1h-4zM712 587h3v1h-3zM711 588h4v1h-4zM711 589h3v1h-3zM710 590h4v1h-4zM561 591h12v1h-12zM709 591h4v1h-4zM546 592h35v1h-35zM709 592h3v1h-3zM539 593h13v1h-13zM578 593h7v1h-7zM708 593h4v1h-4zM535 594h9v1h-9zM582 594h6v1h-6zM707 594h4v1h-4zM532 595h7v1h-7zM585 595h5v1h-5zM707 595h3v1h-3zM530 596h6v1h-6zM587 596h6v1h-6zM706 596h4v1h-4zM528 597h5v1h-5zM589 597h6v1h-6zM705 597h4v1h-4zM527 598h4v1h-4zM591 598h6v1h-6zM705 598h3v1h-3zM526 599h3v1h-3zM593 599h6v1h-6zM704 599h4v1h-4zM525 600h3v1h-3zM595 600h6v1h-6zM704 600h3v1h-3zM524 601h3v1h-3zM597 601h7v1h-7zM703 601h3v1h-3zM523 602h3v1h-3zM599 602h7v1h-7zM703 602h3v1h-3zM522 603h3v1h-3zM601 603h7v1h-7zM702 603h3v1h-3zM521 604h3v1h-3zM602 604h8v1h-8zM702 604h3v1h-3zM521 605h2v1h-2zM604 605h8v1h-8zM701 605h3v1h-3zM520 606h2v1h-2zM606 606h8v1h-8zM701 606h3v1h-3zM519 607h3v1h-3zM607 607h8v1h-8zM700 607h3v1h-3zM519 608h2v1h-2zM609 608h8v1h-8zM700 608h3v1h-3zM518 609h2v1h-2zM610 609h8v1h-8zM699 609h3v1h-3zM517 610h3v1h-3zM611 610h9v1h-9zM699 610h3v1h-3zM517 611h2v1h-2zM612 611h9v1h-9zM699 611h3v1h-3z"/><path fill="#ffc700" d="M990 508h6v1h-6zM985 509h8v1h-8zM981 510h7v1h-7zM976 511h7v1h-7zM970 512h9v1h-9zM964 513h9v1h-9zM958 514h10v1h-10zM952 515h11v1h-11zM945 516h13v1h-13zM936 517h16v1h-16zM921 518h23v1h-23zM866 519h68v1h-68zM859 520h59v1h-59zM853 521h16v1h-16zM848 522h14v1h-14zM844 523h13v1h-13zM838 524h14v1h-14zM831 525h15v1h-15zM734 526h18v1h-18zM821 526h20v1h-20zM730 527h36v1h-36zM808 527h28v1h-28zM729 528h101v1h-101zM728 529h90v1h-90zM728 530h68v1h-68zM728 531h44v1h-44zM727 532h30v1h-30zM727 533h22v1h-22zM727 534h17v1h-17zM727 535h14v1h-14zM727 536h12v1h-12zM727 537h11v1h-11zM727 538h10v1h-10zM727 539h9v1h-9zM727 540h8v1h-8zM727 541h7v1h-7zM727 542h7v1h-7zM727 543h6v1h-6zM727 544h6v1h-6zM727 545h6v1h-6zM727 546h5v1h-5zM727 547h5v1h-5zM727 548h5v1h-5zM727 549h4v1h-4zM726 550h5v1h-5zM726 551h5v1h-5zM726 552h5v1h-5zM726 553h5v1h-5zM726 554h4v1h-4zM726 555h4v1h-4zM726 556h4v1h-4zM726 557h4v1h-4zM726 558h4v1h-4zM726 559h4v1h-4zM726 560h3v1h-3zM726 561h3v1h-3zM726 562h3v1h-3zM725 563h4v1h-4zM725 564h3v1h-3zM725 565h3v1h-3zM724 566h4v1h-4zM724 567h3v1h-3zM724 568h3v1h-3zM723 569h3v1h-3zM723 570h3v1h-3zM722 571h4v1h-4zM722 572h3v1h-3zM722 573h3v1h-3zM721 574h3v1h-3zM721 575h3v1h-3zM721 576h3v1h-3zM720 577h3v1h-3zM720 578h3v1h-3zM719 579h3v1h-3zM719 580h3v1h-3zM718 581h3v1h-3zM718 582h3v1h-3zM717 583h3v1h-3zM717 584h3v1h-3zM716 585h3v1h-3zM716 586h3v1h-3zM715 587h3v1h-3zM715 588h3v1h-3zM714 589h4v1h-4zM714 590h3v1h-3zM713 591h4v1h-4zM712 592h4v1h-4zM552 593h26v1h-26zM712 593h3v1h-3zM544 594h15v1h-15zM574 594h8v1h-8zM711 594h4v1h-4zM539 595h11v1h-11zM579 595h6v1h-6zM710 595h4v1h-4zM536 596h8v1h-8zM582 596h5v1h-5zM710 596h3v1h-3zM533 597h7v1h-7zM585 597h4v1h-4zM709 597h4v1h-4zM531 598h6v1h-6zM587 598h4v1h-4zM708 598h4v1h-4zM529 599h5v1h-5zM588 599h5v1h-5zM708 599h3v1h-3zM528 600h4v1h-4zM590 600h5v1h-5zM707 600h4v1h-4zM527 601h3v1h-3zM592 601h5v1h-5zM706 601h4v1h-4zM526 602h3v1h-3zM594 602h5v1h-5zM706 602h3v1h-3zM525 603h2v1h-2zM595 603h6v1h-6zM705 603h4v1h-4zM524 604h2v1h-2zM597 604h5v1h-5zM705 604h3v1h-3zM523 605h2v1h-2zM598 605h6v1h-6zM704 605h3v1h-3zM522 606h3v1h-3zM600 606h6v1h-6zM704 606h3v1h-3zM522 607h2v1h-2zM601 607h6v1h-6zM703 607h3v1h-3zM521 608h3v1h-3zM602 608h7v1h-7zM703 608h3v1h-3zM520 609h3v1h-3zM604 609h6v1h-6zM702 609h3v1h-3zM520 610h2v1h-2zM605 610h6v1h-6zM702 610h3v1h-3zM519 611h3v1h-3zM606 611h6v1h-6zM702 611h3v1h-3z"/><path fill="#ffb700" d="M993 509h3v1h-3zM988 510h8v1h-8zM983 511h8v1h-8zM979 512h7v1h-7zM973 513h9v1h-9zM968 514h9v1h-9zM963 515h9v1h-9zM958 516h10v1h-10zM952 517h11v1h-11zM944 518h14v1h-14zM934 519h17v1h-17zM918 520h27v1h-27zM869 521h68v1h-68zM862 522h67v1h-67zM857 523h44v1h-44zM852 524h16v1h-16zM846 525h16v1h-16zM841 526h15v1h-15zM836 527h15v1h-15zM830 528h16v1h-16zM818 529h23v1h-23zM796 530h40v1h-40zM772 531h57v1h-57zM757 532h63v1h-63zM749 533h60v1h-60zM744 534h55v1h-55zM741 535h49v1h-49zM739 536h43v1h-43zM738 537h35v1h-35zM737 538h27v1h-27zM736 539h22v1h-22zM735 540h18v1h-18zM734 541h15v1h-15zM734 542h13v1h-13zM733 543h11v1h-11zM733 544h10v1h-10zM733 545h8v1h-8zM732 546h8v1h-8zM732 547h7v1h-7zM732 548h6v1h-6zM731 549h7v1h-7zM731 550h6v1h-6zM731 551h6v1h-6zM731 552h5v1h-5zM731 553h5v1h-5zM730 554h5v1h-5zM730 555h5v1h-5zM730 556h4v1h-4zM730 557h4v1h-4zM730 558h4v1h-4zM730 559h4v1h-4zM729 560h4v1h-4zM729 561h4v1h-4zM729 562h4v1h-4zM729 563h3v1h-3zM728 564h4v1h-4zM728 565h3v1h-3zM728 566h3v1h-3zM727 567h4v1h-4zM727 568h3v1h-3zM726 569h4v1h-4zM726 570h3v1h-3zM726 571h3v1h-3zM725 572h3v1h-3zM725 573h3v1h-3zM724 574h3v1h-3zM724 575h3v1h-3zM724 576h2v1h-2zM723 577h3v1h-3zM723 578h2v1h-2zM722 579h3v1h-3zM722 580h2v1h-2zM721 581h3v1h-3zM721 582h3v1h-3zM720 583h3v1h-3zM720 584h3v1h-3zM719 585h3v1h-3zM719 586h3v1h-3zM718 587h3v1h-3zM718 588h3v1h-3zM718 589h3v1h-3zM717 590h3v1h-3zM717 591h3v1h-3zM716 592h3v1h-3zM715 593h3v1h-3zM559 594h15v1h-15zM715 594h3v1h-3zM550 595h29v1h-29zM714 595h3v1h-3zM544 596h12v1h-12zM576 596h6v1h-6zM713 596h4v1h-4zM540 597h10v1h-10zM579 597h6v1h-6zM713 597h3v1h-3zM537 598h8v1h-8zM582 598h5v1h-5zM712 598h3v1h-3zM534 599h7v1h-7zM584 599h4v1h-4zM711 599h4v1h-4zM532 600h6v1h-6zM586 600h4v1h-4zM711 600h3v1h-3zM530 601h5v1h-5zM588 601h4v1h-4zM710 601h3v1h-3zM529 602h4v1h-4zM589 602h5v1h-5zM709 602h4v1h-4zM527 603h4v1h-4zM591 603h4v1h-4zM709 603h3v1h-3zM526 604h3v1h-3zM592 604h5v1h-5zM708 604h3v1h-3zM525 605h3v1h-3zM593 605h5v1h-5zM707 605h4v1h-4zM525 606h2v1h-2zM595 606h5v1h-5zM707 606h3v1h-3zM524 607h3v1h-3zM596 607h5v1h-5zM706 607h4v1h-4zM524 608h2v1h-2zM597 608h5v1h-5zM706 608h3v1h-3zM523 609h3v1h-3zM598 609h6v1h-6zM705 609h3v1h-3zM522 610h3v1h-3zM600 610h5v1h-5zM705 610h3v1h-3zM522 611h3v1h-3zM600 611h6v1h-6zM705 611h3v1h-3z"/><path fill="#ffa700" d="M991 511h5v1h-5zM986 512h10v1h-10zM982 513h7v1h-7zM977 514h8v1h-8zM972 515h9v1h-9zM968 516h9v1h-9zM963 517h10v1h-10zM958 518h11v1h-11zM951 519h13v1h-13zM945 520h14v1h-14zM937 521h17v1h-17zM929 522h20v1h-20zM901 523h42v1h-42zM868 524h69v1h-69zM862 525h67v1h-67zM856 526h34v1h-34zM851 527h17v1h-17zM846 528h16v1h-16zM841 529h15v1h-15zM836 530h15v1h-15zM829 531h17v1h-17zM820 532h21v1h-21zM809 533h27v1h-27zM799 534h31v1h-31zM790 535h33v1h-33zM782 536h33v1h-33zM773 537h35v1h-35zM764 538h38v1h-38zM758 539h38v1h-38zM753 540h37v1h-37zM749 541h35v1h-35zM747 542h31v1h-31zM744 543h28v1h-28zM743 544h23v1h-23zM741 545h20v1h-20zM740 546h18v1h-18zM739 547h16v1h-16zM738 548h14v1h-14zM738 549h12v1h-12zM737 550h11v1h-11zM737 551h9v1h-9zM736 552h9v1h-9zM736 553h8v1h-8zM735 554h7v1h-7zM735 555h7v1h-7zM734 556h7v1h-7zM734 557h6v1h-6zM734 558h5v1h-5zM734 559h5v1h-5zM733 560h5v1h-5zM733 561h5v1h-5zM733 562h4v1h-4zM732 563h5v1h-5zM732 564h4v1h-4zM731 565h5v1h-5zM731 566h4v1h-4zM731 567h3v1h-3zM730 568h4v1h-4zM730 569h3v1h-3zM729 570h4v1h-4zM729 571h3v1h-3zM728 572h4v1h-4zM728 573h3v1h-3zM727 574h4v1h-4zM727 575h3v1h-3zM726 576h4v1h-4zM726 577h3v1h-3zM725 578h3v1h-3zM725 579h3v1h-3zM724 580h3v1h-3zM724 581h3v1h-3zM724 582h2v1h-2zM723 583h3v1h-3zM723 584h2v1h-2zM722 585h3v1h-3zM722 586h3v1h-3zM721 587h3v1h-3zM721 588h3v1h-3zM721 589h2v1h-2zM720 590h3v1h-3zM720 591h3v1h-3zM719 592h3v1h-3zM718 593h3v1h-3zM718 594h3v1h-3zM717 595h3v1h-3zM556 596h20v1h-20zM717 596h3v1h-3zM550 597h29v1h-29zM716 597h3v1h-3zM545 598h12v1h-12zM575 598h7v1h-7zM715 598h4v1h-4zM541 599h10v1h-10zM579 599h5v1h-5zM715 599h3v1h-3zM538 600h8v1h-8zM581 600h5v1h-5zM714 600h3v1h-3zM535 601h7v1h-7zM584 601h4v1h-4zM713 601h4v1h-4zM533 602h6v1h-6zM585 602h4v1h-4zM713 602h3v1h-3zM531 603h5v1h-5zM587 603h4v1h-4zM712 603h3v1h-3zM529 604h5v1h-5zM588 604h4v1h-4zM711 604h4v1h-4zM528 605h4v1h-4zM589 605h4v1h-4zM711 605h3v1h-3zM527 606h4v1h-4zM591 606h4v1h-4zM710 606h4v1h-4zM527 607h3v1h-3zM592 607h4v1h-4zM710 607h3v1h-3zM526 608h4v1h-4zM593 608h4v1h-4zM709 608h3v1h-3zM526 609h3v1h-3zM594 609h4v1h-4zM708 609h4v1h-4zM525 610h3v1h-3zM595 610h5v1h-5zM708 610h3v1h-3zM525 611h3v1h-3zM596 611h4v1h-4zM708 611h3v1h-3z"/><path fill="#ff9700" d="M989 513h7v1h-7zM985 514h9v1h-9zM981 515h8v1h-8zM977 516h8v1h-8zM973 517h9v1h-9zM969 518h9v1h-9zM964 519h10v1h-10zM959 520h11v1h-11zM954 521h12v1h-12zM949 522h13v1h-13zM943 523h15v1h-15zM937 524h17v1h-17zM929 525h20v1h-20zM890 526h53v1h-53zM868 527h69v1h-69zM862 528h67v1h-67zM856 529h34v1h-34zM851 530h17v1h-17zM846 531h16v1h-16zM841 532h15v1h-15zM836 533h15v1h-15zM830 534h16v1h-16zM823 535h18v1h-18zM815 536h21v1h-21zM808 537h22v1h-22zM802 538h22v1h-22zM796 539h22v1h-22zM790 540h23v1h-23zM784 541h25v1h-25zM778 542h27v1h-27zM772 543h28v1h-28zM766 544h29v1h-29zM761 545h30v1h-30zM758 546h28v1h-28zM755 547h27v1h-27zM752 548h26v1h-26zM750 549h23v1h-23zM748 550h21v1h-21zM746 551h20v1h-20zM745 552h17v1h-17zM744 553h15v1h-15zM742 554h15v1h-15zM742 555h13v1h-13zM741 556h12v1h-12zM740 557h11v1h-11zM739 558h10v1h-10zM739 559h9v1h-9zM738 560h8v1h-8zM738 561h7v1h-7zM737 562h7v1h-7zM737 563h6v1h-6zM736 564h6v1h-6zM736 565h5v1h-5zM735 566h5v1h-5zM734 567h5v1h-5zM734 568h5v1h-5zM733 569h5v1h-5zM733 570h4v1h-4zM732 571h4v1h-4zM732 572h4v1h-4zM731 573h4v1h-4zM731 574h3v1h-3zM730 575h4v1h-4zM730 576h3v1h-3zM729 577h3v1h-3zM728 578h4v1h-4zM728 579h3v1h-3zM727 580h4v1h-4zM727 581h3v1h-3zM726 582h4v1h-4zM726 583h3v1h-3zM725 584h3v1h-3zM725 585h3v1h-3zM725 586h3v1h-3zM724 587h3v1h-3zM724 588h3v1h-3zM723 589h3v1h-3zM723 590h3v1h-3zM723 591h2v1h-2zM722 592h3v1h-3zM721 593h3v1h-3zM721 594h3v1h-3zM720 595h3v1h-3zM720 596h3v1h-3zM719 597h3v1h-3zM557 598h18v1h-18zM719 598h3v1h-3zM551 599h28v1h-28zM718 599h3v1h-3zM546 600h11v1h-11zM575 600h6v1h-6zM717 600h4v1h-4zM542 601h9v1h-9zM579 601h5v1h-5zM717 601h3v1h-3zM539 602h8v1h-8zM581 602h4v1h-4zM716 602h3v1h-3zM536 603h7v1h-7zM583 603h4v1h-4zM715 603h4v1h-4zM534 604h6v1h-6zM584 604h4v1h-4zM715 604h3v1h-3zM532 605h6v1h-6zM585 605h4v1h-4zM714 605h4v1h-4zM531 606h5v1h-5zM587 606h4v1h-4zM714 606h3v1h-3zM530 607h5v1h-5zM588 607h4v1h-4zM713 607h3v1h-3zM530 608h4v1h-4zM589 608h4v1h-4zM712 608h4v1h-4zM529 609h4v1h-4zM590 609h4v1h-4zM712 609h3v1h-3zM528 610h4v1h-4zM591 610h4v1h-4zM711 610h4v1h-4zM528 611h4v1h-4zM591 611h5v1h-5zM711 611h3v1h-3z"/><path fill="#ff8700" d="M994 514h2v1h-2zM989 515h7v1h-7zM985 516h10v1h-10zM982 517h9v1h-9zM978 518h9v1h-9zM974 519h10v1h-10zM970 520h10v1h-10zM966 521h11v1h-11zM962 522h11v1h-11zM958 523h12v1h-12zM954 524h12v1h-12zM949 525h13v1h-13zM943 526h15v1h-15zM937 527h17v1h-17zM929 528h20v1h-20zM890 529h53v1h-53zM868 530h69v1h-69zM862 531h67v1h-67zM856 532h34v1h-34zM851 533h17v1h-17zM846 534h16v1h-16zM841 535h15v1h-15zM836 536h15v1h-15zM830 537h16v1h-16zM824 538h17v1h-17zM818 539h17v1h-17zM813 540h18v1h-18zM809 541h19v1h-19zM805 542h20v1h-20zM800 543h22v1h-22zM795 544h24v1h-24zM791 545h24v1h-24zM786 546h25v1h-25zM782 547h25v1h-25zM778 548h25v1h-25zM773 549h26v1h-26zM769 550h26v1h-26zM766 551h25v1h-25zM762 552h26v1h-26zM759 553h25v1h-25zM757 554h23v1h-23zM755 555h21v1h-21zM753 556h19v1h-19zM751 557h18v1h-18zM749 558h17v1h-17zM748 559h15v1h-15zM746 560h15v1h-15zM745 561h13v1h-13zM744 562h12v1h-12zM743 563h11v1h-11zM742 564h11v1h-11zM741 565h10v1h-10zM740 566h9v1h-9zM739 567h9v1h-9zM739 568h7v1h-7zM738 569h7v1h-7zM737 570h6v1h-6zM736 571h6v1h-6zM736 572h5v1h-5zM735 573h5v1h-5zM734 574h5v1h-5zM734 575h4v1h-4zM733 576h4v1h-4zM732 577h5v1h-5zM732 578h4v1h-4zM731 579h4v1h-4zM731 580h3v1h-3zM730 581h4v1h-4zM730 582h3v1h-3zM729 583h3v1h-3zM728 584h4v1h-4zM728 585h3v1h-3zM728 586h3v1h-3zM727 587h3v1h-3zM727 588h3v1h-3zM726 589h3v1h-3zM726 590h3v1h-3zM725 591h4v1h-4zM725 592h3v1h-3zM724 593h4v1h-4zM724 594h3v1h-3zM723 595h4v1h-4zM723 596h3v1h-3zM722 597h3v1h-3zM722 598h3v1h-3zM721 599h3v1h-3zM557 600h18v1h-18zM721 600h3v1h-3zM551 601h28v1h-28zM720 601h3v1h-3zM547 602h11v1h-11zM575 602h6v1h-6zM719 602h4v1h-4zM543 603h9v1h-9zM578 603h5v1h-5zM719 603h3v1h-3zM540 604h9v1h-9zM580 604h4v1h-4zM718 604h3v1h-3zM538 605h8v1h-8zM581 605h4v1h-4zM718 605h3v1h-3zM536 606h8v1h-8zM582 606h5v1h-5zM717 606h3v1h-3zM535 607h7v1h-7zM584 607h4v1h-4zM716 607h4v1h-4zM534 608h7v1h-7zM585 608h4v1h-4zM716 608h3v1h-3zM533 609h6v1h-6zM586 609h4v1h-4zM715 609h4v1h-4zM532 610h6v1h-6zM587 610h4v1h-4zM715 610h3v1h-3zM532 611h5v1h-5zM587 611h4v1h-4zM714 611h4v1h-4z"/><path fill="#ff7800" d="M995 516h1v1h-1zM991 517h5v1h-5zM987 518h9v1h-9zM984 519h10v1h-10zM980 520h10v1h-10zM977 521h10v1h-10zM973 522h10v1h-10zM970 523h10v1h-10zM966 524h11v1h-11zM962 525h11v1h-11zM958 526h12v1h-12zM954 527h12v1h-12zM949 528h13v1h-13zM943 529h15v1h-15zM937 530h17v1h-17zM929 531h21v1h-21zM890 532h55v1h-55zM868 533h71v1h-71zM862 534h68v1h-68zM856 535h58v1h-58zM851 536h18v1h-18zM846 537h16v1h-16zM841 538h16v1h-16zM835 539h16v1h-16zM831 540h16v1h-16zM828 541h15v1h-15zM825 542h16v1h-16zM822 543h17v1h-17zM819 544h18v1h-18zM815 545h19v1h-19zM811 546h21v1h-21zM807 547h22v1h-22zM803 548h23v1h-23zM799 549h24v1h-24zM795 550h25v1h-25zM791 551h25v1h-25zM788 552h25v1h-25zM784 553h24v1h-24zM780 554h24v1h-24zM776 555h24v1h-24zM772 556h24v1h-24zM769 557h23v1h-23zM766 558h23v1h-23zM763 559h22v1h-22zM761 560h20v1h-20zM758 561h20v1h-20zM756 562h18v1h-18zM754 563h17v1h-17zM753 564h15v1h-15zM751 565h14v1h-14zM749 566h14v1h-14zM748 567h12v1h-12zM746 568h12v1h-12zM745 569h11v1h-11zM743 570h11v1h-11zM742 571h10v1h-10zM741 572h10v1h-10zM740 573h9v1h-9zM739 574h9v1h-9zM738 575h9v1h-9zM737 576h8v1h-8zM737 577h7v1h-7zM736 578h6v1h-6zM735 579h6v1h-6zM734 580h6v1h-6zM734 581h5v1h-5zM733 582h5v1h-5zM732 583h5v1h-5zM732 584h4v1h-4zM731 585h4v1h-4zM731 586h4v1h-4zM730 587h4v1h-4zM730 588h4v1h-4zM729 589h4v1h-4zM729 590h4v1h-4zM729 591h3v1h-3zM728 592h4v1h-4zM728 593h3v1h-3zM727 594h4v1h-4zM727 595h3v1h-3zM726 596h3v1h-3zM725 597h4v1h-4zM725 598h3v1h-3zM724 599h4v1h-4zM724 600h3v1h-3zM723 601h4v1h-4zM558 602h17v1h-17zM723 602h3v1h-3zM552 603h26v1h-26zM722 603h4v1h-4zM549 604h13v1h-13zM572 604h8v1h-8zM721 604h4v1h-4zM546 605h11v1h-11zM575 605h6v1h-6zM721 605h3v1h-3zM544 606h10v1h-10zM577 606h5v1h-5zM720 606h4v1h-4zM542 607h9v1h-9zM579 607h5v1h-5zM720 607h3v1h-3zM541 608h8v1h-8zM580 608h5v1h-5zM719 608h4v1h-4zM539 609h8v1h-8zM581 609h5v1h-5zM719 609h3v1h-3zM538 610h8v1h-8zM583 610h4v1h-4zM718 610h4v1h-4zM537 611h7v1h-7zM583 611h4v1h-4zM718 611h4v1h-4z"/><path fill="#ff6800" d="M994 519h2v1h-2zM990 520h6v1h-6zM987 521h9v1h-9zM983 522h11v1h-11zM980 523h10v1h-10zM977 524h10v1h-10zM973 525h10v1h-10zM970 526h10v1h-10zM966 527h11v1h-11zM962 528h11v1h-11zM958 529h12v1h-12zM954 530h13v1h-13zM950 531h13v1h-13zM945 532h15v1h-15zM939 533h17v1h-17zM930 534h22v1h-22zM914 535h33v1h-33zM869 536h73v1h-73zM862 537h74v1h-74zM857 538h72v1h-72zM851 539h20v1h-20zM847 540h17v1h-17zM843 541h16v1h-16zM841 542h15v1h-15zM839 543h14v1h-14zM837 544h14v1h-14zM834 545h15v1h-15zM832 546h15v1h-15zM829 547h16v1h-16zM826 548h17v1h-17zM823 549h17v1h-17zM820 550h18v1h-18zM816 551h20v1h-20zM813 552h21v1h-21zM808 553h23v1h-23zM804 554h24v1h-24zM800 555h25v1h-25zM796 556h26v1h-26zM792 557h26v1h-26zM789 558h25v1h-25zM785 559h25v1h-25zM781 560h25v1h-25zM778 561h24v1h-24zM774 562h24v1h-24zM771 563h23v1h-23zM768 564h22v1h-22zM765 565h21v1h-21zM763 566h19v1h-19zM760 567h18v1h-18zM758 568h16v1h-16zM756 569h15v1h-15zM754 570h14v1h-14zM752 571h15v1h-15zM751 572h14v1h-14zM749 573h15v1h-15zM748 574h15v1h-15zM747 575h14v1h-14zM745 576h15v1h-15zM744 577h14v1h-14zM742 578h14v1h-14zM741 579h14v1h-14zM740 580h13v1h-13zM739 581h11v1h-11zM738 582h10v1h-10zM737 583h9v1h-9zM736 584h8v1h-8zM735 585h7v1h-7zM735 586h6v1h-6zM734 587h6v1h-6zM734 588h5v1h-5zM733 589h6v1h-6zM733 590h5v1h-5zM732 591h5v1h-5zM732 592h4v1h-4zM731 593h5v1h-5zM731 594h4v1h-4zM730 595h4v1h-4zM729 596h5v1h-5zM729 597h4v1h-4zM728 598h4v1h-4zM728 599h4v1h-4zM727 600h4v1h-4zM727 601h4v1h-4zM726 602h4v1h-4zM726 603h3v1h-3zM562 604h10v1h-10zM725 604h4v1h-4zM557 605h18v1h-18zM724 605h4v1h-4zM554 606h23v1h-23zM724 606h4v1h-4zM551 607h28v1h-28zM723 607h4v1h-4zM549 608h13v1h-13zM572 608h8v1h-8zM723 608h4v1h-4zM547 609h11v1h-11zM575 609h6v1h-6zM722 609h4v1h-4zM546 610h9v1h-9zM577 610h6v1h-6zM722 610h4v1h-4zM544 611h9v1h-9zM578 611h5v1h-5zM722 611h3v1h-3z"/><path fill="#ff5800" d="M994 522h2v1h-2zM990 523h6v1h-6zM987 524h9v1h-9zM983 525h11v1h-11zM980 526h10v1h-10zM977 527h10v1h-10zM973 528h10v1h-10zM970 529h10v1h-10zM967 530h10v1h-10zM963 531h12v1h-12zM960 532h12v1h-12zM956 533h13v1h-13zM952 534h14v1h-14zM947 535h16v1h-16zM942 536h18v1h-18zM936 537h21v1h-21zM929 538h24v1h-24zM871 539h78v1h-78zM864 540h81v1h-81zM859 541h80v1h-80zM856 542h20v1h-20zM891 542h40v1h-40zM853 543h15v1h-15zM851 544h13v1h-13zM849 545h12v1h-12zM847 546h12v1h-12zM845 547h12v1h-12zM843 548h13v1h-13zM840 549h14v1h-14zM838 550h14v1h-14zM836 551h14v1h-14zM834 552h14v1h-14zM831 553h15v1h-15zM828 554h16v1h-16zM825 555h17v1h-17zM822 556h18v1h-18zM818 557h20v1h-20zM814 558h21v1h-21zM810 559h23v1h-23zM806 560h25v1h-25zM802 561h27v1h-27zM798 562h29v1h-29zM794 563h31v1h-31zM790 564h33v1h-33zM786 565h34v1h-34zM782 566h34v1h-34zM778 567h33v1h-33zM774 568h30v1h-30zM771 569h26v1h-26zM768 570h25v1h-25zM767 571h23v1h-23zM765 572h24v1h-24zM764 573h24v1h-24zM763 574h24v1h-24zM761 575h25v1h-25zM760 576h24v1h-24zM758 577h25v1h-25zM756 578h26v1h-26zM755 579h26v1h-26zM753 580h27v1h-27zM750 581h28v1h-28zM748 582h28v1h-28zM746 583h28v1h-28zM744 584h28v1h-28zM742 585h27v1h-27zM741 586h26v1h-26zM740 587h24v1h-24zM739 588h22v1h-22zM739 589h20v1h-20zM738 590h18v1h-18zM737 591h16v1h-16zM736 592h14v1h-14zM736 593h11v1h-11zM735 594h10v1h-10zM734 595h9v1h-9zM734 596h7v1h-7zM733 597h7v1h-7zM732 598h7v1h-7zM732 599h6v1h-6zM731 600h6v1h-6zM731 601h5v1h-5zM730 602h5v1h-5zM729 603h5v1h-5zM729 604h5v1h-5zM728 605h5v1h-5zM728 606h4v1h-4zM727 607h5v1h-5zM562 608h10v1h-10zM727 608h4v1h-4zM558 609h17v1h-17zM726 609h5v1h-5zM555 610h22v1h-22zM726 610h4v1h-4zM553 611h25v1h-25zM725 611h5v1h-5z"/><path fill="#ff4800" d="M994 525h2v1h-2zM990 526h6v1h-6zM987 527h9v1h-9zM983 528h11v1h-11zM980 529h10v1h-10zM977 530h10v1h-10zM975 531h10v1h-10zM972 532h11v1h-11zM969 533h12v1h-12zM966 534h13v1h-13zM963 535h13v1h-13zM960 536h14v1h-14zM957 537h15v1h-15zM953 538h16v1h-16zM949 539h17v1h-17zM945 540h19v1h-19zM939 541h21v1h-21zM876 542h15v1h-15zM931 542h26v1h-26zM868 543h85v1h-85zM864 544h84v1h-84zM861 545h80v1h-80zM859 546h16v1h-16zM893 546h39v1h-39zM857 547h14v1h-14zM856 548h12v1h-12zM854 549h12v1h-12zM852 550h12v1h-12zM850 551h12v1h-12zM848 552h12v1h-12zM846 553h13v1h-13zM844 554h13v1h-13zM842 555h13v1h-13zM840 556h13v1h-13zM838 557h13v1h-13zM835 558h14v1h-14zM833 559h14v1h-14zM831 560h14v1h-14zM829 561h15v1h-15zM827 562h15v1h-15zM825 563h16v1h-16zM823 564h16v1h-16zM820 565h18v1h-18zM816 566h21v1h-21zM811 567h25v1h-25zM804 568h31v1h-31zM797 569h37v1h-37zM793 570h40v1h-40zM790 571h42v1h-42zM789 572h42v1h-42zM788 573h41v1h-41zM787 574h41v1h-41zM786 575h40v1h-40zM784 576h41v1h-41zM783 577h40v1h-40zM782 578h39v1h-39zM781 579h38v1h-38zM780 580h38v1h-38zM778 581h38v1h-38zM776 582h39v1h-39zM774 583h39v1h-39zM772 584h40v1h-40zM769 585h42v1h-42zM767 586h43v1h-43zM764 587h44v1h-44zM761 588h46v1h-46zM759 589h47v1h-47zM756 590h48v1h-48zM753 591h50v1h-50zM750 592h52v1h-52zM747 593h54v1h-54zM745 594h54v1h-54zM743 595h55v1h-55zM741 596h56v1h-56zM740 597h55v1h-55zM739 598h55v1h-55zM738 599h54v1h-54zM737 600h53v1h-53zM736 601h51v1h-51zM735 602h46v1h-46zM734 603h36v1h-36zM734 604h19v1h-19zM733 605h11v1h-11zM732 606h9v1h-9zM732 607h8v1h-8zM731 608h7v1h-7zM731 609h6v1h-6zM730 610h6v1h-6zM730 611h6v1h-6z"/><path fill="#ff3800" d="M994 528h2v1h-2zM990 529h6v1h-6zM987 530h9v1h-9zM985 531h11v1h-11zM983 532h11v1h-11zM981 533h11v1h-11zM979 534h11v1h-11zM976 535h12v1h-12zM974 536h12v1h-12zM972 537h12v1h-12zM969 538h13v1h-13zM966 539h14v1h-14zM964 540h14v1h-14zM960 541h16v1h-16zM957 542h16v1h-16zM953 543h17v1h-17zM948 544h19v1h-19zM941 545h23v1h-23zM875 546h18v1h-18zM932 546h28v1h-28zM871 547h84v1h-84zM868 548h81v1h-81zM866 549h75v1h-75zM864 550h68v1h-68zM862 551h47v1h-47zM860 552h17v1h-17zM859 553h14v1h-14zM857 554h14v1h-14zM855 555h13v1h-13zM853 556h13v1h-13zM851 557h13v1h-13zM849 558h13v1h-13zM847 559h13v1h-13zM845 560h13v1h-13zM844 561h12v1h-12zM842 562h12v1h-12zM841 563h11v1h-11zM839 564h12v1h-12zM838 565h11v1h-11zM837 566h11v1h-11zM836 567h10v1h-10zM835 568h10v1h-10zM834 569h10v1h-10zM833 570h10v1h-10zM832 571h10v1h-10zM831 572h10v1h-10zM829 573h11v1h-11zM828 574h11v1h-11zM826 575h12v1h-12zM825 576h12v1h-12zM823 577h13v1h-13zM821 578h15v1h-15zM819 579h16v1h-16zM818 580h16v1h-16zM816 581h18v1h-18zM815 582h18v1h-18zM813 583h19v1h-19zM812 584h20v1h-20zM811 585h20v1h-20zM810 586h21v1h-21zM808 587h22v1h-22zM807 588h23v1h-23zM806 589h23v1h-23zM804 590h25v1h-25zM803 591h25v1h-25zM802 592h26v1h-26zM801 593h26v1h-26zM799 594h27v1h-27zM798 595h28v1h-28zM797 596h28v1h-28zM795 597h29v1h-29zM794 598h30v1h-30zM792 599h31v1h-31zM790 600h32v1h-32zM787 601h35v1h-35zM781 602h40v1h-40zM770 603h50v1h-50zM753 604h66v1h-66zM744 605h74v1h-74zM741 606h77v1h-77zM740 607h77v1h-77zM738 608h78v1h-78zM737 609h78v1h-78zM736 610h78v1h-78zM736 611h78v1h-78z"/><path fill="#ff2800" d="M994 532h2v1h-2zM992 533h4v1h-4zM990 534h6v1h-6zM988 535h8v1h-8zM986 536h10v1h-10zM984 537h12v1h-12zM982 538h14v1h-14zM980 539h12v1h-12zM978 540h12v1h-12zM976 541h12v1h-12zM973 542h13v1h-13zM970 543h14v1h-14zM967 544h15v1h-15zM964 545h16v1h-16zM960 546h17v1h-17zM955 547h19v1h-19zM949 548h21v1h-21zM941 549h25v1h-25zM932 550h29v1h-29zM909 551h46v1h-46zM877 552h70v1h-70zM873 553h64v1h-64zM871 554h54v1h-54zM868 555h45v1h-45zM866 556h36v1h-36zM864 557h23v1h-23zM862 558h17v1h-17zM860 559h14v1h-14zM858 560h13v1h-13zM856 561h12v1h-12zM854 562h12v1h-12zM852 563h12v1h-12zM851 564h11v1h-11zM849 565h11v1h-11zM848 566h10v1h-10zM846 567h11v1h-11zM845 568h10v1h-10zM844 569h10v1h-10zM843 570h9v1h-9zM842 571h9v1h-9zM841 572h9v1h-9zM840 573h8v1h-8zM839 574h8v1h-8zM838 575h8v1h-8zM837 576h8v1h-8zM836 577h8v1h-8zM836 578h7v1h-7zM835 579h7v1h-7zM834 580h7v1h-7zM834 581h6v1h-6zM833 582h7v1h-7zM832 583h7v1h-7zM832 584h7v1h-7zM831 585h7v1h-7zM831 586h7v1h-7zM830 587h7v1h-7zM830 588h7v1h-7zM829 589h7v1h-7zM829 590h7v1h-7zM828 591h7v1h-7zM828 592h7v1h-7zM827 593h7v1h-7zM826 594h8v1h-8zM826 595h8v1h-8zM825 596h8v1h-8zM824 597h9v1h-9zM824 598h9v1h-9zM823 599h9v1h-9zM822 600h10v1h-10zM822 601h10v1h-10zM821 602h10v1h-10zM820 603h11v1h-11zM819 604h12v1h-12zM818 605h12v1h-12zM818 606h12v1h-12zM817 607h13v1h-13zM816 608h13v1h-13zM815 609h14v1h-14zM814 610h15v1h-15zM814 611h14v1h-14z"/><path fill="#ff1800" d="M992 539h4v1h-4zM990 540h6v1h-6zM988 541h8v1h-8zM986 542h10v1h-10zM984 543h12v1h-12zM982 544h14v1h-14zM980 545h14v1h-14zM977 546h14v1h-14zM974 547h14v1h-14zM970 548h16v1h-16zM966 549h17v1h-17zM961 550h19v1h-19zM955 551h21v1h-21zM947 552h25v1h-25zM937 553h30v1h-30zM925 554h35v1h-35zM913 555h41v1h-41zM902 556h48v1h-48zM887 557h61v1h-61zM879 558h66v1h-66zM874 559h69v1h-69zM871 560h70v1h-70zM868 561h71v1h-71zM866 562h70v1h-70zM864 563h67v1h-67zM862 564h18v1h-18zM891 564h34v1h-34zM860 565h14v1h-14zM858 566h13v1h-13zM857 567h11v1h-11zM855 568h11v1h-11zM854 569h10v1h-10zM852 570h11v1h-11zM851 571h10v1h-10zM850 572h10v1h-10zM848 573h11v1h-11zM847 574h10v1h-10zM846 575h10v1h-10zM845 576h9v1h-9zM844 577h9v1h-9zM843 578h9v1h-9zM842 579h8v1h-8zM841 580h8v1h-8zM840 581h8v1h-8zM840 582h7v1h-7zM839 583h7v1h-7zM839 584h6v1h-6zM838 585h6v1h-6zM838 586h5v1h-5zM837 587h6v1h-6zM837 588h5v1h-5zM836 589h5v1h-5zM836 590h5v1h-5zM835 591h5v1h-5zM835 592h5v1h-5zM834 593h5v1h-5zM834 594h5v1h-5zM834 595h4v1h-4zM833 596h5v1h-5zM833 597h5v1h-5zM833 598h4v1h-4zM832 599h5v1h-5zM832 600h5v1h-5zM832 601h4v1h-4zM831 602h5v1h-5zM831 603h5v1h-5zM831 604h4v1h-4zM830 605h5v1h-5zM830 606h5v1h-5zM830 607h5v1h-5zM829 608h5v1h-5zM829 609h5v1h-5zM829 610h5v1h-5zM828 611h6v1h-6z"/><path fill="#ff0800" d="M994 545h2v1h-2zM991 546h5v1h-5zM988 547h8v1h-8zM986 548h10v1h-10zM983 549h13v1h-13zM980 550h16v1h-16zM976 551h20v1h-20zM972 552h20v1h-20zM967 553h22v1h-22zM960 554h25v1h-25zM954 555h28v1h-28zM950 556h28v1h-28zM948 557h28v1h-28zM945 558h29v1h-29zM943 559h29v1h-29zM941 560h29v1h-29zM939 561h29v1h-29zM936 562h31v1h-31zM931 563h33v1h-33zM880 564h11v1h-11zM925 564h37v1h-37zM874 565h86v1h-86zM871 566h87v1h-87zM868 567h87v1h-87zM866 568h86v1h-86zM864 569h86v1h-86zM863 570h83v1h-83zM861 571h16v1h-16zM888 571h55v1h-55zM860 572h14v1h-14zM893 572h45v1h-45zM859 573h13v1h-13zM898 573h35v1h-35zM857 574h13v1h-13zM903 574h23v1h-23zM856 575h12v1h-12zM854 576h12v1h-12zM853 577h12v1h-12zM852 578h11v1h-11zM850 579h12v1h-12zM849 580h11v1h-11zM848 581h11v1h-11zM847 582h10v1h-10zM846 583h10v1h-10zM845 584h9v1h-9zM844 585h9v1h-9zM843 586h8v1h-8zM843 587h7v1h-7zM842 588h7v1h-7zM841 589h7v1h-7zM841 590h6v1h-6zM840 591h6v1h-6zM840 592h5v1h-5zM839 593h5v1h-5zM839 594h5v1h-5zM838 595h5v1h-5zM838 596h4v1h-4zM838 597h4v1h-4zM837 598h4v1h-4zM837 599h4v1h-4zM837 600h4v1h-4zM836 601h4v1h-4zM836 602h4v1h-4zM836 603h3v1h-3zM835 604h4v1h-4zM835 605h4v1h-4zM835 606h3v1h-3zM835 607h3v1h-3zM834 608h4v1h-4zM834 609h3v1h-3zM834 610h3v1h-3zM834 611h3v1h-3z"/><path fill="#f50000" d="M992 552h4v1h-4zM989 553h7v1h-7zM985 554h11v1h-11zM982 555h14v1h-14zM978 556h18v1h-18zM976 557h20v1h-20zM974 558h22v1h-22zM972 559h24v1h-24zM970 560h22v1h-22zM968 561h22v1h-22zM967 562h20v1h-20zM964 563h21v1h-21zM962 564h21v1h-21zM960 565h22v1h-22zM958 566h22v1h-22zM955 567h23v1h-23zM952 568h24v1h-24zM950 569h24v1h-24zM946 570h26v1h-26zM877 571h11v1h-11zM943 571h27v1h-27zM874 572h19v1h-19zM938 572h30v1h-30zM872 573h26v1h-26zM933 573h32v1h-32zM870 574h33v1h-33zM926 574h36v1h-36zM868 575h91v1h-91zM866 576h90v1h-90zM865 577h86v1h-86zM863 578h82v1h-82zM862 579h77v1h-77zM860 580h71v1h-71zM859 581h17v1h-17zM900 581h19v1h-19zM857 582h16v1h-16zM856 583h14v1h-14zM854 584h14v1h-14zM853 585h13v1h-13zM851 586h14v1h-14zM850 587h13v1h-13zM849 588h12v1h-12zM848 589h12v1h-12zM847 590h11v1h-11zM846 591h10v1h-10zM845 592h9v1h-9zM844 593h8v1h-8zM844 594h6v1h-6zM843 595h6v1h-6zM842 596h6v1h-6zM842 597h5v1h-5zM841 598h5v1h-5zM841 599h5v1h-5zM841 600h4v1h-4zM840 601h4v1h-4zM840 602h4v1h-4zM839 603h4v1h-4zM839 604h4v1h-4zM839 605h3v1h-3zM838 606h4v1h-4zM838 607h3v1h-3zM838 608h3v1h-3zM837 609h3v1h-3zM837 610h3v1h-3zM837 611h3v1h-3z"/><path fill="#e20000" d="M992 560h4v1h-4zM990 561h6v1h-6zM987 562h9v1h-9zM985 563h11v1h-11zM983 564h13v1h-13zM982 565h14v1h-14zM980 566h16v1h-16zM978 567h18v1h-18zM976 568h19v1h-19zM974 569h18v1h-18zM972 570h18v1h-18zM970 571h18v1h-18zM968 572h18v1h-18zM965 573h19v1h-19zM962 574h20v1h-20zM959 575h21v1h-21zM956 576h21v1h-21zM951 577h23v1h-23zM945 578h26v1h-26zM939 579h29v1h-29zM931 580h33v1h-33zM876 581h24v1h-24zM919 581h41v1h-41zM873 582h83v1h-83zM870 583h81v1h-81zM868 584h76v1h-76zM866 585h71v1h-71zM865 586h63v1h-63zM863 587h53v1h-53zM861 588h41v1h-41zM860 589h28v1h-28zM858 590h22v1h-22zM856 591h18v1h-18zM854 592h15v1h-15zM852 593h13v1h-13zM850 594h12v1h-12zM849 595h11v1h-11zM848 596h10v1h-10zM847 597h9v1h-9zM846 598h8v1h-8zM846 599h7v1h-7zM845 600h6v1h-6zM844 601h6v1h-6zM844 602h5v1h-5zM843 603h5v1h-5zM843 604h4v1h-4zM842 605h5v1h-5zM842 606h4v1h-4zM841 607h4v1h-4zM841 608h4v1h-4zM840 609h4v1h-4zM840 610h3v1h-3zM840 611h3v1h-3z"/><path fill="#ce0000" d="M995 568h1v1h-1zM992 569h4v1h-4zM990 570h6v1h-6zM988 571h8v1h-8zM986 572h10v1h-10zM984 573h12v1h-12zM982 574h14v1h-14zM980 575h16v1h-16zM977 576h18v1h-18zM974 577h17v1h-17zM971 578h18v1h-18zM968 579h18v1h-18zM964 580h20v1h-20zM960 581h21v1h-21zM956 582h22v1h-22zM951 583h24v1h-24zM944 584h27v1h-27zM937 585h30v1h-30zM928 586h35v1h-35zM916 587h41v1h-41zM902 588h49v1h-49zM888 589h57v1h-57zM880 590h59v1h-59zM874 591h58v1h-58zM869 592h56v1h-56zM865 593h51v1h-51zM862 594h39v1h-39zM860 595h22v1h-22zM858 596h16v1h-16zM856 597h13v1h-13zM854 598h12v1h-12zM853 599h10v1h-10zM851 600h10v1h-10zM850 601h9v1h-9zM849 602h8v1h-8zM848 603h8v1h-8zM847 604h7v1h-7zM847 605h6v1h-6zM846 606h6v1h-6zM845 607h6v1h-6zM845 608h5v1h-5zM844 609h5v1h-5zM843 610h5v1h-5zM843 611h4v1h-4z"/><path fill="#ba0000" d="M995 576h1v1h-1zM991 577h5v1h-5zM989 578h7v1h-7zM986 579h10v1h-10zM984 580h12v1h-12zM981 581h15v1h-15zM978 582h18v1h-18zM975 583h21v1h-21zM971 584h21v1h-21zM967 585h22v1h-22zM963 586h23v1h-23zM957 587h26v1h-26zM951 588h28v1h-28zM945 589h30v1h-30zM939 590h32v1h-32zM932 591h35v1h-35zM925 592h39v1h-39zM916 593h44v1h-44zM901 594h55v1h-55zM882 595h69v1h-69zM874 596h71v1h-71zM869 597h69v1h-69zM866 598h63v1h-63zM863 599h52v1h-52zM861 600h21v1h-21zM859 601h15v1h-15zM857 602h13v1h-13zM856 603h11v1h-11zM854 604h10v1h-10zM853 605h9v1h-9zM852 606h8v1h-8zM851 607h8v1h-8zM850 608h7v1h-7zM849 609h7v1h-7zM848 610h6v1h-6zM847 611h6v1h-6z"/><path fill="#a70000" d="M992 584h4v1h-4zM989 585h7v1h-7zM986 586h10v1h-10zM983 587h13v1h-13zM979 588h17v1h-17zM975 589h21v1h-21zM971 590h25v1h-25zM967 591h29v1h-29zM964 592h29v1h-29zM960 593h30v1h-30zM956 594h32v1h-32zM951 595h34v1h-34zM945 596h37v1h-37zM938 597h42v1h-42zM929 598h47v1h-47zM915 599h57v1h-57zM882 600h86v1h-86zM874 601h89v1h-89zM870 602h87v1h-87zM867 603h82v1h-82zM864 604h74v1h-74zM862 605h60v1h-60zM860 606h15v1h-15zM859 607h12v1h-12zM857 608h11v1h-11zM856 609h10v1h-10zM854 610h10v1h-10zM853 611h9v1h-9z"/><path fill="#930000" d="M993 592h3v1h-3zM990 593h6v1h-6zM988 594h8v1h-8zM985 595h11v1h-11zM982 596h14v1h-14zM980 597h16v1h-16zM976 598h20v1h-20zM972 599h24v1h-24zM968 600h28v1h-28zM963 601h33v1h-33zM957 602h39v1h-39zM949 603h47v1h-47zM938 604h58v1h-58zM922 605h72v1h-72zM875 606h114v1h-114zM871 607h115v1h-115zM868 608h116v1h-116zM866 609h115v1h-115zM864 610h115v1h-115zM862 611h115v1h-115z"/><path fill="#800000" d="M994 605h2v1h-2zM989 606h7v1h-7zM986 607h10v1h-10zM984 608h12v1h-12zM981 609h15v1h-15zM979 610h17v1h-17zM977 611h19v1h-19z"/><g shape-rendering="crispEdges"><line x1="203.5" y1="350" x2="203.5" y2="613" stroke="#000" stroke-dasharray="3 3"/><line x1="321.5" y1="350" x2="321.5" y2="613" stroke="#000" stroke-dasharray="3 3"/><line x1="440.5" y1="350" x2="440.5" y2="613" stroke="#000" stroke-dasharray="3 3"/><line x1="558.5" y1="350" x2="558.5" y2="613" stroke="#000" stroke-dasharray="3 3"/><line x1="676.5" y1="350" x2="676.5" y2="613" stroke="#000" stroke-dasharray="3 3"/><line x1="794.5" y1="350" x2="794.5" y2="613" stroke="#000" stroke-dasharray="3 3"/><line x1="912.5" y1="350" x2="912.5" y2="613" stroke="#000" stroke-dasharray="3 3"/><line x1="1031.5" y1="350" x2="1031.5" y2="613" stroke="#000" stroke-dasharray="3 3"/><line x1="1149.5" y1="350" x2="1149.5" y2="613" stroke="#000" stroke-dasharray="3 3"/><line x1="85" y1="456.5" x2="1267" y2="456.5" stroke="#000" stroke-dasharray="3 3"/><line x1="85" y1="570.5" x2="1267" y2="570.5" stroke="#000" stroke-dasharray="3 3"/><rect x="85.5" y="350.5" width="1182" height="263" fill="none" stroke="#000"/><line x1="85.5" y1="345" x2="85.5" y2="350" stroke="#000"/><line x1="109.5" y1="345" x2="109.5" y2="350" stroke="#808080"/><line x1="132.5" y1="345" x2="132.5" y2="350" stroke="#808080"/><line x1="156.5" y1="345" x2="156.5" y2="350" stroke="#808080"/><line x1="180.5" y1="345" x2="180.5" y2="350" stroke="#808080"/><line x1="203.5" y1="345" x2="203.5" y2="350" stroke="#000"/><line x1="227.5" y1="345" x2="227.5" y2="350" stroke="#808080"/><line x1="250.5" y1="345" x2="250.5" y2="350" stroke="#808080"/><line x1="274.5" y1="345" x2="274.5" y2="350" stroke="#808080"/><line x1="298.5" y1="345" x2="298.5" y2="350" stroke="#808080"/><line x1="321.5" y1="345" x2="321.5" y2="350" stroke="#000"/><line x1="345.5" y1="345" x2="345.5" y2="350" stroke="#808080"/><line x1="369.5" y1="345" x2="369.5" y2="350" stroke="#808080"/><line x1="392.5" y1="345" x2="392.5" y2="350" stroke="#808080"/><line x1="416.5" y1="345" x2="416.5" y2="350" stroke="#808080"/><line x1="440.5" y1="345" x2="440.5" y2="350" stroke="#000"/><line x1="463.5" y1="345" x2="463.5" y2="350" stroke="#808080"/><line x1="487.5" y1="345" x2="487.5" y2="350" stroke="#808080"/><line x1="511.5" y1="345" x2="511.5" y2="350" stroke="#808080"/><line x1="534.5" y1="345" x2="534.5" y2="350" stroke="#808080"/><line x1="558.5" y1="345" x2="558.5" y2="350" stroke="#000"/><line x1="581.5" y1="345" x2="581.5" y2="350" stroke="#808080"/><line x1="605.5" y1="345" x2="605.5" y2="350" stroke="#808080"/><line x1="629.5" y1="345" x2="629.5" y2="350" stroke="#808080"/><line x1="652.5" y1="345" x2="652.5" y2="350" stroke="#808080"/><line x1="676.5" y1="345" x2="676.5" y2="350" stroke="#000"/><line x1="700.5" y1="345" x2="700.5" y2="350" stroke="#808080"/><line x1="723.5" y1="345" x2="723.5" y2="350" stroke="#808080"/><line x1="747.5" y1="345" x2="747.5" y2="350" stroke="#808080"/><line x1="771.5" y1="345" x2="771.5" y2="350" stroke="#808080"/><line x1="794.5" y1="345" x2="794.5" y2="350" stroke="#000"/><line x1="818.5" y1="345" x2="818.5" y2="350" stroke="#808080"/><line x1="841.5" y1="345" x2="841.5" y2="350" stroke="#808080"/><line x1="865.5" y1="345" x2="865.5" y2="350" stroke="#808080"/><line x1="889.5" y1="345" x2="889.5" y2="350" stroke="#808080"/><line x1="912.5" y1="345" x2="912.5" y2="350" stroke="#000"/><line x1="936.5" y1="345" x2="936.5" y2="350" stroke="#808080"/><line x1="960.5" y1="345" x2="960.5" y2="350" stroke="#808080"/><line x1="983.5" y1="345" x2="983.5" y2="350" stroke="#808080"/><line x1="1007.5" y1="345" x2="1007.5" y2="350" stroke="#808080"/><line x1="1031.5" y1="345" x2="1031.5" y2="350" stroke="#000"/><line x1="1054.5" y1="345" x2="1054.5" y2="350" stroke="#808080"/><line x1="1078.5" y1="345" x2="1078.5" y2="350" stroke="#808080"/><line x1="1102.5" y1="345" x2="1102.5" y2="350" stroke="#808080"/><line x1="1125.5" y1="345" x2="1125.5" y2="350" stroke="#808080"/><line x1="1149.5" y1="345" x2="1149.5" y2="350" stroke="#000"/><line x1="1172.5" y1="345" x2="1172.5" y2="350" stroke="#808080"/><line x1="1196.5" y1="345" x2="1196.5" y2="350" stroke="#808080"/><line x1="1220.5" y1="345" x2="1220.5" y2="350" stroke="#808080"/><line x1="1243.5" y1="345" x2="1243.5" y2="350" stroke="#808080"/><line x1="1267.5" y1="345" x2="1267.5" y2="350" stroke="#000"/><line x1="80" y1="456.5" x2="85" y2="456.5" stroke="#000"/><line x1="1267" y1="456.5" x2="1272" y2="456.5" stroke="#000"/><line x1="80" y1="570.5" x2="85" y2="570.5" stroke="#000"/><line x1="1267" y1="570.5" x2="1272" y2="570.5" stroke="#000"/><rect x="916.69" y="249" width="3.99" height="14" fill="#e6e6ff"/><rect x="920.38" y="249" width="3.99" height="14" fill="#d4d4ff"/><rect x="924.06" y="249" width="3.99" height="14" fill="#c4c4ff"/><rect x="927.75" y="249" width="3.99" height="14" fill="#b2b2ff"/><rect x="931.44" y="249" width="3.99" height="14" fill="#a2a2ff"/><rect x="935.12" y="249" width="3.99" height="14" fill="#9090ff"/><rect x="938.81" y="249" width="3.99" height="14" fill="#8080ff"/><rect x="942.50" y="249" width="3.99" height="14" fill="#6e6eff"/><rect x="946.19" y="249" width="3.99" height="14" fill="#5e5eff"/><rect x="949.88" y="249" width="3.99" height="14" fill="#4c4cff"/><rect x="953.56" y="249" width="3.99" height="14" fill="#3c3cff"/><rect x="957.25" y="249" width="3.99" height="14" fill="#2a2aff"/><rect x="960.94" y="249" width="3.99" height="14" fill="#1a1aff"/><rect x="964.62" y="249" width="3.99" height="14" fill="#0808ff"/><rect x="968.31" y="249" width="3.99" height="14" fill="#0008ff"/><rect x="972.00" y="249" width="3.99" height="14" fill="#0018ff"/><rect x="975.69" y="249" width="3.99" height="14" fill="#0028ff"/><rect x="979.38" y="249" width="3.99" height="14" fill="#0038ff"/><rect x="983.06" y="249" width="3.99" height="14" fill="#0048ff"/><rect x="986.75" y="249" width="3.99" height="14" fill="#0058ff"/><rect x="990.44" y="249" width="3.99" height="14" fill="#0068ff"/><rect x="994.12" y="249" width="3.99" height="14" fill="#0078ff"/><rect x="997.81" y="249" width="3.99" height="14" fill="#0087ff"/><rect x="1001.50" y="249" width="3.99" height="14" fill="#0097ff"/><rect x="1005.19" y="249" width="3.99" height="14" fill="#00a7ff"/><rect x="1008.88" y="249" width="3.99" height="14" fill="#00b7ff"/><rect x="1012.56" y="249" width="3.99" height="14" fill="#00c7ff"/><rect x="1016.25" y="249" width="3.99" height="14" fill="#00d7ff"/><rect x="1019.94" y="249" width="3.99" height="14" fill="#00e7ff"/><rect x="1023.62" y="249" width="3.99" height="14" fill="#00f7ff"/><rect x="1027.31" y="249" width="3.99" height="14" fill="#00fcf8"/><rect x="1031.00" y="249" width="3.99" height="14" fill="#00f6e8"/><rect x="1034.69" y="249" width="3.99" height="14" fill="#00f0da"/><rect x="1038.38" y="249" width="3.99" height="14" fill="#00eaca"/><rect x="1042.06" y="249" width="3.99" height="14" fill="#00e4bc"/><rect x="1045.75" y="249" width="3.99" height="14" fill="#00deac"/><rect x="1049.44" y="249" width="3.99" height="14" fill="#00d89e"/><rect x="1053.12" y="249" width="3.99" height="14" fill="#00d28e"/><rect x="1056.81" y="249" width="3.99" height="14" fill="#00cc80"/><rect x="1060.50" y="249" width="3.99" height="14" fill="#00c670"/><rect x="1064.19" y="249" width="3.99" height="14" fill="#00c062"/><rect x="1067.88" y="249" width="3.99" height="14" fill="#00ba52"/><rect x="1071.56" y="249" width="3.99" height="14" fill="#00b444"/><rect x="1075.25" y="249" width="3.99" height="14" fill="#00ae34"/><rect x="1078.94" y="249" width="3.99" height="14" fill="#00a826"/><rect x="1082.62" y="249" width="3.99" height="14" fill="#00a216"/><rect x="1086.31" y="249" width="3.99" height="14" fill="#009c08"/><rect x="1090.00" y="249" width="3.99" height="14" fill="#079c00"/><rect x="1093.69" y="249" width="3.99" height="14" fill="#15a200"/><rect x="1097.38" y="249" width="3.99" height="14" fill="#23a700"/><rect x="1101.06" y="249" width="3.99" height="14" fill="#32ad00"/><rect x="1104.75" y="249" width="3.99" height="14" fill="#40b200"/><rect x="1108.44" y="249" width="3.99" height="14" fill="#4eb800"/><rect x="1112.12" y="249" width="3.99" height="14" fill="#5cbe00"/><rect x="1115.81" y="249" width="3.99" height="14" fill="#6ac400"/><rect x="1119.50" y="249" width="3.99" height="14" fill="#78c900"/><rect x="1123.19" y="249" width="3.99" height="14" fill="#87cf00"/><rect x="1126.88" y="249" width="3.99" height="14" fill="#95d400"/><rect x="1130.56" y="249" width="3.99" height="14" fill="#a3da00"/><rect x="1134.25" y="249" width="3.99" height="14" fill="#b1e000"/><rect x="1137.94" y="249" width="3.99" height="14" fill="#bfe600"/><rect x="1141.62" y="249" width="3.99" height="14" fill="#cdeb00"/><rect x="1145.31" y="249" width="3.99" height="14" fill="#dcf100"/><rect x="1149.00" y="249" width="3.99" height="14" fill="#eaf600"/><rect x="1152.69" y="249" width="3.99" height="14" fill="#f8fc00"/><rect x="1156.38" y="249" width="3.99" height="14" fill="#fff700"/><rect x="1160.06" y="249" width="3.99" height="14" fill="#ffe700"/><rect x="1163.75" y="249" width="3.99" height="14" fill="#ffd700"/><rect x="1167.44" y="249" width="3.99" height="14" fill="#ffc700"/><rect x="1171.12" y="249" width="3.99" height="14" fill="#ffb700"/><rect x="1174.81" y="249" width="3.99" height="14" fill="#ffa700"/><rect x="1178.50" y="249" width="3.99" height="14" fill="#ff9700"/><rect x="1182.19" y="249" width="3.99" height="14" fill="#ff8700"/><rect x="1185.88" y="249" width="3.99" height="14" fill="#ff7800"/><rect x="1189.56" y="249" width="3.99" height="14" fill="#ff6800"/><rect x="1193.25" y="249" width="3.99" height="14" fill="#ff5800"/><rect x="1196.94" y="249" width="3.99" height="14" fill="#ff4800"/><rect x="1200.62" y="249" width="3.99" height="14" fill="#ff3800"/><rect x="1204.31" y="249" width="3.99" height="14" fill="#ff2800"/><rect x="1208.00" y="249" width="3.99" height="14" fill="#ff1800"/><rect x="1211.69" y="249" width="3.99" height="14" fill="#ff0800"/><rect x="1215.38" y="249" width="3.99" height="14" fill="#f50000"/><rect x="1219.06" y="249" width="3.99" height="14" fill="#e20000"/><rect x="1222.75" y="249" width="3.99" height="14" fill="#ce0000"/><rect x="1226.44" y="249" width="3.99" height="14" fill="#ba0000"/><rect x="1230.12" y="249" width="3.99" height="14" fill="#a70000"/><rect x="1233.81" y="249" width="3.99" height="14" fill="#930000"/><rect x="1237.50" y="249" width="3.99" height="14" fill="#800000"/><rect x="1241.19" y="249" width="3.99" height="14" fill="#6c0000"/><rect x="1244.88" y="249" width="3.99" height="14" fill="#580000"/><rect x="1248.56" y="249" width="3.99" height="14" fill="#450000"/><rect x="1252.25" y="249" width="3.99" height="14" fill="#310000"/><rect x="1255.94" y="249" width="3.99" height="14" fill="#1d0000"/><rect x="1259.62" y="249" width="3.99" height="14" fill="#0a0000"/><rect x="1263.31" y="249" width="3.99" height="14" fill="#000000"/><line x1="913.5" y1="263" x2="913.5" y2="265" stroke="#000"/><line x1="957.5" y1="263" x2="957.5" y2="265" stroke="#000"/><line x1="1001.5" y1="263" x2="1001.5" y2="265" stroke="#000"/><line x1="1045.5" y1="263" x2="1045.5" y2="265" stroke="#000"/><line x1="1090.5" y1="263" x2="1090.5" y2="265" stroke="#000"/><line x1="1134.5" y1="263" x2="1134.5" y2="265" stroke="#000"/><line x1="1178.5" y1="263" x2="1178.5" y2="265" stroke="#000"/><line x1="1222.5" y1="263" x2="1222.5" y2="265" stroke="#000"/><line x1="1266.5" y1="263" x2="1266.5" y2="265" stroke="#000"/><path d="M1149.5 650 V660.5 H1267.5 V651" fill="none" stroke="#000"/></g><path d="M356.9 614 L361.4 622 L352.4 622 Z" fill="#000"/><path d="M392.3 614 L396.8 622 L387.8 622 Z" fill="#000"/><path d="M427.8 614 L432.3 622 L423.3 622 Z" fill="#000"/><path d="M463.2 614 L467.7 622 L458.7 622 Z" fill="#000"/><path d="M498.7 614 L503.2 622 L494.2 622 Z" fill="#000"/><path d="M534.2 614 L538.7 622 L529.7 622 Z" fill="#000"/><path d="M569.6 614 L574.1 622 L565.1 622 Z" fill="#000"/><path d="M605.1 614 L609.6 622 L600.6 622 Z" fill="#000"/><path d="M640.5 614 L645.0 622 L636.0 622 Z" fill="#000"/><path d="M676.0 614 L680.5 622 L671.5 622 Z" fill="#000"/><path d="M711.5 614 L716.0 622 L707.0 622 Z" fill="#000"/><path d="M746.9 614 L751.4 622 L742.4 622 Z" fill="#000"/><path d="M782.4 614 L786.9 622 L777.9 622 Z" fill="#000"/><path d="M817.8 614 L822.3 622 L813.3 622 Z" fill="#000"/><path d="M853.3 614 L857.8 622 L848.8 622 Z" fill="#000"/><path d="M888.8 614 L893.3 622 L884.3 622 Z" fill="#000"/><path d="M924.2 614 L928.7 622 L919.7 622 Z" fill="#000"/><path d="M959.7 614 L964.2 622 L955.2 622 Z" fill="#000"/><path d="M995.1 614 L999.6 622 L990.6 622 Z" fill="#000"/><path d="M89 645 L94 654 L84 654 Z" fill="#000"/></svg>
<div class="a" style="left:80.55px;top:328px;font-size:16px;line-height:16px;">0</div>
<div class="a" style="left:194.30px;top:328px;font-size:16px;line-height:16px;">10</div>
<div class="a" style="left:312.50px;top:328px;font-size:16px;line-height:16px;">20</div>
<div class="a" style="left:430.70px;top:328px;font-size:16px;line-height:16px;">30</div>
<div class="a" style="left:548.90px;top:328px;font-size:16px;line-height:16px;">40</div>
<div class="a" style="left:667.10px;top:328px;font-size:16px;line-height:16px;">50</div>
<div class="a" style="left:785.30px;top:328px;font-size:16px;line-height:16px;">60</div>
<div class="a" style="left:903.50px;top:328px;font-size:16px;line-height:16px;">70</div>
<div class="a" style="left:1021.70px;top:328px;font-size:16px;line-height:16px;">80</div>
<div class="a" style="left:1139.90px;top:328px;font-size:16px;line-height:16px;">90</div>
<div class="a" style="left:1253.65px;top:328px;font-size:16px;line-height:16px;">100</div>
<div class="a" style="left:583.00px;top:309px;font-size:16px;line-height:16px;letter-spacing:-0.014px;">Surface Distance (meters)</div>
<div class="a" style="left:41.80px;top:283px;font-size:17px;line-height:17px;letter-spacing:0.430px;color:#0000ff;-webkit-text-stroke:0.35px #0000ff;">S-Velocity (Vs) Map</div>
<div class="a" style="left:899.65px;top:268px;font-size:16px;line-height:16px;">100</div>
<div class="a" style="left:943.78px;top:268px;font-size:16px;line-height:16px;">150</div>
<div class="a" style="left:987.90px;top:268px;font-size:16px;line-height:16px;">200</div>
<div class="a" style="left:1032.03px;top:268px;font-size:16px;line-height:16px;">250</div>
<div class="a" style="left:1076.15px;top:268px;font-size:16px;line-height:16px;">300</div>
<div class="a" style="left:1120.28px;top:268px;font-size:16px;line-height:16px;">350</div>
<div class="a" style="left:1164.40px;top:268px;font-size:16px;line-height:16px;">400</div>
<div class="a" style="left:1208.53px;top:268px;font-size:16px;line-height:16px;">450</div>
<div class="a" style="left:1252.65px;top:268px;font-size:16px;line-height:16px;">500</div>
<div class="a" style="left:1009.50px;top:285px;font-size:16px;line-height:16px;letter-spacing:-0.077px;">S-Velocity (Vs) (m/sec)</div>
<div class="a" style="left:55.37px;top:449px;font-size:16px;line-height:16px;">-10</div>
<div class="a" style="left:1272.00px;top:449px;font-size:16px;line-height:16px;">-10</div>
<div class="a" style="left:55.37px;top:563px;font-size:16px;line-height:16px;">-20</div>
<div class="a" style="left:1272.00px;top:563px;font-size:16px;line-height:16px;">-20</div>
<div class="a" style="left:100.50px;top:643px;font-size:16px;line-height:16px;letter-spacing:-0.211px;white-space:pre;">: Data Points,   File: &lt;Line1(SR)(ActiveOT)(2DVs).TXT&gt;</div>
<div class="a" style="left:1191.50px;top:638px;font-size:16px;line-height:16px;letter-spacing:-0.524px;">10 m</div>
<div class="a" style="left:-7px;top:473px;width:100px;text-align:center;font-size:16px;line-height:16px;transform:rotate(-90deg)">Depth (m)</div>
<div class="a" style="left:1259px;top:473px;width:100px;text-align:center;font-size:16px;line-height:16px;transform:rotate(90deg)">Depth (m)</div>
</body></html>
